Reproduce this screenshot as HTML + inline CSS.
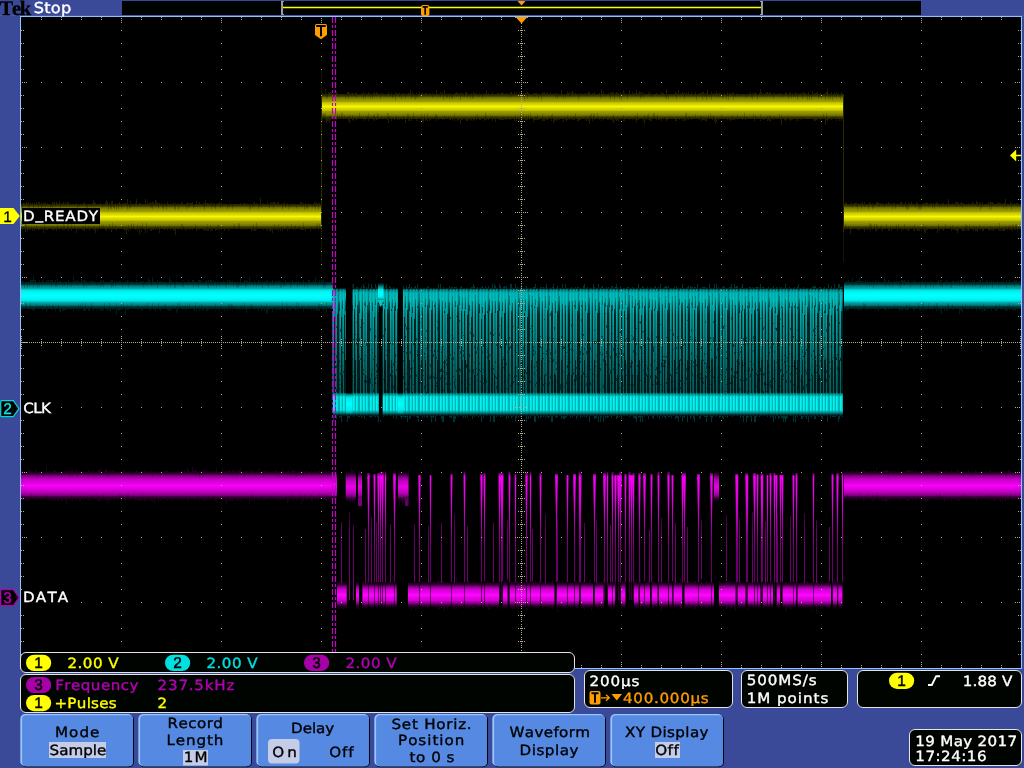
<!DOCTYPE html>
<html lang="en"><head><meta charset="utf-8"><title>Tek oscilloscope - Stop</title>
<style>html,body{margin:0;padding:0;background:#3b4a98;overflow:hidden}svg{display:block;font-family:'DejaVu Sans','Liberation Sans',sans-serif;font-kerning:none}text{white-space:pre;text-rendering:geometricPrecision}svg{will-change:transform}</style>
</head><body>
<svg width="1024" height="768" viewBox="0 0 1024 768">
<defs>
<linearGradient id="gy" x1="0" y1="0" x2="0" y2="1"><stop offset="0" stop-color="#202000"/><stop offset="0.09" stop-color="#3c3c00"/><stop offset="0.13" stop-color="#6c6c00"/><stop offset="0.22" stop-color="#8c8c00"/><stop offset="0.31" stop-color="#a0a000"/><stop offset="0.35" stop-color="#c8c800"/><stop offset="0.43" stop-color="#dcdc00"/><stop offset="0.47" stop-color="#ecec00"/><stop offset="0.5" stop-color="#f8f800"/><stop offset="0.53" stop-color="#ecec00"/><stop offset="0.57" stop-color="#dcdc00"/><stop offset="0.65" stop-color="#c8c800"/><stop offset="0.69" stop-color="#a0a000"/><stop offset="0.78" stop-color="#8c8c00"/><stop offset="0.87" stop-color="#6c6c00"/><stop offset="0.91" stop-color="#3c3c00"/><stop offset="1" stop-color="#202000"/></linearGradient>
<linearGradient id="gc" x1="0" y1="0" x2="0" y2="1"><stop offset="0" stop-color="#001c1c"/><stop offset="0.09" stop-color="#003838"/><stop offset="0.14" stop-color="#007c7c"/><stop offset="0.24" stop-color="#00a8a8"/><stop offset="0.29" stop-color="#00dcdc"/><stop offset="0.36" stop-color="#00f4f4"/><stop offset="0.5" stop-color="#00ffff"/><stop offset="0.64" stop-color="#00f4f4"/><stop offset="0.71" stop-color="#00dcdc"/><stop offset="0.76" stop-color="#00a8a8"/><stop offset="0.86" stop-color="#007c7c"/><stop offset="0.91" stop-color="#003838"/><stop offset="1" stop-color="#001c1c"/></linearGradient>
<linearGradient id="gcl" x1="0" y1="0" x2="0" y2="1"><stop offset="0" stop-color="#006060"/><stop offset="0.1" stop-color="#00c0c0"/><stop offset="0.2" stop-color="#00ecec"/><stop offset="0.5" stop-color="#00ffff"/><stop offset="0.8" stop-color="#00ecec"/><stop offset="0.9" stop-color="#00c0c0"/><stop offset="1" stop-color="#006060"/></linearGradient>
<linearGradient id="gmh" x1="0" y1="0" x2="0" y2="1"><stop offset="0" stop-color="#1c001c"/><stop offset="0.08" stop-color="#3c003c"/><stop offset="0.13" stop-color="#7c007c"/><stop offset="0.2" stop-color="#a000a0"/><stop offset="0.27" stop-color="#c400c4"/><stop offset="0.4" stop-color="#e000e0"/><stop offset="0.5" stop-color="#fa00fa"/><stop offset="0.6" stop-color="#e000e0"/><stop offset="0.73" stop-color="#c400c4"/><stop offset="0.8" stop-color="#a000a0"/><stop offset="0.87" stop-color="#7c007c"/><stop offset="0.92" stop-color="#3c003c"/><stop offset="1" stop-color="#1c001c"/></linearGradient>
<linearGradient id="gmh2" x1="0" y1="0" x2="0" y2="1"><stop offset="0" stop-color="#1c001c"/><stop offset="0.08" stop-color="#380038"/><stop offset="0.13" stop-color="#700070"/><stop offset="0.2" stop-color="#980098"/><stop offset="0.27" stop-color="#b800b8"/><stop offset="0.4" stop-color="#d400d4"/><stop offset="0.5" stop-color="#e800e8"/><stop offset="0.6" stop-color="#d400d4"/><stop offset="0.73" stop-color="#b800b8"/><stop offset="0.8" stop-color="#980098"/><stop offset="0.87" stop-color="#700070"/><stop offset="0.92" stop-color="#380038"/><stop offset="1" stop-color="#1c001c"/></linearGradient>
<linearGradient id="gml" x1="0" y1="0" x2="0" y2="1"><stop offset="0" stop-color="#1c001c"/><stop offset="0.08" stop-color="#3c003c"/><stop offset="0.13" stop-color="#780078"/><stop offset="0.2" stop-color="#a400a4"/><stop offset="0.27" stop-color="#d000d0"/><stop offset="0.4" stop-color="#ec00ec"/><stop offset="0.5" stop-color="#ff08ff"/><stop offset="0.6" stop-color="#ec00ec"/><stop offset="0.73" stop-color="#d000d0"/><stop offset="0.8" stop-color="#a400a4"/><stop offset="0.87" stop-color="#780078"/><stop offset="0.92" stop-color="#3c003c"/><stop offset="1" stop-color="#1c001c"/></linearGradient>
<linearGradient id="gb" gradientUnits="userSpaceOnUse" x1="0" y1="286" x2="0" y2="416"><stop offset="0.02" stop-color="#001c1c"/><stop offset="0.03" stop-color="#004848"/><stop offset="0.05" stop-color="#008888"/><stop offset="0.1" stop-color="#008080"/><stop offset="0.15" stop-color="#005050"/><stop offset="0.22" stop-color="#002424"/><stop offset="0.43" stop-color="#002020"/><stop offset="0.82" stop-color="#001a1a"/><stop offset="0.83" stop-color="#007878"/><stop offset="0.85" stop-color="#00b4b4"/><stop offset="0.96" stop-color="#00b4b4"/><stop offset="0.98" stop-color="#006868"/><stop offset="0.99" stop-color="#001c1c"/></linearGradient>
<linearGradient id="gs" gradientUnits="userSpaceOnUse" x1="0" y1="287" x2="0" y2="415"><stop offset="0.01" stop-color="#004444"/><stop offset="0.02" stop-color="#008c8c"/><stop offset="0.05" stop-color="#00bcbc"/><stop offset="0.1" stop-color="#00c0c0"/><stop offset="0.2" stop-color="#00aaaa"/><stop offset="0.3" stop-color="#009a9a"/><stop offset="0.43" stop-color="#008c8c"/><stop offset="0.65" stop-color="#006e6e"/><stop offset="0.82" stop-color="#005e5e"/><stop offset="0.84" stop-color="#00a0a0"/><stop offset="0.86" stop-color="#00f4f4"/><stop offset="0.96" stop-color="#00f4f4"/><stop offset="0.98" stop-color="#009090"/><stop offset="1" stop-color="#003030"/></linearGradient>
<linearGradient id="gm" gradientUnits="userSpaceOnUse" x1="0" y1="476" x2="0" y2="600"><stop offset="0" stop-color="#e000e0"/><stop offset="0.19" stop-color="#c400c4"/><stop offset="0.44" stop-color="#900090"/><stop offset="0.64" stop-color="#680068"/><stop offset="0.87" stop-color="#640064"/><stop offset="1" stop-color="#900090"/></linearGradient>
<linearGradient id="gm2" gradientUnits="userSpaceOnUse" x1="0" y1="473" x2="0" y2="535"><stop offset="0" stop-color="#f000f0" stop-opacity="0.4"/><stop offset="0.06" stop-color="#f400f4" stop-opacity="1"/><stop offset="0.39" stop-color="#e800e8" stop-opacity="0.9"/><stop offset="1" stop-color="#c000c0" stop-opacity="0"/></linearGradient>
<linearGradient id="gm3" gradientUnits="userSpaceOnUse" x1="0" y1="512" x2="0" y2="600"><stop offset="0" stop-color="#380038"/><stop offset="0.26" stop-color="#640064"/><stop offset="0.82" stop-color="#700070"/><stop offset="1" stop-color="#900090"/></linearGradient>
<clipPath id="cp"><rect x="21" y="17" width="1000" height="651"/></clipPath>
</defs>
<rect width="1024" height="768" fill="#3b4a98"/>
<rect x="122" y="1" width="799" height="14" fill="#000400"/>
<rect x="0" y="15" width="1024" height="1" fill="#4656a8"/>
<rect x="20" y="16" width="1002" height="653" fill="#8fc4ff"/>
<rect x="1022" y="16" width="2" height="653" fill="#3b4a98"/>
<rect x="21" y="17" width="1000" height="651" fill="#000"/>
<g clip-path="url(#cp)">
<path d="M21.5 204V229M22.5 203V230M23.5 203V229M24.5 203V229M25.5 204V232M26.5 202V230M27.5 203V231M28.5 202V229M29.5 204V230M30.5 203V230M31.5 204V229M32.5 203V231M34.5 203V231M36.5 202V230M38.5 202V230M39.5 202V230M41.5 202V230M43.5 203V233M44.5 203V229M45.5 202V230M46.5 204V230M47.5 203V230M50.5 204V229M52.5 202V230M53.5 203V230M54.5 202V230M56.5 202V231M57.5 203V229M58.5 204V229M59.5 201V230M60.5 203V229M62.5 203V230M63.5 202V230M64.5 204V230M65.5 202V229M67.5 202V229M68.5 202V231M69.5 204V229M71.5 204V231M76.5 203V233M78.5 204V230M82.5 204V230M83.5 203V230M84.5 202V231M89.5 204V231M92.5 203V229M93.5 200V230M94.5 202V230M95.5 203V233M97.5 204V231M99.5 204V229M100.5 203V229M105.5 202V230M106.5 200V231M107.5 202V229M109.5 203V230M111.5 201V232M112.5 201V230M115.5 203V230M116.5 204V230M118.5 203V229M119.5 202V229M120.5 204V229M122.5 203V230M124.5 203V231M125.5 203V230M126.5 203V234M127.5 199V230M128.5 204V231M130.5 201V230M135.5 203V230M136.5 199V229M137.5 204V231M139.5 203V234M140.5 203V229M141.5 204V232M144.5 204V230M145.5 199V233M146.5 204V229M147.5 202V231M149.5 203V229M150.5 202V231M151.5 203V231M152.5 202V230M153.5 202V230M154.5 204V229M155.5 200V230M156.5 201V229M157.5 203V230M158.5 203V229M159.5 203V233M161.5 203V229M164.5 203V230M167.5 202V230M170.5 203V230M173.5 202V231M174.5 204V230M175.5 203V235M177.5 204V229M178.5 203V230M180.5 204V229M181.5 202V230M182.5 203V230M185.5 204V231M186.5 203V230M187.5 202V229M188.5 203V230M189.5 203V229M190.5 203V230M191.5 203V229M192.5 202V230M194.5 204V229M196.5 201V231M197.5 204V230M199.5 202V230M203.5 203V230M204.5 203V231M205.5 200V230M206.5 203V230M207.5 203V231M208.5 203V231M210.5 203V231M211.5 203V230M212.5 203V231M214.5 203V229M215.5 204V231M216.5 203V230M217.5 204V230M218.5 203V230M219.5 202V230M220.5 203V229M221.5 203V230M224.5 204V231M228.5 204V231M229.5 203V229M234.5 204V229M240.5 203V229M241.5 204V230M243.5 203V229M244.5 203V230M246.5 203V230M249.5 204V229M251.5 204V231M252.5 204V230M253.5 203V230M254.5 202V231M255.5 204V231M256.5 203V230M260.5 198V229M261.5 204V229M263.5 203V230M266.5 204V230M267.5 202V231M268.5 204V229M269.5 204V231M270.5 202V231M271.5 203V230M272.5 203V233M273.5 202V229M274.5 202V230M275.5 203V230M277.5 202V230M278.5 202V231M280.5 204V231M282.5 203V231M284.5 202V230M287.5 203V231M288.5 204V229M289.5 204V230M293.5 204V230M295.5 204V230M300.5 202V230M301.5 202V230M302.5 204V230M303.5 203V230M305.5 203V231M308.5 203V229M310.5 204V231M314.5 202V230M315.5 203V229M316.5 202V229M318.5 203V230M319.5 203V229" stroke="#202000" stroke-width="1" fill="none"/>
<rect x="21" y="204" width="300" height="25" fill="url(#gy)"/>
<path d="M22.5 208.1V203.5M23.5 223.72V229.5M25.5 222.73V229.5M26.5 222.58V229.5M28.5 208.68V203.5M29.5 209.8V203.5M31.5 226.47V229.5M33.5 210.27V203.5M36.5 225.3V229.5M38.5 208.93V203.5M41.5 208.29V203.5M42.5 206.73V203.5M44.5 222.74V229.5M45.5 207.29V203.5M50.5 208.37V203.5M51.5 206.28V203.5M52.5 209.95V203.5M55.5 206.52V203.5M57.5 224.25V229.5M60.5 208.61V203.5M61.5 225.46V229.5M63.5 222.52V229.5M64.5 224.51V229.5M67.5 222.8V229.5M68.5 222.91V229.5M71.5 223.09V229.5M74.5 224.77V229.5M77.5 210.2V203.5M78.5 226.92V229.5M79.5 206.85V203.5M82.5 226.25V229.5M83.5 226.53V229.5M85.5 223.64V229.5M86.5 209.32V203.5M87.5 210.33V203.5M88.5 225.36V229.5M91.5 206.97V203.5M93.5 226.36V229.5M97.5 226.97V229.5M99.5 224.19V229.5M101.5 225.94V229.5M102.5 207.73V203.5M103.5 224.82V229.5M108.5 210.49V203.5M109.5 223.81V229.5M110.5 208.86V203.5M111.5 209.48V203.5M112.5 222.51V229.5M113.5 208.15V203.5M114.5 209.14V203.5M115.5 225.31V229.5M116.5 210.44V203.5M118.5 210.21V203.5M121.5 209.31V203.5M122.5 226.19V229.5M127.5 209.76V203.5M128.5 224.89V229.5M129.5 209.78V203.5M130.5 208.02V203.5M131.5 223.4V229.5M133.5 223.89V229.5M137.5 224.92V229.5M140.5 225.84V229.5M141.5 226.98V229.5M142.5 222.67V229.5M146.5 222.74V229.5M150.5 206.32V203.5M151.5 208.22V203.5M152.5 209.44V203.5M155.5 226.46V229.5M157.5 226.33V229.5M158.5 208.11V203.5M160.5 225.76V229.5M162.5 207.87V203.5M163.5 210.38V203.5M165.5 206.1V203.5M166.5 209.88V203.5M169.5 225.16V229.5M170.5 206.2V203.5M174.5 209.39V203.5M175.5 210.35V203.5M178.5 210.05V203.5M181.5 224.01V229.5M182.5 223.66V229.5M183.5 225.92V229.5M186.5 209.21V203.5M188.5 208.17V203.5M189.5 207.33V203.5M193.5 208.54V203.5M194.5 207.12V203.5M195.5 224.71V229.5M203.5 206.83V203.5M204.5 210.01V203.5M205.5 206.04V203.5M207.5 224.31V229.5M210.5 225.41V229.5M211.5 209.32V203.5M212.5 206.52V203.5M214.5 207.83V203.5M215.5 209.03V203.5M217.5 224.99V229.5M218.5 224.47V229.5M220.5 208.42V203.5M222.5 207.1V203.5M227.5 209.44V203.5M228.5 206.2V203.5M229.5 207.54V203.5M230.5 226.93V229.5M232.5 209.62V203.5M233.5 226.48V229.5M234.5 224.3V229.5M238.5 223.14V229.5M239.5 223.59V229.5M249.5 209.68V203.5M250.5 209.09V203.5M252.5 208.7V203.5M253.5 224.41V229.5M254.5 206.64V203.5M256.5 222.55V229.5M258.5 209.37V203.5M259.5 206.98V203.5M261.5 207.91V203.5M267.5 206.23V203.5M269.5 208.19V203.5M273.5 208.78V203.5M274.5 224.38V229.5M278.5 223.87V229.5M281.5 226.11V229.5M282.5 209.76V203.5M285.5 207.97V203.5M287.5 225.5V229.5M288.5 209.18V203.5M290.5 206.97V203.5M291.5 224.19V229.5M294.5 226.12V229.5M295.5 225.44V229.5M296.5 208.57V203.5M298.5 226.68V229.5M299.5 226.23V229.5M301.5 206.76V203.5M303.5 222.82V229.5M304.5 210.04V203.5M306.5 208.47V203.5M307.5 208.69V203.5M311.5 226.56V229.5M312.5 207.38V203.5M314.5 206.53V203.5M315.5 209.45V203.5M316.5 225.01V229.5M317.5 223.15V229.5M318.5 209.76V203.5M319.5 223.94V229.5" stroke="#000" stroke-opacity=".2" stroke-width="1" fill="none"/>
<path d="M322.5 93V121M325.5 89V120M326.5 93V123M327.5 94V121M328.5 92V121M329.5 93V123M330.5 92V120M331.5 93V119M333.5 93V119M336.5 92V120M337.5 93V119M347.5 92V119M348.5 92V121M349.5 92V123M351.5 93V119M352.5 93V120M353.5 93V121M355.5 93V119M356.5 92V120M357.5 94V119M359.5 94V119M361.5 94V119M362.5 93V119M363.5 92V121M365.5 93V120M368.5 92V121M370.5 93V119M373.5 93V120M374.5 92V121M376.5 92V120M377.5 93V120M380.5 93V119M382.5 93V119M387.5 94V120M388.5 92V123M391.5 93V121M394.5 94V120M395.5 92V119M396.5 93V119M397.5 94V120M398.5 93V119M399.5 93V120M400.5 94V119M402.5 93V120M404.5 93V119M405.5 94V123M406.5 94V119M408.5 93V121M409.5 93V121M410.5 90V119M411.5 94V121M412.5 92V119M416.5 93V121M418.5 94V119M419.5 92V119M421.5 93V121M422.5 93V121M423.5 94V123M425.5 93V121M426.5 93V120M427.5 94V121M428.5 94V119M429.5 93V121M430.5 94V120M432.5 93V119M434.5 94V119M435.5 94V119M436.5 90V121M438.5 94V120M440.5 92V119M442.5 92V120M443.5 94V119M444.5 90V120M446.5 93V119M449.5 93V120M450.5 94V120M452.5 94V120M454.5 94V121M455.5 93V119M456.5 92V119M457.5 93V121M458.5 93V120M460.5 93V124M461.5 93V120M462.5 93V120M465.5 92V120M466.5 92V121M467.5 93V121M468.5 94V120M470.5 94V121M471.5 93V120M473.5 92V121M474.5 93V120M475.5 94V119M476.5 93V120M479.5 93V120M480.5 94V120M484.5 93V121M485.5 94V120M486.5 90V120M487.5 94V119M488.5 93V120M492.5 92V121M495.5 94V122M497.5 93V119M498.5 93V119M499.5 94V120M500.5 93V120M501.5 93V120M502.5 92V120M503.5 93V120M504.5 94V119M505.5 93V120M507.5 93V120M508.5 94V119M510.5 92V120M511.5 92V119M514.5 92V121M516.5 92V121M519.5 92V121M521.5 92V119M523.5 93V120M525.5 93V120M526.5 93V120M527.5 92V120M528.5 93V119M529.5 94V120M533.5 93V122M534.5 93V120M535.5 93V120M536.5 93V120M537.5 94V120M538.5 93V120M539.5 94V120M542.5 92V121M543.5 93V121M544.5 92V121M546.5 93V120M547.5 93V120M550.5 92V119M551.5 94V121M553.5 94V123M554.5 93V121M555.5 94V120M556.5 93V121M557.5 93V120M559.5 94V120M561.5 90V119M563.5 94V122M565.5 94V120M566.5 94V121M567.5 92V120M568.5 93V119M569.5 92V120M571.5 92V119M572.5 91V120M573.5 93V120M574.5 94V120M575.5 93V119M576.5 94V119M577.5 94V121M578.5 93V121M579.5 94V120M580.5 93V120M585.5 93V120M586.5 93V121M588.5 92V121M589.5 92V124M590.5 94V119M592.5 93V121M593.5 94V119M594.5 92V120M599.5 93V120M601.5 89V121M603.5 92V120M607.5 94V120M608.5 93V120M610.5 92V120M611.5 93V120M612.5 92V121M613.5 92V123M615.5 93V120M616.5 92V121M617.5 93V120M618.5 93V121M620.5 92V120M623.5 90V121M624.5 93V121M625.5 94V119M626.5 94V119M629.5 90V120M632.5 92V120M634.5 93V119M635.5 93V120M636.5 90V122M637.5 94V120M638.5 93V120M639.5 91V119M640.5 92V119M642.5 92V119M643.5 93V121M644.5 94V124M646.5 94V120M648.5 92V120M649.5 94V120M650.5 93V121M651.5 94V121M656.5 93V120M658.5 94V120M659.5 94V120M661.5 92V121M662.5 93V119M663.5 93V119M666.5 89V121M667.5 94V120M675.5 92V121M676.5 93V121M678.5 90V119M679.5 94V120M680.5 93V119M681.5 94V119M682.5 92V121M683.5 93V119M684.5 93V121M685.5 94V121M686.5 92V120M688.5 92V120M689.5 94V119M691.5 92V120M692.5 94V119M693.5 94V119M695.5 92V119M699.5 93V120M700.5 93V119M701.5 93V121M702.5 92V120M703.5 92V120M704.5 94V120M705.5 93V121M706.5 93V121M707.5 90V119M708.5 94V119M711.5 92V119M712.5 94V120M713.5 93V119M714.5 94V121M715.5 93V124M716.5 91V122M718.5 93V120M719.5 93V119M720.5 93V119M724.5 93V119M727.5 92V120M729.5 93V120M730.5 93V121M731.5 94V120M732.5 92V120M733.5 93V120M734.5 93V120M736.5 94V119M737.5 93V120M742.5 94V120M745.5 94V120M747.5 93V119M748.5 94V119M750.5 92V119M752.5 93V119M754.5 93V121M755.5 92V119M759.5 93V119M760.5 89V121M761.5 92V119M763.5 93V120M765.5 93V119M766.5 92V119M767.5 92V121M768.5 93V120M769.5 93V121M770.5 92V121M773.5 93V120M774.5 93V119M778.5 93V119M780.5 93V120M781.5 94V125M784.5 94V120M785.5 92V121M786.5 93V120M789.5 93V120M790.5 92V121M791.5 94V120M792.5 93V120M793.5 94V119M795.5 92V119M796.5 93V121M798.5 93V121M800.5 93V120M802.5 93V119M803.5 92V119M804.5 93V119M805.5 93V119M806.5 94V119M808.5 92V119M811.5 94V119M812.5 91V119M813.5 94V120M814.5 93V121M815.5 93V121M816.5 93V120M817.5 92V120M820.5 93V120M825.5 93V125M826.5 92V120M827.5 89V121M828.5 93V120M831.5 92V120M834.5 92V119M836.5 92V121M837.5 93V119M839.5 94V121M841.5 92V121" stroke="#202000" stroke-width="1" fill="none"/>
<rect x="321" y="94" width="523" height="25" fill="url(#gy)"/>
<path d="M322.5 114.13V119.5M323.5 113.19V119.5M324.5 114.14V119.5M325.5 112.9V119.5M326.5 98.49V93.5M327.5 98.35V93.5M329.5 115.56V119.5M330.5 115.47V119.5M333.5 98V93.5M335.5 113.3V119.5M337.5 113.69V119.5M338.5 97.64V93.5M339.5 114.4V119.5M341.5 112.7V119.5M342.5 112.69V119.5M344.5 115.23V119.5M345.5 98.77V93.5M347.5 116.87V119.5M348.5 99.59V93.5M349.5 114.5V119.5M351.5 96.44V93.5M352.5 115.04V119.5M354.5 96.02V93.5M356.5 98.29V93.5M359.5 112.68V119.5M363.5 99.51V93.5M365.5 98.26V93.5M367.5 115.56V119.5M368.5 112.75V119.5M370.5 98.67V93.5M372.5 99V93.5M373.5 114.92V119.5M374.5 114.23V119.5M377.5 112.73V119.5M378.5 114.21V119.5M380.5 99.59V93.5M381.5 115.44V119.5M384.5 116.69V119.5M385.5 96.36V93.5M387.5 112.8V119.5M388.5 113.49V119.5M389.5 115.7V119.5M390.5 97.22V93.5M392.5 98.55V93.5M393.5 96.62V93.5M395.5 100.44V93.5M396.5 115.53V119.5M399.5 97V93.5M401.5 99.59V93.5M403.5 115.46V119.5M405.5 98.59V93.5M407.5 113.22V119.5M408.5 113.55V119.5M411.5 99.34V93.5M412.5 96.9V93.5M413.5 112.65V119.5M414.5 99.19V93.5M415.5 99.83V93.5M416.5 97.44V93.5M417.5 98.92V93.5M421.5 114.07V119.5M424.5 113.76V119.5M427.5 113.13V119.5M432.5 97.89V93.5M434.5 116.75V119.5M435.5 114V119.5M436.5 113.98V119.5M437.5 116.04V119.5M440.5 97.14V93.5M443.5 100.35V93.5M444.5 115.63V119.5M446.5 98.81V93.5M447.5 97.52V93.5M448.5 116.29V119.5M449.5 99.32V93.5M451.5 98.27V93.5M452.5 99.39V93.5M454.5 113.39V119.5M460.5 100.07V93.5M462.5 96.94V93.5M464.5 97.12V93.5M467.5 97.69V93.5M468.5 96.49V93.5M470.5 99.4V93.5M472.5 98.98V93.5M473.5 97.72V93.5M475.5 116.15V119.5M477.5 113.93V119.5M479.5 96.95V93.5M482.5 98.95V93.5M483.5 116.66V119.5M485.5 112.51V119.5M486.5 114.86V119.5M490.5 115.31V119.5M492.5 115.73V119.5M495.5 115.97V119.5M496.5 116.23V119.5M502.5 116.21V119.5M507.5 116.02V119.5M510.5 97.86V93.5M515.5 115.49V119.5M520.5 112.89V119.5M523.5 113.87V119.5M524.5 100.43V93.5M526.5 114.35V119.5M527.5 98.99V93.5M528.5 114.27V119.5M530.5 112.9V119.5M531.5 116.5V119.5M534.5 97.43V93.5M535.5 116.53V119.5M536.5 116.81V119.5M537.5 114.08V119.5M538.5 99.07V93.5M541.5 100.46V93.5M542.5 113.61V119.5M549.5 115.89V119.5M551.5 115.31V119.5M552.5 113.83V119.5M555.5 98.15V93.5M557.5 98.86V93.5M558.5 96.74V93.5M560.5 97.12V93.5M563.5 99.04V93.5M564.5 116.71V119.5M565.5 97.86V93.5M567.5 115.15V119.5M569.5 97.02V93.5M570.5 96.1V93.5M573.5 116.83V119.5M575.5 113.23V119.5M578.5 99.87V93.5M579.5 97.18V93.5M585.5 115.62V119.5M586.5 96.25V93.5M589.5 115.57V119.5M590.5 114.23V119.5M591.5 113.42V119.5M593.5 113.22V119.5M594.5 113.76V119.5M597.5 112.84V119.5M598.5 116.63V119.5M600.5 98.48V93.5M601.5 116.22V119.5M602.5 116.73V119.5M606.5 115.21V119.5M610.5 99.71V93.5M612.5 116.73V119.5M613.5 114.75V119.5M614.5 99.66V93.5M619.5 98.98V93.5M621.5 100.49V93.5M623.5 115.08V119.5M627.5 99.5V93.5M635.5 115.67V119.5M637.5 112.8V119.5M640.5 98.88V93.5M641.5 97.35V93.5M642.5 96.21V93.5M643.5 97.67V93.5M644.5 114.77V119.5M647.5 114.92V119.5M648.5 113.51V119.5M651.5 98V93.5M652.5 96.12V93.5M653.5 113.28V119.5M654.5 112.78V119.5M657.5 114.8V119.5M658.5 96.6V93.5M661.5 96.06V93.5M664.5 116.86V119.5M665.5 97.73V93.5M666.5 99.23V93.5M667.5 96.46V93.5M668.5 99.61V93.5M670.5 115.9V119.5M676.5 99.57V93.5M684.5 98.9V93.5M685.5 113.29V119.5M686.5 112.63V119.5M688.5 116.36V119.5M690.5 116.96V119.5M692.5 96.8V93.5M695.5 114.25V119.5M696.5 100.4V93.5M700.5 115.8V119.5M701.5 116.53V119.5M702.5 100.44V93.5M705.5 96.84V93.5M706.5 100.31V93.5M708.5 115.02V119.5M709.5 97.62V93.5M710.5 113.42V119.5M711.5 100.03V93.5M713.5 115.07V119.5M718.5 97.57V93.5M720.5 96.54V93.5M721.5 114.74V119.5M722.5 99.43V93.5M723.5 97.95V93.5M726.5 100.08V93.5M728.5 100.28V93.5M732.5 115V119.5M733.5 99.81V93.5M734.5 96.2V93.5M735.5 96.87V93.5M737.5 114.79V119.5M739.5 96.67V93.5M744.5 112.74V119.5M745.5 97.48V93.5M746.5 116.23V119.5M747.5 97.31V93.5M751.5 98.16V93.5M752.5 99.42V93.5M753.5 113.73V119.5M755.5 115.23V119.5M757.5 100.16V93.5M760.5 114.23V119.5M763.5 97.09V93.5M767.5 115.56V119.5M769.5 115.28V119.5M770.5 115.68V119.5M773.5 98.78V93.5M774.5 116.91V119.5M779.5 113.62V119.5M781.5 114.95V119.5M783.5 97.03V93.5M787.5 116.21V119.5M788.5 98.98V93.5M791.5 98.11V93.5M793.5 96.39V93.5M795.5 97.1V93.5M797.5 99.97V93.5M800.5 116.77V119.5M802.5 99.34V93.5M803.5 116.4V119.5M807.5 100.19V93.5M809.5 100.21V93.5M811.5 100.16V93.5M817.5 116.55V119.5M818.5 98.66V93.5M819.5 97.22V93.5M821.5 99.05V93.5M822.5 96.77V93.5M823.5 113.44V119.5M825.5 100.46V93.5M826.5 112.9V119.5M828.5 99.85V93.5M830.5 99.36V93.5M832.5 100.21V93.5M833.5 116.69V119.5M834.5 97.25V93.5M835.5 115.82V119.5M836.5 98.15V93.5M839.5 97.08V93.5M840.5 99.63V93.5M843.5 116.52V119.5" stroke="#000" stroke-opacity=".2" stroke-width="1" fill="none"/>
<path d="M845.5 202V230M846.5 203V229M848.5 204V229M849.5 204V229M850.5 204V234M851.5 202V230M854.5 203V229M855.5 203V229M856.5 203V229M857.5 203V230M858.5 204V230M859.5 204V231M860.5 203V229M861.5 203V229M862.5 202V230M864.5 202V232M866.5 204V230M867.5 204V230M869.5 202V230M870.5 203V231M871.5 204V229M872.5 203V230M875.5 204V231M876.5 202V231M877.5 202V230M878.5 203V229M879.5 203V229M880.5 203V229M881.5 204V230M882.5 203V231M886.5 203V229M888.5 202V231M889.5 203V231M891.5 203V231M893.5 203V229M894.5 203V229M897.5 203V231M900.5 202V229M901.5 202V231M902.5 203V229M903.5 204V230M905.5 202V230M907.5 204V230M908.5 203V231M909.5 203V230M911.5 202V229M913.5 204V231M914.5 204V231M916.5 202V230M917.5 203V231M918.5 204V230M919.5 204V231M921.5 204V231M922.5 204V229M923.5 203V230M924.5 203V232M925.5 203V233M926.5 202V230M927.5 203V230M930.5 203V229M931.5 203V230M933.5 203V229M935.5 203V229M936.5 202V229M937.5 203V233M939.5 203V231M942.5 203V230M943.5 203V231M947.5 203V229M948.5 199V229M951.5 204V231M952.5 203V230M954.5 204V230M955.5 202V230M956.5 202V231M957.5 202V233M958.5 203V231M960.5 203V229M961.5 202V230M962.5 203V231M963.5 203V231M964.5 204V231M966.5 204V231M967.5 204V230M968.5 203V231M969.5 204V230M970.5 204V229M972.5 202V230M973.5 203V231M975.5 204V231M976.5 201V231M977.5 202V232M979.5 202V230M980.5 203V230M982.5 202V231M983.5 204V231M988.5 202V230M989.5 203V231M990.5 202V230M991.5 202V230M992.5 202V230M993.5 203V231M995.5 204V230M997.5 203V229M998.5 202V230M999.5 203V231M1000.5 203V231M1002.5 204V231M1003.5 203V231M1004.5 203V231M1005.5 199V230M1007.5 204V230M1009.5 204V230M1010.5 202V230M1011.5 203V230M1012.5 204V231M1014.5 203V230M1015.5 204V230M1016.5 203V229M1017.5 203V231M1019.5 204V229M1020.5 204V230" stroke="#202000" stroke-width="1" fill="none"/>
<rect x="844" y="204" width="177" height="25" fill="url(#gy)"/>
<path d="M845.5 223.47V229.5M846.5 225.98V229.5M848.5 226.02V229.5M849.5 206.8V203.5M852.5 207.87V203.5M856.5 206.73V203.5M857.5 210.49V203.5M861.5 209.06V203.5M864.5 207.05V203.5M866.5 226.41V229.5M868.5 209.77V203.5M869.5 223.14V229.5M870.5 223.83V229.5M871.5 224.48V229.5M872.5 209.25V203.5M873.5 208.21V203.5M874.5 224.08V229.5M876.5 224.09V229.5M877.5 225.67V229.5M879.5 206.74V203.5M880.5 226.03V229.5M881.5 225.33V229.5M884.5 207.56V203.5M886.5 224.15V229.5M890.5 226.75V229.5M892.5 209.89V203.5M895.5 209.26V203.5M896.5 224.89V229.5M898.5 224V229.5M902.5 206.9V203.5M903.5 206.39V203.5M904.5 224V229.5M905.5 207.4V203.5M906.5 209.56V203.5M907.5 209.47V203.5M908.5 209.95V203.5M912.5 226.66V229.5M914.5 224.74V229.5M915.5 207.67V203.5M918.5 210.25V203.5M919.5 209.02V203.5M920.5 209.77V203.5M921.5 208.89V203.5M922.5 226.91V229.5M923.5 224.34V229.5M924.5 206.11V203.5M925.5 226.52V229.5M928.5 207.7V203.5M932.5 208.52V203.5M934.5 208.72V203.5M938.5 223.29V229.5M939.5 207.59V203.5M941.5 207.32V203.5M944.5 206.18V203.5M945.5 224.19V229.5M947.5 207.51V203.5M950.5 225.91V229.5M952.5 225.08V229.5M956.5 206.77V203.5M957.5 225.92V229.5M960.5 206.3V203.5M962.5 208.81V203.5M964.5 226.47V229.5M965.5 224.52V229.5M966.5 224.72V229.5M967.5 225.44V229.5M969.5 224.79V229.5M973.5 225.39V229.5M974.5 226.78V229.5M976.5 226.26V229.5M977.5 206.05V203.5M978.5 206.67V203.5M979.5 224.78V229.5M980.5 210.11V203.5M981.5 207.8V203.5M983.5 206.3V203.5M989.5 209.76V203.5M990.5 226.04V229.5M991.5 210.23V203.5M999.5 222.94V229.5M1003.5 208.42V203.5M1005.5 225.58V229.5M1006.5 209.75V203.5M1008.5 226.7V229.5M1009.5 224.74V229.5M1010.5 226.49V229.5M1011.5 209.99V203.5M1012.5 223.77V229.5M1013.5 224.96V229.5M1015.5 224.56V229.5M1016.5 224.16V229.5M1017.5 206.32V203.5" stroke="#000" stroke-opacity=".2" stroke-width="1" fill="none"/>
<path d="M321.5 96V232M843.5 96V232" stroke="#2a2a00" stroke-width="1" fill="none"/>
<path d="M321.5 70V96M321.5 232V262M843.5 232V262" stroke="#141400" stroke-width="1" fill="none"/>
<path d="M21.5 281V310M22.5 281V309M23.5 281V309M24.5 282V309M27.5 282V309M28.5 281V310M30.5 280V310M31.5 280V309M32.5 280V310M33.5 276V311M34.5 280V310M35.5 280V309M39.5 280V309M41.5 282V309M42.5 280V310M43.5 281V310M44.5 282V309M46.5 280V311M47.5 281V310M48.5 280V309M49.5 282V309M50.5 280V309M51.5 280V310M52.5 280V310M54.5 281V309M55.5 280V311M57.5 279V309M59.5 281V311M60.5 281V312M62.5 281V311M63.5 282V311M64.5 281V310M65.5 282V310M66.5 281V310M68.5 280V309M70.5 282V310M73.5 276V311M74.5 281V309M76.5 280V310M77.5 281V309M78.5 281V311M80.5 282V310M81.5 279V309M83.5 280V311M84.5 280V311M85.5 281V311M86.5 281V309M88.5 282V311M89.5 281V311M90.5 281V309M92.5 281V310M93.5 281V311M97.5 282V311M100.5 280V311M101.5 281V310M102.5 281V311M103.5 280V310M106.5 282V310M107.5 282V311M109.5 282V311M110.5 281V311M111.5 280V309M112.5 280V310M114.5 281V310M115.5 282V309M116.5 281V315M117.5 282V310M118.5 282V311M119.5 281V310M120.5 281V310M121.5 282V310M123.5 282V310M125.5 281V315M127.5 280V310M128.5 281V310M131.5 281V309M136.5 280V309M138.5 282V310M140.5 281V309M141.5 282V311M142.5 281V310M143.5 281V309M146.5 281V309M148.5 278V309M149.5 280V310M150.5 282V311M152.5 277V309M153.5 281V310M155.5 282V311M157.5 280V309M159.5 281V310M160.5 281V311M167.5 282V310M168.5 282V311M169.5 277V310M170.5 280V311M171.5 281V310M173.5 282V309M176.5 281V313M177.5 282V311M182.5 280V310M185.5 282V311M188.5 280V310M189.5 282V309M192.5 280V309M193.5 280V310M194.5 281V311M196.5 282V311M198.5 280V309M199.5 280V311M200.5 280V310M202.5 281V311M203.5 282V310M205.5 281V309M206.5 280V311M207.5 281V311M208.5 280V310M210.5 280V310M211.5 280V309M212.5 282V310M213.5 280V309M215.5 281V311M217.5 281V310M218.5 282V309M219.5 281V311M222.5 282V310M223.5 281V309M224.5 281V311M227.5 280V311M228.5 282V309M229.5 280V310M230.5 281V310M232.5 281V310M236.5 282V310M239.5 282V310M240.5 278V310M242.5 282V310M244.5 280V309M245.5 281V310M246.5 280V313M247.5 281V309M249.5 277V310M254.5 281V310M255.5 282V309M258.5 280V311M259.5 281V309M260.5 281V309M261.5 282V311M262.5 281V310M264.5 281V311M266.5 281V314M267.5 280V313M268.5 282V310M269.5 282V310M270.5 281V309M272.5 280V312M273.5 282V309M275.5 281V310M276.5 281V310M278.5 280V310M279.5 281V310M280.5 281V310M285.5 280V311M289.5 282V311M290.5 281V310M292.5 280V309M295.5 282V310M296.5 281V310M298.5 281V310M303.5 280V311M308.5 280V310M309.5 280V309M311.5 282V310M312.5 282V309M313.5 280V311M314.5 282V309M315.5 277V310M316.5 282V311M317.5 281V310M318.5 282V310M319.5 280V311M321.5 280V309M322.5 281V310M323.5 280V311M325.5 282V310M326.5 281V312" stroke="#001e1e" stroke-width="1" fill="none"/>
<rect x="21" y="282" width="312" height="27" fill="url(#gc)"/>
<path d="M21.5 304.35V309.5M24.5 288.05V281.5M25.5 303.34V309.5M26.5 303.83V309.5M27.5 288.31V281.5M29.5 286.72V281.5M30.5 302.57V309.5M33.5 287.57V281.5M36.5 303.72V309.5M37.5 288.27V281.5M38.5 304.93V309.5M39.5 287.16V281.5M40.5 305.87V309.5M42.5 304.47V309.5M46.5 304.03V309.5M47.5 306.33V309.5M49.5 304.47V309.5M51.5 286.77V281.5M52.5 304.9V309.5M53.5 306.01V309.5M55.5 286.6V281.5M56.5 286.63V281.5M57.5 285.46V281.5M58.5 304.67V309.5M62.5 286.66V281.5M64.5 285.96V281.5M67.5 287.22V281.5M69.5 284.86V281.5M71.5 286.98V281.5M77.5 285.28V281.5M78.5 304.56V309.5M80.5 304.29V309.5M82.5 303.58V309.5M83.5 288.01V281.5M84.5 286.31V281.5M85.5 302.78V309.5M86.5 287.29V281.5M88.5 285.29V281.5M89.5 285.15V281.5M90.5 306.26V309.5M91.5 302.5V309.5M92.5 305.57V309.5M96.5 285.16V281.5M97.5 285.77V281.5M100.5 287.49V281.5M101.5 285.06V281.5M102.5 285.71V281.5M103.5 287.27V281.5M104.5 302.89V309.5M109.5 302.87V309.5M111.5 288.21V281.5M112.5 285.83V281.5M113.5 286.69V281.5M115.5 286.7V281.5M116.5 303.3V309.5M121.5 304.04V309.5M122.5 287.33V281.5M123.5 303.8V309.5M124.5 306V309.5M125.5 286.01V281.5M127.5 304.77V309.5M128.5 287.47V281.5M129.5 285.7V281.5M131.5 302.52V309.5M134.5 285.93V281.5M137.5 304.56V309.5M138.5 305.82V309.5M142.5 284.64V281.5M143.5 287.48V281.5M144.5 284.54V281.5M145.5 304.64V309.5M146.5 285.19V281.5M147.5 302.58V309.5M151.5 285.95V281.5M152.5 303.31V309.5M157.5 288.07V281.5M158.5 302.96V309.5M164.5 305.01V309.5M165.5 304.04V309.5M167.5 286.5V281.5M170.5 287.31V281.5M172.5 305.62V309.5M174.5 288.19V281.5M175.5 287.67V281.5M176.5 306.18V309.5M177.5 303.07V309.5M179.5 302.68V309.5M180.5 305.94V309.5M182.5 286.72V281.5M183.5 286.63V281.5M185.5 305.36V309.5M187.5 305.36V309.5M189.5 303.71V309.5M193.5 287.16V281.5M195.5 302.54V309.5M198.5 287.57V281.5M199.5 305.39V309.5M201.5 303.92V309.5M202.5 285.04V281.5M207.5 286.76V281.5M208.5 288.35V281.5M209.5 305.61V309.5M210.5 285.75V281.5M212.5 285.57V281.5M213.5 286.53V281.5M215.5 303.74V309.5M216.5 287.31V281.5M218.5 285.57V281.5M219.5 286.14V281.5M220.5 305.54V309.5M221.5 306.04V309.5M225.5 285.87V281.5M226.5 287.58V281.5M228.5 303.87V309.5M229.5 304.55V309.5M230.5 303.96V309.5M231.5 304.53V309.5M232.5 304.81V309.5M233.5 287.04V281.5M234.5 306.17V309.5M236.5 287.18V281.5M237.5 287.47V281.5M238.5 287.51V281.5M239.5 285.7V281.5M240.5 305.22V309.5M241.5 286.51V281.5M242.5 305.01V309.5M244.5 302.68V309.5M245.5 287.4V281.5M246.5 286.45V281.5M250.5 304V309.5M251.5 305.56V309.5M252.5 304.41V309.5M253.5 285.41V281.5M256.5 286.32V281.5M258.5 284.64V281.5M260.5 284.67V281.5M261.5 304.73V309.5M262.5 288.19V281.5M264.5 306.23V309.5M266.5 303.58V309.5M267.5 286.32V281.5M268.5 287.79V281.5M271.5 284.6V281.5M273.5 285.68V281.5M275.5 306.2V309.5M278.5 306.16V309.5M280.5 288.34V281.5M281.5 287.67V281.5M282.5 302.61V309.5M283.5 286.85V281.5M284.5 285.71V281.5M285.5 286.16V281.5M286.5 303.04V309.5M287.5 305.61V309.5M289.5 306V309.5M290.5 288.16V281.5M291.5 285.91V281.5M296.5 302.57V309.5M297.5 287.59V281.5M298.5 302.64V309.5M299.5 284.98V281.5M301.5 285.58V281.5M302.5 305.23V309.5M304.5 287.12V281.5M307.5 287.66V281.5M308.5 305.49V309.5M317.5 285.47V281.5M318.5 304.2V309.5M319.5 303.46V309.5M321.5 303.54V309.5M323.5 288.43V281.5M324.5 286.7V281.5M325.5 287.54V281.5M326.5 302.71V309.5M331.5 305.18V309.5M332.5 305.29V309.5" stroke="#000" stroke-opacity=".2" stroke-width="1" fill="none"/>
<path d="M844.5 282V311M846.5 281V311M847.5 282V310M848.5 280V310M852.5 278V309M855.5 281V310M856.5 281V309M857.5 280V310M858.5 281V310M859.5 278V310M860.5 281V309M861.5 281V311M863.5 281V309M864.5 282V309M865.5 280V310M867.5 281V310M869.5 281V309M870.5 282V310M872.5 281V309M875.5 280V310M877.5 282V310M878.5 281V311M884.5 278V310M885.5 280V310M886.5 281V310M888.5 280V310M889.5 281V309M894.5 281V309M896.5 281V309M897.5 281V309M899.5 281V311M900.5 282V310M901.5 280V310M902.5 280V311M903.5 281V309M904.5 280V309M905.5 281V310M906.5 282V310M907.5 281V310M908.5 280V310M913.5 280V311M914.5 282V310M915.5 281V309M919.5 282V310M920.5 281V311M922.5 281V310M923.5 282V311M925.5 281V310M926.5 282V310M929.5 282V310M931.5 281V309M932.5 282V310M936.5 282V311M937.5 281V309M938.5 280V310M940.5 280V311M941.5 280V314M944.5 281V311M946.5 280V310M947.5 281V311M948.5 282V309M949.5 282V310M952.5 281V310M953.5 281V310M956.5 281V309M958.5 280V309M959.5 282V314M960.5 280V310M961.5 280V311M962.5 281V313M964.5 280V309M966.5 282V310M968.5 282V310M972.5 280V310M974.5 280V309M976.5 282V311M978.5 281V309M979.5 280V310M980.5 280V310M982.5 278V312M983.5 282V310M984.5 281V311M985.5 282V311M986.5 280V309M987.5 281V310M991.5 281V311M993.5 281V309M995.5 282V311M996.5 282V311M997.5 281V310M999.5 282V309M1000.5 282V310M1001.5 281V309M1002.5 282V310M1003.5 281V310M1005.5 282V311M1006.5 280V310M1007.5 282V311M1009.5 280V310M1010.5 282V310M1012.5 282V310M1013.5 281V311M1014.5 280V310M1015.5 281V311M1016.5 280V309M1017.5 282V311M1019.5 281V309M1020.5 281V309" stroke="#001e1e" stroke-width="1" fill="none"/>
<rect x="844" y="282" width="177" height="27" fill="url(#gc)"/>
<path d="M845.5 306.34V309.5M847.5 284.77V281.5M849.5 303.5V309.5M852.5 285.84V281.5M855.5 305.62V309.5M859.5 285.15V281.5M863.5 302.64V309.5M864.5 303.57V309.5M865.5 303.86V309.5M866.5 285.42V281.5M869.5 286.83V281.5M871.5 285.15V281.5M873.5 288.45V281.5M878.5 303.39V309.5M885.5 286.38V281.5M886.5 285.5V281.5M887.5 306.49V309.5M889.5 286.76V281.5M892.5 287.28V281.5M894.5 304.15V309.5M897.5 305.89V309.5M899.5 286.23V281.5M900.5 288.08V281.5M901.5 285.04V281.5M904.5 285.61V281.5M906.5 303.46V309.5M907.5 305.96V309.5M909.5 303.56V309.5M910.5 287.29V281.5M911.5 306.14V309.5M916.5 284.53V281.5M918.5 303.14V309.5M919.5 305.78V309.5M920.5 287.46V281.5M922.5 303.55V309.5M923.5 302.58V309.5M925.5 288.49V281.5M926.5 286.61V281.5M928.5 303.04V309.5M930.5 287.22V281.5M933.5 288.22V281.5M934.5 304.8V309.5M935.5 285.42V281.5M936.5 302.96V309.5M937.5 303.29V309.5M940.5 286.97V281.5M941.5 286.38V281.5M942.5 287.39V281.5M946.5 286.36V281.5M947.5 303.24V309.5M948.5 303.9V309.5M950.5 287.62V281.5M951.5 288.12V281.5M952.5 303.98V309.5M954.5 306.29V309.5M959.5 285.77V281.5M962.5 304.77V309.5M964.5 286.62V281.5M965.5 304.21V309.5M970.5 305.18V309.5M972.5 286.51V281.5M974.5 305.84V309.5M975.5 286.56V281.5M977.5 306.38V309.5M980.5 287.97V281.5M982.5 287.03V281.5M983.5 303.78V309.5M984.5 285.32V281.5M985.5 306.36V309.5M986.5 287.18V281.5M988.5 286.2V281.5M992.5 288.36V281.5M995.5 305.48V309.5M996.5 304.46V309.5M998.5 287.4V281.5M999.5 303.58V309.5M1003.5 305.96V309.5M1006.5 288.22V281.5M1007.5 305.76V309.5M1008.5 306.01V309.5M1009.5 303.1V309.5M1010.5 285.18V281.5M1013.5 304.42V309.5M1014.5 286.91V281.5M1020.5 285.01V281.5" stroke="#000" stroke-opacity=".2" stroke-width="1" fill="none"/>
<path d="M333.5 413V422M334.5 289V290M334.5 413V418M335.5 289V290M336.5 413V419M337.5 288V290M337.5 413V416M338.5 288V290M339.5 289V290M339.5 413V418M340.5 288V290M340.5 413V417M341.5 413V422M342.5 289V290M342.5 413V416M343.5 289V290M343.5 413V415M344.5 289V290M345.5 413V416M346.5 289V290M347.5 289V290M347.5 413V422M348.5 413V418M349.5 289V290M349.5 413V418M350.5 287V290M350.5 413V415M352.5 284V290M353.5 284V290M353.5 413V417M354.5 289V290M354.5 413V415M355.5 413V416M356.5 287V290M356.5 413V416M357.5 287V290M358.5 289V290M358.5 413V417M359.5 289V290M359.5 413V417M360.5 289V290M360.5 413V416M361.5 286V290M361.5 413V418M362.5 289V290M362.5 413V417M363.5 284V290M364.5 286V290M364.5 413V419M365.5 413V416M366.5 287V290M366.5 413V415M367.5 289V290M368.5 284V290M369.5 289V290M369.5 413V417M370.5 289V290M370.5 413V417M371.5 284V290M371.5 413V418M372.5 287V290M373.5 413V416M374.5 289V290M374.5 413V417M375.5 284V290M375.5 413V417M376.5 287V290M376.5 413V416M377.5 289V290M377.5 413V417M378.5 413V422M379.5 413V419M380.5 287V290M380.5 413V422M381.5 284V290M381.5 413V418M382.5 288V290M382.5 413V415M383.5 284V290M383.5 413V417M384.5 413V415M385.5 286V290M385.5 413V415M386.5 284V290M386.5 413V415M387.5 289V290M387.5 413V416M388.5 288V290M388.5 413V416M389.5 286V290M389.5 413V416M390.5 287V290M390.5 413V416M392.5 413V416M393.5 287V290M393.5 413V418M395.5 288V290M396.5 413V419M397.5 413V416M398.5 288V290M399.5 413V416M400.5 287V290M400.5 413V417M401.5 284V290M401.5 413V419M402.5 288V290M402.5 413V417M403.5 286V290M403.5 413V417M404.5 289V290M404.5 413V417M405.5 289V290M405.5 413V418M406.5 286V290M406.5 413V417M407.5 288V290M407.5 413V422M408.5 287V290M408.5 413V416M409.5 284V290M409.5 413V419M410.5 413V418M411.5 287V290M412.5 413V416M413.5 288V290M413.5 413V416M414.5 287V290M414.5 413V417M415.5 286V290M415.5 413V416M416.5 413V417M417.5 284V290M417.5 413V418M418.5 288V290M418.5 413V422M419.5 288V290M420.5 289V290M422.5 288V290M422.5 413V418M423.5 289V290M424.5 413V417M426.5 288V290M426.5 413V417M427.5 286V290M427.5 413V418M428.5 287V290M429.5 289V290M430.5 289V290M430.5 413V417M431.5 413V422M432.5 413V417M433.5 288V290M433.5 413V418M435.5 413V422M437.5 288V290M438.5 284V290M439.5 413V415M440.5 284V290M440.5 413V416M441.5 288V290M441.5 413V419M442.5 289V290M442.5 413V422M443.5 287V290M443.5 413V422M444.5 413V416M445.5 413V415M446.5 288V290M447.5 288V290M448.5 289V290M449.5 286V290M449.5 413V417M450.5 288V290M450.5 413V418M451.5 287V290M451.5 413V418M452.5 287V290M453.5 289V290M453.5 413V422M454.5 287V290M454.5 413V422M455.5 287V290M455.5 413V419M456.5 287V290M456.5 413V416M457.5 288V290M458.5 413V417M460.5 287V290M460.5 413V416M461.5 286V290M462.5 413V416M463.5 413V418M464.5 289V290M464.5 413V416M465.5 413V418M467.5 288V290M467.5 413V417M470.5 413V416M471.5 287V290M472.5 287V290M472.5 413V419M473.5 284V290M473.5 413V416M474.5 286V290M474.5 413V417M475.5 413V415M476.5 413V416M477.5 287V290M477.5 413V416M478.5 288V290M478.5 413V417M479.5 289V290M479.5 413V416M480.5 289V290M481.5 287V290M481.5 413V422M482.5 286V290M482.5 413V415M483.5 289V290M483.5 413V418M484.5 288V290M485.5 286V290M486.5 288V290M486.5 413V416M487.5 288V290M488.5 286V290M488.5 413V416M489.5 289V290M490.5 288V290M490.5 413V422M492.5 284V290M492.5 413V416M493.5 289V290M493.5 413V422M494.5 284V290M494.5 413V422M495.5 286V290M496.5 289V290M496.5 413V417M497.5 289V290M498.5 413V415M499.5 284V290M500.5 286V290M500.5 413V417M501.5 289V290M501.5 413V416M502.5 288V290M502.5 413V417M503.5 287V290M504.5 286V290M505.5 287V290M506.5 286V290M506.5 413V419M507.5 289V290M508.5 289V290M508.5 413V418M509.5 289V290M509.5 413V416M510.5 284V290M511.5 284V290M511.5 413V418M512.5 288V290M512.5 413V417M513.5 413V415M514.5 288V290M515.5 284V290M515.5 413V422M516.5 413V418M517.5 287V290M518.5 289V290M518.5 413V418M519.5 289V290M519.5 413V415M520.5 287V290M520.5 413V417M521.5 284V290M521.5 413V416M522.5 289V290M522.5 413V416M523.5 413V416M524.5 413V416M525.5 289V290M525.5 413V416M526.5 286V290M526.5 413V422M527.5 413V415M528.5 413V419M529.5 289V290M529.5 413V416M530.5 288V290M530.5 413V418M531.5 413V416M532.5 289V290M532.5 413V415M533.5 287V290M533.5 413V416M534.5 287V290M534.5 413V422M535.5 284V290M535.5 413V422M536.5 413V416M537.5 289V290M538.5 288V290M538.5 413V418M539.5 288V290M539.5 413V415M540.5 287V290M540.5 413V418M541.5 287V290M541.5 413V417M543.5 287V290M543.5 413V417M545.5 287V290M545.5 413V418M546.5 284V290M546.5 413V416M547.5 413V417M548.5 288V290M548.5 413V418M549.5 289V290M549.5 413V417M550.5 289V290M551.5 289V290M551.5 413V422M552.5 287V290M552.5 413V422M553.5 284V290M554.5 289V290M555.5 413V417M556.5 288V290M556.5 413V418M557.5 286V290M557.5 413V417M558.5 413V416M559.5 413V416M560.5 288V290M560.5 413V415M561.5 413V419M562.5 284V290M562.5 413V417M563.5 288V290M563.5 413V419M564.5 413V419M565.5 284V290M565.5 413V418M566.5 289V290M566.5 413V417M567.5 289V290M568.5 288V290M569.5 289V290M569.5 413V415M570.5 413V418M571.5 287V290M572.5 288V290M572.5 413V417M573.5 413V415M574.5 288V290M574.5 413V416M575.5 287V290M576.5 289V290M576.5 413V419M577.5 287V290M577.5 413V417M578.5 287V290M580.5 289V290M580.5 413V418M582.5 289V290M582.5 413V417M583.5 286V290M583.5 413V416M584.5 284V290M584.5 413V417M585.5 413V415M586.5 413V418M587.5 287V290M588.5 289V290M589.5 289V290M589.5 413V422M590.5 288V290M591.5 289V290M591.5 413V416M593.5 284V290M594.5 287V290M594.5 413V419M595.5 289V290M595.5 413V418M596.5 289V290M596.5 413V419M597.5 288V290M598.5 284V290M598.5 413V422M599.5 413V416M600.5 288V290M600.5 413V422M601.5 287V290M601.5 413V417M602.5 286V290M602.5 413V416M603.5 289V290M603.5 413V422M604.5 413V415M605.5 289V290M605.5 413V419M606.5 287V290M606.5 413V417M607.5 288V290M607.5 413V418M608.5 287V290M608.5 413V417M609.5 413V416M610.5 413V416M611.5 286V290M611.5 413V418M612.5 286V290M614.5 287V290M614.5 413V415M615.5 287V290M616.5 284V290M616.5 413V419M617.5 287V290M617.5 413V418M618.5 288V290M619.5 413V417M620.5 286V290M620.5 413V415M621.5 289V290M621.5 413V419M622.5 288V290M622.5 413V416M623.5 413V416M624.5 288V290M624.5 413V416M625.5 288V290M625.5 413V416M626.5 289V290M626.5 413V416M627.5 287V290M627.5 413V415M628.5 287V290M628.5 413V415M629.5 288V290M629.5 413V417M630.5 288V290M631.5 289V290M631.5 413V415M632.5 287V290M632.5 413V415M633.5 289V290M633.5 413V418M634.5 289V290M634.5 413V418M635.5 413V419M636.5 413V422M637.5 413V415M638.5 284V290M638.5 413V418M639.5 413V417M640.5 413V422M641.5 288V290M641.5 413V417M642.5 286V290M642.5 413V422M643.5 287V290M644.5 288V290M644.5 413V417M645.5 288V290M646.5 288V290M646.5 413V416M647.5 287V290M648.5 413V419M649.5 413V415M650.5 287V290M650.5 413V416M651.5 289V290M652.5 289V290M652.5 413V418M653.5 288V290M653.5 413V419M654.5 287V290M655.5 286V290M655.5 413V415M656.5 289V290M656.5 413V416M657.5 413V417M658.5 287V290M658.5 413V415M659.5 288V290M659.5 413V419M660.5 284V290M660.5 413V415M661.5 289V290M661.5 413V415M662.5 413V418M663.5 413V415M664.5 287V290M664.5 413V417M665.5 286V290M665.5 413V419M666.5 286V290M666.5 413V416M667.5 287V290M668.5 286V290M668.5 413V417M669.5 288V290M669.5 413V417M670.5 413V416M671.5 289V290M671.5 413V418M672.5 413V416M673.5 413V415M674.5 287V290M675.5 289V290M675.5 413V419M676.5 286V290M676.5 413V418M677.5 413V418M678.5 413V422M680.5 288V290M680.5 413V417M682.5 284V290M682.5 413V422M683.5 289V290M683.5 413V417M684.5 289V290M684.5 413V418M685.5 288V290M686.5 413V416M687.5 287V290M687.5 413V422M688.5 286V290M688.5 413V415M689.5 288V290M689.5 413V415M690.5 286V290M690.5 413V419M691.5 287V290M691.5 413V417M692.5 287V290M693.5 289V290M693.5 413V419M694.5 287V290M694.5 413V422M695.5 287V290M695.5 413V416M697.5 284V290M698.5 413V415M699.5 289V290M699.5 413V419M700.5 289V290M700.5 413V418M701.5 288V290M701.5 413V415M702.5 287V290M702.5 413V416M703.5 287V290M704.5 287V290M704.5 413V417M705.5 287V290M705.5 413V417M706.5 413V422M707.5 288V290M707.5 413V417M708.5 288V290M708.5 413V416M709.5 284V290M709.5 413V416M710.5 413V417M711.5 413V422M712.5 288V290M712.5 413V418M714.5 284V290M714.5 413V416M715.5 289V290M715.5 413V417M716.5 284V290M717.5 413V416M718.5 287V290M718.5 413V415M719.5 288V290M719.5 413V418M720.5 289V290M720.5 413V417M721.5 289V290M721.5 413V416M722.5 287V290M722.5 413V418M723.5 286V290M723.5 413V419M724.5 287V290M725.5 413V417M726.5 288V290M726.5 413V416M727.5 289V290M727.5 413V418M728.5 288V290M728.5 413V416M729.5 287V290M729.5 413V416M730.5 287V290M730.5 413V416M731.5 284V290M731.5 413V416M732.5 413V417M733.5 288V290M734.5 284V290M734.5 413V416M735.5 287V290M735.5 413V416M736.5 286V290M736.5 413V416M737.5 286V290M739.5 288V290M740.5 289V290M740.5 413V418M741.5 287V290M741.5 413V415M742.5 284V290M742.5 413V417M743.5 413V422M744.5 288V290M744.5 413V416M745.5 289V290M745.5 413V416M746.5 288V290M746.5 413V422M747.5 289V290M747.5 413V418M748.5 413V417M749.5 287V290M750.5 287V290M750.5 413V417M751.5 289V290M751.5 413V422M752.5 287V290M753.5 289V290M753.5 413V415M754.5 288V290M754.5 413V422M755.5 287V290M755.5 413V422M756.5 287V290M756.5 413V417M757.5 287V290M757.5 413V416M758.5 287V290M758.5 413V416M759.5 413V417M760.5 284V290M761.5 289V290M761.5 413V415M762.5 287V290M762.5 413V416M763.5 287V290M763.5 413V416M764.5 288V290M764.5 413V416M766.5 288V290M766.5 413V415M767.5 413V417M768.5 287V290M769.5 289V290M769.5 413V416M770.5 413V418M771.5 288V290M772.5 413V417M773.5 286V290M773.5 413V422M774.5 288V290M775.5 289V290M775.5 413V419M776.5 287V290M777.5 288V290M778.5 413V419M779.5 287V290M779.5 413V418M780.5 413V415M781.5 287V290M781.5 413V418M782.5 413V418M783.5 289V290M783.5 413V422M784.5 413V419M785.5 284V290M785.5 413V422M786.5 288V290M786.5 413V419M787.5 289V290M787.5 413V418M789.5 287V290M790.5 288V290M791.5 289V290M792.5 289V290M792.5 413V416M793.5 288V290M793.5 413V422M794.5 287V290M795.5 413V422M796.5 288V290M796.5 413V415M797.5 287V290M797.5 413V417M798.5 284V290M798.5 413V416M799.5 289V290M799.5 413V415M800.5 288V290M801.5 413V419M802.5 288V290M802.5 413V419M803.5 287V290M803.5 413V417M804.5 413V416M805.5 413V417M806.5 413V419M808.5 413V422M809.5 288V290M810.5 413V417M811.5 289V290M811.5 413V417M812.5 287V290M813.5 286V290M813.5 413V416M814.5 286V290M814.5 413V419M815.5 286V290M815.5 413V419M816.5 288V290M817.5 289V290M818.5 288V290M818.5 413V417M819.5 287V290M819.5 413V416M820.5 287V290M820.5 413V416M821.5 289V290M821.5 413V418M822.5 288V290M822.5 413V419M823.5 289V290M823.5 413V415M824.5 287V290M824.5 413V416M825.5 288V290M825.5 413V415M827.5 413V422M828.5 284V290M830.5 413V418M831.5 286V290M832.5 413V417M833.5 288V290M833.5 413V417M834.5 284V290M834.5 413V417M835.5 288V290M835.5 413V417M838.5 284V290M838.5 413V422M839.5 284V290M839.5 413V419M840.5 287V290M840.5 413V415M841.5 286V290M842.5 287V290M842.5 413V417" stroke="#003434" stroke-width="1" fill="none"/>
<rect x="333" y="288" width="510" height="128" fill="url(#gb)"/>
<path d="M333 288.5h1V415h-1ZM336 288.5h1V415h-1ZM340 288.5h1V415h-1ZM343 288.5h1V415h-1ZM346 288.5h1V415h-1ZM350 288.5h1V415h-1ZM353 288.5h1V415h-1ZM356 288.5h1V415h-1ZM360 288.5h1V415h-1ZM363 288.5h1V415h-1ZM366 288.5h1V415h-1ZM370 288.5h1V415h-1ZM373 288.5h1V415h-1ZM376 288.5h1V415h-1ZM380 288.5h1V415h-1ZM383 288.5h1V415h-1ZM386 288.5h1V415h-1ZM390 288.5h1V415h-1ZM393 288.5h1V415h-1ZM396 288.5h1V415h-1ZM400 288.5h1V415h-1ZM403 288.5h1V415h-1ZM406 288.5h1V415h-1ZM410 288.5h1V415h-1ZM413 288.5h1V415h-1ZM416 288.5h1V415h-1ZM420 288.5h1V415h-1ZM423 288.5h1V415h-1ZM426 288.5h1V415h-1ZM430 288.5h1V415h-1ZM433 288.5h1V415h-1ZM436 288.5h1V415h-1ZM440 288.5h1V415h-1ZM443 288.5h1V415h-1ZM446 288.5h1V415h-1ZM450 288.5h1V415h-1ZM453 288.5h1V415h-1ZM456 288.5h1V415h-1ZM460 288.5h1V415h-1ZM463 288.5h1V415h-1ZM466 288.5h1V415h-1ZM470 288.5h1V415h-1ZM473 288.5h1V415h-1ZM476 288.5h1V415h-1ZM480 288.5h1V415h-1ZM483 288.5h1V415h-1ZM486 288.5h1V415h-1ZM490 288.5h1V415h-1ZM493 288.5h1V415h-1ZM496 288.5h1V415h-1ZM500 288.5h1V415h-1ZM503 288.5h1V415h-1ZM506 288.5h1V415h-1ZM510 288.5h1V415h-1ZM513 288.5h1V415h-1ZM516 288.5h1V415h-1ZM520 288.5h1V415h-1ZM523 288.5h1V415h-1ZM526 288.5h1V415h-1ZM530 288.5h1V415h-1ZM533 288.5h1V415h-1ZM536 288.5h1V415h-1ZM540 288.5h1V415h-1ZM543 288.5h1V415h-1ZM546 288.5h1V415h-1ZM550 288.5h1V415h-1ZM553 288.5h1V415h-1ZM556 288.5h1V415h-1ZM560 288.5h1V415h-1ZM563 288.5h1V415h-1ZM566 288.5h1V415h-1ZM570 288.5h1V415h-1ZM573 288.5h1V415h-1ZM576 288.5h1V415h-1ZM580 288.5h1V415h-1ZM583 288.5h1V415h-1ZM586 288.5h1V415h-1ZM590 288.5h1V415h-1ZM593 288.5h1V415h-1ZM596 288.5h1V415h-1ZM600 288.5h1V415h-1ZM603 288.5h1V415h-1ZM606 288.5h1V415h-1ZM610 288.5h1V415h-1ZM613 288.5h1V415h-1ZM616 288.5h1V415h-1ZM620 288.5h1V415h-1ZM623 288.5h1V415h-1ZM626 288.5h1V415h-1ZM630 288.5h1V415h-1ZM633 288.5h1V415h-1ZM636 288.5h1V415h-1ZM640 288.5h1V415h-1ZM643 288.5h1V415h-1ZM646 288.5h1V415h-1ZM650 288.5h1V415h-1ZM653 288.5h1V415h-1ZM656 288.5h1V415h-1ZM660 288.5h1V415h-1ZM663 288.5h1V415h-1ZM666 288.5h1V415h-1ZM670 288.5h1V415h-1ZM673 288.5h1V415h-1ZM676 288.5h1V415h-1ZM680 288.5h1V415h-1ZM683 288.5h1V415h-1ZM686 288.5h1V415h-1ZM690 288.5h1V415h-1ZM693 288.5h1V415h-1ZM696 288.5h1V415h-1ZM700 288.5h1V415h-1ZM703 288.5h1V415h-1ZM706 288.5h1V415h-1ZM710 288.5h1V415h-1ZM713 288.5h1V415h-1ZM716 288.5h1V415h-1ZM720 288.5h1V415h-1ZM723 288.5h1V415h-1ZM726 288.5h1V415h-1ZM730 288.5h1V415h-1ZM733 288.5h1V415h-1ZM736 288.5h1V415h-1ZM740 288.5h1V415h-1ZM743 288.5h1V415h-1ZM746 288.5h1V415h-1ZM750 288.5h1V415h-1ZM753 288.5h1V415h-1ZM756 288.5h1V415h-1ZM760 288.5h1V415h-1ZM763 288.5h1V415h-1ZM766 288.5h1V415h-1ZM770 288.5h1V415h-1ZM773 288.5h1V415h-1ZM776 288.5h1V415h-1ZM780 288.5h1V415h-1ZM783 288.5h1V415h-1ZM786 288.5h1V415h-1ZM790 288.5h1V415h-1ZM793 288.5h1V415h-1ZM796 288.5h1V415h-1ZM800 288.5h1V415h-1ZM803 288.5h1V415h-1ZM806 288.5h1V415h-1ZM810 288.5h1V415h-1ZM813 288.5h1V415h-1ZM816 288.5h1V415h-1ZM820 288.5h1V415h-1ZM823 288.5h1V415h-1ZM826 288.5h1V415h-1ZM830 288.5h1V415h-1ZM833 288.5h1V415h-1ZM836 288.5h1V415h-1ZM840 288.5h1V415h-1Z" fill="url(#gs)" shape-rendering="crispEdges"/>
<path d="M334 288.5h1V317h-1ZM332 289.5h1V305h-1ZM332 311h1V393h-1ZM334 393h1V415h-1ZM337 288.5h1V314h-1ZM335 289.5h1V302h-1ZM335 308h1V360h-1ZM337 393h1V415h-1ZM341 288.5h1V317h-1ZM339 289.5h1V302h-1ZM339 311h1V393h-1ZM341 393h1V415h-1ZM344 288.5h1V315h-1ZM342 289.5h1V300h-1ZM342 309h1V375h-1ZM344 393h1V415h-1ZM347 288.5h1V313h-1ZM345 289.5h1V299h-1ZM345 311h1V360h-1ZM347 393h1V415h-1ZM351 288.5h1V315h-1ZM349 289.5h1V301h-1ZM351 313h1V360h-1ZM351 393h1V415h-1ZM354 288.5h1V309h-1ZM352 289.5h1V305h-1ZM352 311h1V393h-1ZM354 393h1V415h-1ZM357 288.5h1V305h-1ZM355 289.5h1V295h-1ZM355 307h1V360h-1ZM357 393h1V415h-1ZM361 288.5h1V319h-1ZM359 289.5h1V301h-1ZM359 313h1V360h-1ZM361 393h1V415h-1ZM364 288.5h1V303h-1ZM362 289.5h1V293h-1ZM364 305h1V393h-1ZM364 393h1V415h-1ZM367 288.5h1V305h-1ZM365 289.5h1V301h-1ZM365 307h1V375h-1ZM367 393h1V415h-1ZM371 288.5h1V313h-1ZM369 289.5h1V302h-1ZM371 311h1V393h-1ZM371 393h1V415h-1ZM374 288.5h1V317h-1ZM372 289.5h1V302h-1ZM372 311h1V393h-1ZM374 393h1V415h-1ZM377 288.5h1V303h-1ZM375 289.5h1V299h-1ZM375 305h1V393h-1ZM377 393h1V415h-1ZM381 288.5h1V305h-1ZM379 289.5h1V301h-1ZM381 307h1V393h-1ZM381 393h1V415h-1ZM384 288.5h1V309h-1ZM382 289.5h1V305h-1ZM382 311h1V393h-1ZM384 393h1V415h-1ZM387 288.5h1V309h-1ZM385 289.5h1V298h-1ZM385 307h1V360h-1ZM387 393h1V415h-1ZM391 288.5h1V309h-1ZM389 289.5h1V302h-1ZM391 311h1V360h-1ZM391 393h1V415h-1ZM394 288.5h1V306h-1ZM392 289.5h1V299h-1ZM392 308h1V375h-1ZM394 393h1V415h-1ZM397 288.5h1V309h-1ZM395 289.5h1V302h-1ZM395 311h1V375h-1ZM397 393h1V415h-1ZM401 288.5h1V314h-1ZM399 289.5h1V302h-1ZM399 308h1V393h-1ZM401 393h1V415h-1ZM404 288.5h1V317h-1ZM402 289.5h1V302h-1ZM402 311h1V393h-1ZM404 393h1V415h-1ZM407 288.5h1V310h-1ZM405 289.5h1V296h-1ZM405 308h1V393h-1ZM407 393h1V415h-1ZM411 288.5h1V317h-1ZM409 289.5h1V302h-1ZM409 311h1V360h-1ZM411 393h1V415h-1ZM414 288.5h1V319h-1ZM412 289.5h1V307h-1ZM412 313h1V393h-1ZM414 393h1V415h-1ZM417 288.5h1V306h-1ZM415 289.5h1V299h-1ZM417 308h1V393h-1ZM417 393h1V415h-1ZM421 288.5h1V311h-1ZM419 289.5h1V293h-1ZM421 305h1V360h-1ZM421 393h1V415h-1ZM424 288.5h1V319h-1ZM422 289.5h1V307h-1ZM424 313h1V393h-1ZM424 393h1V415h-1ZM427 288.5h1V305h-1ZM425 289.5h1V298h-1ZM425 307h1V360h-1ZM427 393h1V415h-1ZM431 288.5h1V310h-1ZM429 289.5h1V299h-1ZM429 308h1V393h-1ZM431 393h1V415h-1ZM434 288.5h1V305h-1ZM432 289.5h1V301h-1ZM434 307h1V393h-1ZM434 393h1V415h-1ZM437 288.5h1V317h-1ZM435 289.5h1V302h-1ZM437 311h1V360h-1ZM437 393h1V415h-1ZM441 288.5h1V311h-1ZM439 289.5h1V299h-1ZM441 305h1V375h-1ZM441 393h1V415h-1ZM444 288.5h1V311h-1ZM442 289.5h1V301h-1ZM444 313h1V360h-1ZM444 393h1V415h-1ZM447 288.5h1V314h-1ZM445 289.5h1V302h-1ZM445 308h1V393h-1ZM447 393h1V415h-1ZM451 288.5h1V313h-1ZM449 289.5h1V302h-1ZM451 311h1V393h-1ZM451 393h1V415h-1ZM454 288.5h1V311h-1ZM452 289.5h1V296h-1ZM454 305h1V393h-1ZM454 393h1V415h-1ZM457 288.5h1V305h-1ZM455 289.5h1V301h-1ZM455 307h1V393h-1ZM457 393h1V415h-1ZM461 288.5h1V311h-1ZM459 289.5h1V296h-1ZM459 305h1V375h-1ZM461 393h1V415h-1ZM464 288.5h1V311h-1ZM462 289.5h1V297h-1ZM462 309h1V360h-1ZM464 393h1V415h-1ZM467 288.5h1V315h-1ZM465 289.5h1V297h-1ZM465 309h1V360h-1ZM467 393h1V415h-1ZM471 288.5h1V317h-1ZM469 289.5h1V305h-1ZM469 311h1V393h-1ZM471 393h1V415h-1ZM474 288.5h1V313h-1ZM472 289.5h1V301h-1ZM474 307h1V375h-1ZM474 393h1V415h-1ZM477 288.5h1V309h-1ZM475 289.5h1V295h-1ZM477 307h1V393h-1ZM477 393h1V415h-1ZM481 288.5h1V319h-1ZM479 289.5h1V304h-1ZM479 313h1V393h-1ZM481 393h1V415h-1ZM484 288.5h1V315h-1ZM482 289.5h1V307h-1ZM482 313h1V375h-1ZM484 393h1V415h-1ZM487 288.5h1V311h-1ZM485 289.5h1V301h-1ZM487 313h1V393h-1ZM487 393h1V415h-1ZM491 288.5h1V313h-1ZM489 289.5h1V299h-1ZM489 311h1V360h-1ZM491 393h1V415h-1ZM494 288.5h1V313h-1ZM492 289.5h1V301h-1ZM494 307h1V375h-1ZM494 393h1V415h-1ZM497 288.5h1V311h-1ZM495 289.5h1V301h-1ZM495 313h1V393h-1ZM497 393h1V415h-1ZM501 288.5h1V317h-1ZM499 289.5h1V302h-1ZM499 311h1V393h-1ZM501 393h1V415h-1ZM504 288.5h1V313h-1ZM502 289.5h1V302h-1ZM502 311h1V360h-1ZM504 393h1V415h-1ZM507 288.5h1V317h-1ZM505 289.5h1V299h-1ZM507 311h1V393h-1ZM507 393h1V415h-1ZM511 288.5h1V311h-1ZM509 289.5h1V296h-1ZM509 305h1V393h-1ZM511 393h1V415h-1ZM514 288.5h1V311h-1ZM512 289.5h1V303h-1ZM514 309h1V393h-1ZM514 393h1V415h-1ZM517 288.5h1V307h-1ZM515 289.5h1V299h-1ZM517 305h1V393h-1ZM517 393h1V415h-1ZM521 288.5h1V309h-1ZM519 289.5h1V298h-1ZM519 307h1V393h-1ZM521 393h1V415h-1ZM524 288.5h1V313h-1ZM522 289.5h1V299h-1ZM522 311h1V360h-1ZM524 393h1V415h-1ZM527 288.5h1V317h-1ZM525 289.5h1V299h-1ZM525 311h1V393h-1ZM527 393h1V415h-1ZM531 288.5h1V305h-1ZM529 289.5h1V295h-1ZM531 307h1V360h-1ZM531 393h1V415h-1ZM534 288.5h1V306h-1ZM532 289.5h1V296h-1ZM534 308h1V393h-1ZM534 393h1V415h-1ZM537 288.5h1V307h-1ZM535 289.5h1V299h-1ZM535 305h1V393h-1ZM537 393h1V415h-1ZM541 288.5h1V311h-1ZM539 289.5h1V297h-1ZM541 309h1V360h-1ZM541 393h1V415h-1ZM544 288.5h1V309h-1ZM542 289.5h1V301h-1ZM544 307h1V375h-1ZM544 393h1V415h-1ZM547 288.5h1V310h-1ZM545 289.5h1V296h-1ZM545 308h1V393h-1ZM547 393h1V415h-1ZM551 288.5h1V311h-1ZM549 289.5h1V296h-1ZM549 305h1V393h-1ZM551 393h1V415h-1ZM554 288.5h1V311h-1ZM552 289.5h1V303h-1ZM554 309h1V375h-1ZM554 393h1V415h-1ZM557 288.5h1V311h-1ZM555 289.5h1V301h-1ZM555 313h1V375h-1ZM557 393h1V415h-1ZM561 288.5h1V314h-1ZM559 289.5h1V296h-1ZM561 308h1V360h-1ZM561 393h1V415h-1ZM564 288.5h1V315h-1ZM562 289.5h1V304h-1ZM564 313h1V393h-1ZM564 393h1V415h-1ZM567 288.5h1V313h-1ZM565 289.5h1V305h-1ZM567 311h1V375h-1ZM567 393h1V415h-1ZM571 288.5h1V313h-1ZM569 289.5h1V301h-1ZM571 307h1V375h-1ZM571 393h1V415h-1ZM574 288.5h1V305h-1ZM572 289.5h1V301h-1ZM574 307h1V393h-1ZM574 393h1V415h-1ZM577 288.5h1V311h-1ZM575 289.5h1V300h-1ZM575 309h1V360h-1ZM577 393h1V415h-1ZM581 288.5h1V305h-1ZM579 289.5h1V301h-1ZM581 307h1V375h-1ZM581 393h1V415h-1ZM584 288.5h1V315h-1ZM582 289.5h1V300h-1ZM584 309h1V360h-1ZM584 393h1V415h-1ZM587 288.5h1V313h-1ZM585 289.5h1V302h-1ZM585 311h1V393h-1ZM587 393h1V415h-1ZM591 288.5h1V311h-1ZM589 289.5h1V297h-1ZM591 309h1V393h-1ZM591 393h1V415h-1ZM594 288.5h1V311h-1ZM592 289.5h1V293h-1ZM594 305h1V360h-1ZM594 393h1V415h-1ZM597 288.5h1V313h-1ZM595 289.5h1V299h-1ZM595 311h1V393h-1ZM597 393h1V415h-1ZM601 288.5h1V317h-1ZM599 289.5h1V302h-1ZM601 311h1V393h-1ZM601 393h1V415h-1ZM604 288.5h1V303h-1ZM602 289.5h1V296h-1ZM602 305h1V393h-1ZM604 393h1V415h-1ZM607 288.5h1V305h-1ZM605 289.5h1V298h-1ZM605 307h1V360h-1ZM607 393h1V415h-1ZM611 288.5h1V305h-1ZM609 289.5h1V298h-1ZM609 307h1V375h-1ZM611 393h1V415h-1ZM614 288.5h1V309h-1ZM612 289.5h1V305h-1ZM612 311h1V393h-1ZM614 393h1V415h-1ZM617 288.5h1V309h-1ZM615 289.5h1V298h-1ZM617 307h1V375h-1ZM617 393h1V415h-1ZM621 288.5h1V311h-1ZM619 289.5h1V297h-1ZM619 309h1V393h-1ZM621 393h1V415h-1ZM624 288.5h1V311h-1ZM622 289.5h1V300h-1ZM622 309h1V375h-1ZM624 393h1V415h-1ZM627 288.5h1V307h-1ZM625 289.5h1V293h-1ZM625 305h1V360h-1ZM627 393h1V415h-1ZM631 288.5h1V309h-1ZM629 289.5h1V295h-1ZM631 307h1V360h-1ZM631 393h1V415h-1ZM634 288.5h1V306h-1ZM632 289.5h1V296h-1ZM632 308h1V375h-1ZM634 393h1V415h-1ZM637 288.5h1V303h-1ZM635 289.5h1V299h-1ZM637 305h1V375h-1ZM637 393h1V415h-1ZM641 288.5h1V315h-1ZM639 289.5h1V300h-1ZM639 309h1V360h-1ZM641 393h1V415h-1ZM644 288.5h1V306h-1ZM642 289.5h1V296h-1ZM642 308h1V393h-1ZM644 393h1V415h-1ZM647 288.5h1V311h-1ZM645 289.5h1V297h-1ZM647 309h1V375h-1ZM647 393h1V415h-1ZM651 288.5h1V310h-1ZM649 289.5h1V299h-1ZM649 308h1V393h-1ZM651 393h1V415h-1ZM654 288.5h1V309h-1ZM652 289.5h1V299h-1ZM654 311h1V393h-1ZM654 393h1V415h-1ZM657 288.5h1V311h-1ZM655 289.5h1V300h-1ZM655 309h1V375h-1ZM657 393h1V415h-1ZM661 288.5h1V315h-1ZM659 289.5h1V297h-1ZM661 309h1V393h-1ZM661 393h1V415h-1ZM664 288.5h1V315h-1ZM662 289.5h1V304h-1ZM664 313h1V360h-1ZM664 393h1V415h-1ZM667 288.5h1V310h-1ZM665 289.5h1V296h-1ZM665 308h1V393h-1ZM667 393h1V415h-1ZM671 288.5h1V311h-1ZM669 289.5h1V303h-1ZM671 309h1V375h-1ZM671 393h1V415h-1ZM674 288.5h1V307h-1ZM672 289.5h1V296h-1ZM674 305h1V360h-1ZM674 393h1V415h-1ZM677 288.5h1V314h-1ZM675 289.5h1V296h-1ZM677 308h1V393h-1ZM677 393h1V415h-1ZM681 288.5h1V303h-1ZM679 289.5h1V299h-1ZM679 305h1V360h-1ZM681 393h1V415h-1ZM684 288.5h1V317h-1ZM682 289.5h1V302h-1ZM684 311h1V393h-1ZM684 393h1V415h-1ZM687 288.5h1V306h-1ZM685 289.5h1V299h-1ZM687 308h1V360h-1ZM687 393h1V415h-1ZM691 288.5h1V303h-1ZM689 289.5h1V299h-1ZM691 305h1V360h-1ZM691 393h1V415h-1ZM694 288.5h1V310h-1ZM692 289.5h1V296h-1ZM692 308h1V393h-1ZM694 393h1V415h-1ZM697 288.5h1V306h-1ZM695 289.5h1V296h-1ZM695 308h1V360h-1ZM697 393h1V415h-1ZM701 288.5h1V317h-1ZM699 289.5h1V302h-1ZM701 311h1V360h-1ZM701 393h1V415h-1ZM704 288.5h1V315h-1ZM702 289.5h1V303h-1ZM704 309h1V393h-1ZM704 393h1V415h-1ZM707 288.5h1V306h-1ZM705 289.5h1V299h-1ZM705 308h1V375h-1ZM707 393h1V415h-1ZM711 288.5h1V310h-1ZM709 289.5h1V296h-1ZM711 308h1V360h-1ZM711 393h1V415h-1ZM714 288.5h1V311h-1ZM712 289.5h1V293h-1ZM712 305h1V360h-1ZM714 393h1V415h-1ZM717 288.5h1V313h-1ZM715 289.5h1V298h-1ZM717 307h1V393h-1ZM717 393h1V415h-1ZM721 288.5h1V307h-1ZM719 289.5h1V293h-1ZM721 305h1V393h-1ZM721 393h1V415h-1ZM724 288.5h1V311h-1ZM722 289.5h1V303h-1ZM724 309h1V393h-1ZM724 393h1V415h-1ZM727 288.5h1V310h-1ZM725 289.5h1V296h-1ZM725 308h1V393h-1ZM727 393h1V415h-1ZM731 288.5h1V317h-1ZM729 289.5h1V299h-1ZM731 311h1V375h-1ZM731 393h1V415h-1ZM734 288.5h1V311h-1ZM732 289.5h1V300h-1ZM734 309h1V375h-1ZM734 393h1V415h-1ZM737 288.5h1V313h-1ZM735 289.5h1V305h-1ZM737 311h1V360h-1ZM737 393h1V415h-1ZM741 288.5h1V311h-1ZM739 289.5h1V301h-1ZM739 313h1V393h-1ZM741 393h1V415h-1ZM744 288.5h1V309h-1ZM742 289.5h1V305h-1ZM742 311h1V360h-1ZM744 393h1V415h-1ZM747 288.5h1V306h-1ZM745 289.5h1V296h-1ZM747 308h1V393h-1ZM747 393h1V415h-1ZM751 288.5h1V314h-1ZM749 289.5h1V302h-1ZM749 308h1V393h-1ZM751 393h1V415h-1ZM754 288.5h1V310h-1ZM752 289.5h1V296h-1ZM752 308h1V393h-1ZM754 393h1V415h-1ZM757 288.5h1V309h-1ZM755 289.5h1V302h-1ZM757 311h1V375h-1ZM757 393h1V415h-1ZM761 288.5h1V310h-1ZM759 289.5h1V302h-1ZM761 308h1V360h-1ZM761 393h1V415h-1ZM764 288.5h1V311h-1ZM762 289.5h1V300h-1ZM764 309h1V393h-1ZM764 393h1V415h-1ZM767 288.5h1V310h-1ZM765 289.5h1V302h-1ZM767 308h1V360h-1ZM767 393h1V415h-1ZM771 288.5h1V309h-1ZM769 289.5h1V298h-1ZM769 307h1V393h-1ZM771 393h1V415h-1ZM774 288.5h1V315h-1ZM772 289.5h1V307h-1ZM774 313h1V360h-1ZM774 393h1V415h-1ZM777 288.5h1V315h-1ZM775 289.5h1V307h-1ZM775 313h1V393h-1ZM777 393h1V415h-1ZM781 288.5h1V306h-1ZM779 289.5h1V296h-1ZM781 308h1V375h-1ZM781 393h1V415h-1ZM784 288.5h1V319h-1ZM782 289.5h1V307h-1ZM784 313h1V393h-1ZM784 393h1V415h-1ZM787 288.5h1V311h-1ZM785 289.5h1V299h-1ZM787 305h1V393h-1ZM787 393h1V415h-1ZM791 288.5h1V306h-1ZM789 289.5h1V302h-1ZM789 308h1V393h-1ZM791 393h1V415h-1ZM794 288.5h1V306h-1ZM792 289.5h1V302h-1ZM794 308h1V360h-1ZM794 393h1V415h-1ZM797 288.5h1V307h-1ZM795 289.5h1V303h-1ZM797 309h1V360h-1ZM797 393h1V415h-1ZM801 288.5h1V310h-1ZM799 289.5h1V299h-1ZM801 308h1V375h-1ZM801 393h1V415h-1ZM804 288.5h1V315h-1ZM802 289.5h1V301h-1ZM802 313h1V360h-1ZM804 393h1V415h-1ZM807 288.5h1V307h-1ZM805 289.5h1V296h-1ZM805 305h1V393h-1ZM807 393h1V415h-1ZM811 288.5h1V313h-1ZM809 289.5h1V295h-1ZM811 307h1V393h-1ZM811 393h1V415h-1ZM814 288.5h1V306h-1ZM812 289.5h1V296h-1ZM812 308h1V375h-1ZM814 393h1V415h-1ZM817 288.5h1V313h-1ZM815 289.5h1V298h-1ZM815 307h1V360h-1ZM817 393h1V415h-1ZM821 288.5h1V317h-1ZM819 289.5h1V302h-1ZM819 311h1V375h-1ZM821 393h1V415h-1ZM824 288.5h1V311h-1ZM822 289.5h1V301h-1ZM824 313h1V360h-1ZM824 393h1V415h-1ZM827 288.5h1V315h-1ZM825 289.5h1V304h-1ZM825 313h1V360h-1ZM827 393h1V415h-1ZM831 288.5h1V315h-1ZM829 289.5h1V303h-1ZM829 309h1V393h-1ZM831 393h1V415h-1ZM834 288.5h1V306h-1ZM832 289.5h1V299h-1ZM832 308h1V360h-1ZM834 393h1V415h-1ZM837 288.5h1V309h-1ZM835 289.5h1V305h-1ZM837 311h1V393h-1ZM837 393h1V415h-1ZM841 288.5h1V311h-1ZM839 289.5h1V293h-1ZM839 305h1V360h-1ZM841 393h1V415h-1Z" fill="url(#gs)" fill-opacity=".7" shape-rendering="crispEdges"/>
<path d="M334.5 346v1M334.5 368v1M334.5 338v2M335.5 385v3M335.5 372v1M335.5 351v1M335.5 361v1M336.5 355v3M336.5 326v2M336.5 389v3M336.5 365v3M337.5 363v3M337.5 385v2M337.5 348v1M338.5 350v1M338.5 352v2M338.5 364v2M339.5 388v2M339.5 379v2M339.5 384v1M339.5 360v3M340.5 373v2M340.5 366v1M340.5 329v3M341.5 376v2M341.5 384v3M341.5 382v1M341.5 369v2M342.5 340v3M342.5 365v1M342.5 351v3M343.5 352v1M343.5 371v2M344.5 370v3M344.5 354v3M344.5 375v3M345.5 339v2M345.5 361v1M345.5 361v3M346.5 344v1M346.5 329v1M346.5 367v1M346.5 375v3M347.5 387v1M347.5 358v2M347.5 365v2M347.5 377v3M348.5 376v2M348.5 376v3M349.5 359v1M349.5 375v1M349.5 376v1M350.5 372v2M350.5 350v1M350.5 321v1M351.5 352v1M351.5 376v1M351.5 359v1M352.5 380v2M352.5 358v2M352.5 375v2M353.5 339v1M353.5 371v1M353.5 377v1M354.5 318v1M354.5 384v3M354.5 345v1M355.5 334v1M355.5 374v2M355.5 360v1M355.5 391v2M356.5 343v1M356.5 342v3M356.5 339v1M356.5 322v1M357.5 369v3M357.5 390v3M357.5 349v3M357.5 363v1M358.5 334v2M358.5 356v2M359.5 356v1M359.5 338v3M359.5 378v2M359.5 379v1M360.5 327v1M360.5 358v2M360.5 346v1M361.5 366v3M361.5 359v1M361.5 371v1M362.5 372v1M362.5 376v3M362.5 384v1M363.5 369v2M363.5 373v2M363.5 323v1M364.5 380v3M364.5 340v3M364.5 360v1M365.5 381v1M365.5 355v1M366.5 380v3M366.5 377v1M366.5 343v3M367.5 376v2M367.5 333v2M367.5 371v1M367.5 350v1M368.5 381v1M368.5 380v2M368.5 349v1M369.5 345v2M369.5 378v2M370.5 328v3M370.5 381v3M370.5 378v3M371.5 373v1M371.5 374v3M371.5 349v1M372.5 384v2M372.5 369v1M372.5 387v1M372.5 352v1M373.5 389v3M373.5 359v1M374.5 369v2M374.5 382v3M374.5 336v3M374.5 379v2M375.5 377v3M375.5 335v3M375.5 382v2M375.5 356v1M376.5 370v3M376.5 377v1M376.5 364v3M376.5 375v1M377.5 367v1M377.5 353v1M377.5 382v3M378.5 359v1M378.5 369v3M379.5 384v1M379.5 374v2M379.5 366v2M380.5 368v2M380.5 350v2M380.5 350v3M380.5 348v2M381.5 343v1M381.5 356v1M382.5 369v2M382.5 375v1M383.5 335v2M383.5 379v1M384.5 371v3M384.5 379v2M384.5 380v3M385.5 383v1M385.5 328v3M386.5 355v1M386.5 350v1M386.5 390v3M387.5 384v3M387.5 354v2M387.5 341v2M388.5 349v1M388.5 367v2M388.5 353v1M389.5 387v1M389.5 350v3M389.5 365v2M389.5 379v2M390.5 374v2M390.5 342v2M390.5 374v3M391.5 385v2M391.5 366v1M391.5 370v1M392.5 367v1M392.5 343v2M392.5 370v3M393.5 363v3M393.5 388v1M393.5 385v3M394.5 332v1M394.5 359v1M394.5 341v1M395.5 361v1M395.5 390v2M395.5 354v3M396.5 377v1M396.5 369v2M397.5 365v3M397.5 386v3M397.5 354v2M398.5 373v1M398.5 357v3M398.5 355v1M399.5 330v1M399.5 341v2M400.5 351v2M400.5 365v3M400.5 365v3M401.5 366v2M401.5 333v1M402.5 332v2M402.5 323v3M402.5 332v1M403.5 376v3M403.5 351v1M403.5 360v2M404.5 382v2M404.5 338v3M405.5 383v2M405.5 324v3M405.5 336v2M406.5 327v3M406.5 352v2M406.5 373v1M406.5 388v2M407.5 346v2M407.5 315v2M408.5 382v1M408.5 348v2M408.5 382v3M409.5 367v1M409.5 328v1M409.5 379v1M409.5 378v1M410.5 351v3M410.5 368v2M410.5 375v3M411.5 345v1M411.5 370v3M411.5 371v1M411.5 368v2M412.5 392v1M412.5 392v2M412.5 355v1M412.5 367v2M413.5 342v3M413.5 384v1M413.5 360v2M414.5 367v1M414.5 334v1M414.5 377v1M414.5 324v3M415.5 373v3M415.5 321v1M416.5 338v2M416.5 374v3M417.5 354v3M417.5 354v2M417.5 350v3M418.5 358v2M418.5 357v1M419.5 344v1M419.5 332v2M420.5 382v2M420.5 322v1M420.5 365v2M420.5 342v1M421.5 342v1M421.5 368v3M422.5 355v1M422.5 381v2M422.5 348v1M423.5 370v1M423.5 375v1M424.5 357v1M424.5 353v2M424.5 386v3M425.5 364v3M425.5 337v2M425.5 378v2M425.5 364v1M426.5 348v1M426.5 330v2M426.5 392v2M427.5 376v3M427.5 363v1M427.5 356v2M428.5 355v2M428.5 347v1M428.5 360v1M429.5 377v1M429.5 345v1M429.5 378v1M430.5 375v1M430.5 364v3M430.5 376v3M430.5 350v1M431.5 346v1M431.5 376v2M431.5 360v1M432.5 373v1M432.5 387v1M432.5 344v3M432.5 385v1M433.5 376v2M433.5 354v3M434.5 350v2M434.5 351v1M434.5 378v1M434.5 377v2M435.5 373v3M435.5 360v2M435.5 338v1M435.5 387v3M436.5 377v1M436.5 385v2M436.5 357v2M436.5 382v2M437.5 321v1M437.5 327v3M437.5 385v1M437.5 350v2M438.5 369v1M438.5 337v3M438.5 355v1M438.5 370v2M439.5 371v1M439.5 334v3M440.5 371v1M440.5 377v3M440.5 369v3M441.5 368v3M441.5 345v1M441.5 352v1M441.5 369v3M442.5 390v3M442.5 369v3M442.5 375v3M443.5 346v1M443.5 362v1M443.5 371v1M443.5 390v1M444.5 366v2M444.5 349v1M444.5 377v3M445.5 357v1M445.5 361v2M445.5 378v1M446.5 383v2M446.5 359v2M446.5 372v3M446.5 363v3M447.5 367v1M447.5 318v3M447.5 351v1M447.5 331v3M448.5 372v3M448.5 377v1M448.5 346v3M448.5 356v3M449.5 347v1M449.5 378v1M449.5 350v3M450.5 317v2M450.5 390v3M450.5 383v2M450.5 354v2M451.5 335v1M451.5 358v2M452.5 364v1M452.5 381v1M453.5 376v1M453.5 338v1M453.5 357v3M453.5 365v1M454.5 352v2M454.5 384v2M454.5 381v3M455.5 379v1M455.5 386v3M456.5 370v1M456.5 371v1M456.5 316v1M457.5 380v2M457.5 354v1M458.5 332v3M458.5 390v1M458.5 390v3M459.5 346v1M459.5 368v3M459.5 320v2M459.5 347v2M460.5 351v3M460.5 369v3M460.5 357v1M461.5 381v3M461.5 338v1M462.5 350v1M462.5 332v1M462.5 381v2M463.5 350v2M463.5 354v3M463.5 335v1M464.5 357v2M464.5 343v3M464.5 315v1M465.5 380v1M465.5 361v3M466.5 364v3M466.5 388v1M466.5 365v3M467.5 337v3M467.5 349v1M467.5 364v2M468.5 361v1M468.5 380v1M468.5 383v1M469.5 384v1M469.5 324v1M469.5 354v3M469.5 369v3M470.5 332v2M470.5 378v1M470.5 341v1M471.5 328v1M471.5 334v1M472.5 355v1M472.5 370v2M472.5 381v1M473.5 334v3M473.5 369v3M473.5 373v1M473.5 372v1M474.5 376v1M474.5 375v1M474.5 362v1M474.5 346v2M475.5 332v1M475.5 381v1M476.5 340v2M476.5 351v3M476.5 368v1M477.5 373v3M477.5 347v3M477.5 380v1M478.5 360v2M478.5 356v2M478.5 365v1M479.5 369v2M479.5 363v1M480.5 371v1M480.5 381v1M481.5 368v1M481.5 387v2M481.5 356v1M481.5 386v1M482.5 378v1M482.5 389v1M482.5 351v3M483.5 383v1M483.5 344v3M483.5 369v1M484.5 376v3M484.5 379v2M484.5 379v1M485.5 371v1M485.5 377v3M485.5 363v3M485.5 357v1M486.5 380v3M486.5 387v1M487.5 348v1M487.5 392v1M487.5 356v3M487.5 350v3M488.5 354v1M488.5 360v1M489.5 371v1M489.5 355v2M490.5 354v1M490.5 332v3M491.5 368v1M491.5 369v3M491.5 332v1M491.5 384v2M492.5 342v2M492.5 371v1M492.5 339v1M492.5 378v3M493.5 368v2M493.5 334v2M493.5 373v1M494.5 374v1M494.5 382v2M495.5 376v2M495.5 333v1M495.5 361v2M496.5 377v1M496.5 386v3M496.5 378v1M496.5 344v2M497.5 311v1M497.5 366v2M497.5 376v1M498.5 328v1M498.5 374v2M498.5 370v1M499.5 325v1M499.5 333v3M500.5 345v3M500.5 346v2M501.5 337v1M501.5 371v3M501.5 376v2M502.5 359v1M502.5 368v3M503.5 359v1M503.5 367v1M503.5 357v1M504.5 368v2M504.5 359v1M504.5 381v1M505.5 369v1M505.5 375v1M506.5 343v2M506.5 363v2M506.5 388v1M506.5 340v3M507.5 351v2M507.5 382v1M507.5 380v1M508.5 388v2M508.5 325v2M508.5 328v1M509.5 377v1M509.5 374v2M509.5 337v2M509.5 347v3M510.5 346v2M510.5 385v2M511.5 347v2M511.5 383v1M512.5 357v1M512.5 322v1M512.5 355v1M512.5 382v3M513.5 381v2M513.5 326v1M514.5 376v2M514.5 341v2M514.5 350v1M515.5 369v1M515.5 380v1M515.5 348v1M515.5 348v1M516.5 367v1M516.5 375v2M516.5 352v1M517.5 383v3M517.5 345v1M517.5 371v1M517.5 327v1M518.5 382v1M518.5 322v1M518.5 359v3M519.5 384v1M519.5 337v1M520.5 328v1M520.5 343v2M520.5 363v1M520.5 354v1M521.5 376v1M521.5 348v1M521.5 350v3M522.5 379v1M522.5 374v1M523.5 347v3M523.5 376v2M524.5 372v2M524.5 345v3M524.5 352v1M525.5 370v3M525.5 378v1M525.5 338v1M526.5 373v1M526.5 372v2M527.5 353v1M527.5 367v3M527.5 367v3M528.5 349v2M528.5 343v1M528.5 344v1M529.5 345v1M529.5 371v3M529.5 322v2M530.5 328v1M530.5 381v2M531.5 331v1M531.5 365v2M531.5 325v2M532.5 390v1M532.5 383v1M533.5 346v2M533.5 349v3M533.5 353v3M534.5 372v3M534.5 342v1M534.5 366v2M535.5 384v2M535.5 351v3M536.5 365v2M536.5 370v1M536.5 382v2M536.5 361v3M537.5 385v1M537.5 374v3M537.5 367v3M538.5 386v1M538.5 346v1M538.5 359v3M538.5 339v1M539.5 379v3M539.5 379v2M539.5 363v2M539.5 385v1M540.5 346v2M540.5 336v1M540.5 377v1M541.5 347v1M541.5 379v1M541.5 361v1M542.5 349v1M542.5 358v2M543.5 384v2M543.5 353v1M543.5 358v1M544.5 319v1M544.5 363v1M545.5 383v1M545.5 344v1M545.5 374v2M546.5 353v2M546.5 350v2M546.5 374v1M547.5 337v3M547.5 384v2M547.5 382v1M547.5 386v1M548.5 343v3M548.5 360v1M549.5 382v3M549.5 361v1M549.5 337v1M549.5 349v1M550.5 352v3M550.5 376v3M550.5 358v1M550.5 313v3M551.5 374v1M551.5 382v1M551.5 374v1M551.5 375v1M552.5 381v3M552.5 382v1M552.5 360v3M553.5 338v1M553.5 341v2M553.5 359v3M554.5 386v2M554.5 353v1M554.5 327v3M554.5 373v3M555.5 363v1M555.5 390v2M555.5 380v2M555.5 350v3M556.5 362v1M556.5 369v1M556.5 368v1M557.5 363v2M557.5 380v2M558.5 360v1M558.5 377v1M558.5 339v1M559.5 367v1M559.5 361v1M560.5 384v2M560.5 389v1M560.5 386v3M561.5 336v2M561.5 344v3M562.5 384v1M562.5 348v1M562.5 344v1M563.5 386v1M563.5 371v1M563.5 346v3M564.5 347v1M564.5 347v2M565.5 359v1M565.5 355v2M565.5 333v1M565.5 345v2M566.5 352v1M566.5 382v2M567.5 366v2M567.5 365v2M567.5 340v1M567.5 365v3M568.5 357v1M568.5 344v3M568.5 373v3M569.5 361v1M569.5 349v1M569.5 373v2M570.5 349v1M570.5 342v2M570.5 362v1M571.5 348v1M571.5 341v1M571.5 324v3M571.5 350v1M572.5 381v2M572.5 346v1M572.5 357v1M572.5 384v1M573.5 372v3M573.5 350v1M573.5 369v1M574.5 379v3M574.5 379v3M574.5 383v2M575.5 376v1M575.5 370v1M575.5 375v1M576.5 367v2M576.5 378v3M576.5 375v3M577.5 360v3M577.5 390v2M577.5 374v1M577.5 357v3M578.5 344v2M578.5 374v1M578.5 349v1M579.5 377v2M579.5 345v3M579.5 368v1M580.5 361v2M580.5 352v3M580.5 358v1M580.5 351v1M581.5 384v1M581.5 376v2M581.5 334v1M581.5 319v3M582.5 391v1M582.5 385v1M582.5 368v1M583.5 372v3M583.5 353v2M583.5 334v2M584.5 348v2M584.5 386v1M585.5 374v1M585.5 342v3M586.5 351v3M586.5 383v3M586.5 376v1M587.5 347v1M587.5 345v1M587.5 366v1M588.5 351v2M588.5 376v1M588.5 389v2M589.5 379v1M589.5 365v2M589.5 329v2M590.5 347v3M590.5 382v3M590.5 369v1M591.5 351v1M591.5 361v1M591.5 385v1M592.5 342v1M592.5 385v1M592.5 374v1M593.5 374v1M593.5 342v1M593.5 380v1M594.5 330v1M594.5 369v3M594.5 341v3M594.5 365v2M595.5 341v3M595.5 366v1M596.5 355v1M596.5 361v1M596.5 341v2M597.5 387v1M597.5 376v2M597.5 388v1M597.5 375v1M598.5 374v1M598.5 372v1M598.5 365v1M599.5 353v1M599.5 390v1M599.5 368v1M600.5 352v1M600.5 368v3M600.5 354v1M601.5 343v1M601.5 364v1M601.5 336v1M602.5 336v2M602.5 353v3M603.5 385v3M603.5 339v2M603.5 359v3M604.5 348v3M604.5 348v2M604.5 378v1M605.5 313v1M605.5 374v3M605.5 357v1M605.5 363v2M606.5 325v3M606.5 351v3M606.5 356v1M606.5 364v1M607.5 371v1M607.5 345v1M607.5 364v3M607.5 372v1M608.5 379v1M608.5 355v1M609.5 369v1M609.5 343v2M609.5 374v1M610.5 356v3M610.5 373v1M610.5 372v1M610.5 370v3M611.5 363v1M611.5 378v1M611.5 355v1M612.5 326v1M612.5 333v1M612.5 361v1M612.5 382v2M613.5 364v1M613.5 348v3M613.5 368v2M614.5 370v1M614.5 372v1M615.5 353v3M615.5 378v1M615.5 371v3M616.5 378v3M616.5 353v3M616.5 340v2M617.5 364v1M617.5 348v1M617.5 356v2M617.5 336v1M618.5 371v1M618.5 377v2M618.5 368v1M618.5 349v1M619.5 353v1M619.5 332v1M619.5 364v3M619.5 387v2M620.5 331v2M620.5 348v2M620.5 337v2M621.5 358v3M621.5 347v2M621.5 372v2M621.5 344v1M622.5 383v2M622.5 382v1M622.5 362v1M622.5 368v3M623.5 346v1M623.5 385v1M623.5 369v1M623.5 353v3M624.5 377v2M624.5 364v1M624.5 315v1M625.5 340v3M625.5 364v1M625.5 339v1M626.5 375v1M626.5 318v1M626.5 366v1M626.5 338v1M627.5 363v2M627.5 384v2M627.5 335v1M628.5 387v2M628.5 368v1M628.5 371v3M628.5 369v3M629.5 365v1M629.5 374v3M629.5 358v3M630.5 365v3M630.5 363v1M630.5 384v1M631.5 385v2M631.5 362v2M631.5 335v1M632.5 361v3M632.5 336v1M632.5 374v3M632.5 339v1M633.5 337v3M633.5 384v2M633.5 350v3M634.5 355v1M634.5 369v1M635.5 375v3M635.5 346v1M635.5 360v2M636.5 343v2M636.5 353v1M636.5 328v1M637.5 365v1M637.5 365v2M638.5 372v3M638.5 330v2M639.5 379v1M639.5 366v1M639.5 322v1M640.5 380v1M640.5 346v3M640.5 321v3M641.5 364v2M641.5 362v1M641.5 359v1M642.5 361v1M642.5 331v2M642.5 353v1M643.5 370v1M643.5 331v1M643.5 345v1M644.5 381v2M644.5 330v1M644.5 324v1M645.5 334v2M645.5 389v3M645.5 378v2M645.5 316v1M646.5 373v3M646.5 365v1M647.5 337v3M647.5 376v1M647.5 367v3M647.5 376v1M648.5 349v1M648.5 374v1M648.5 376v1M649.5 379v1M649.5 338v3M650.5 377v1M650.5 365v1M650.5 375v3M651.5 333v3M651.5 384v1M651.5 363v3M652.5 343v1M652.5 363v1M653.5 350v2M653.5 349v2M653.5 384v1M653.5 346v3M654.5 354v1M654.5 360v2M655.5 380v3M655.5 369v1M656.5 367v3M656.5 382v3M656.5 376v3M656.5 336v2M657.5 367v3M657.5 381v1M657.5 372v3M658.5 383v2M658.5 351v1M658.5 382v1M658.5 336v2M659.5 371v3M659.5 373v2M659.5 370v1M660.5 384v1M660.5 371v2M660.5 324v1M661.5 363v3M661.5 363v2M661.5 366v1M662.5 359v2M662.5 346v1M663.5 365v2M663.5 363v1M663.5 356v1M663.5 360v1M664.5 343v1M664.5 382v1M664.5 356v1M665.5 360v3M665.5 362v1M665.5 366v1M666.5 382v2M666.5 337v1M666.5 356v2M667.5 373v1M667.5 351v2M667.5 379v1M668.5 364v1M668.5 353v1M668.5 363v1M669.5 378v1M669.5 352v1M669.5 341v1M670.5 374v2M670.5 374v1M670.5 330v1M671.5 381v2M671.5 361v1M672.5 388v3M672.5 363v3M672.5 362v1M672.5 368v2M673.5 381v1M673.5 333v3M673.5 349v1M674.5 388v1M674.5 387v2M675.5 388v1M675.5 361v1M675.5 344v1M676.5 369v1M676.5 347v2M676.5 372v2M677.5 367v2M677.5 336v3M678.5 341v1M678.5 347v2M679.5 383v2M679.5 364v2M679.5 366v1M680.5 387v2M680.5 380v2M680.5 359v2M680.5 346v3M681.5 375v3M681.5 351v1M682.5 363v2M682.5 377v3M682.5 383v2M682.5 360v1M683.5 339v2M683.5 345v1M684.5 383v1M684.5 343v2M685.5 324v1M685.5 336v2M685.5 328v2M685.5 364v3M686.5 377v3M686.5 368v3M687.5 320v1M687.5 372v1M688.5 344v3M688.5 327v1M688.5 368v2M689.5 366v2M689.5 388v3M690.5 339v1M690.5 382v1M690.5 336v2M691.5 352v3M691.5 329v3M692.5 373v3M692.5 339v1M692.5 360v1M693.5 362v1M693.5 342v1M693.5 366v1M693.5 362v1M694.5 375v2M694.5 339v3M695.5 337v1M695.5 359v3M695.5 339v3M696.5 356v1M696.5 364v2M697.5 348v3M697.5 375v3M697.5 374v2M697.5 382v2M698.5 382v1M698.5 375v1M698.5 334v1M699.5 366v1M699.5 334v1M700.5 377v2M700.5 373v2M700.5 348v1M701.5 346v3M701.5 377v1M701.5 380v2M701.5 374v2M702.5 359v1M702.5 339v2M702.5 379v1M703.5 381v3M703.5 378v1M703.5 360v1M704.5 362v2M704.5 363v1M704.5 353v2M705.5 321v2M705.5 381v3M705.5 371v1M706.5 366v3M706.5 376v2M706.5 363v2M706.5 372v1M707.5 353v2M707.5 360v1M707.5 370v1M708.5 331v1M708.5 345v1M709.5 366v3M709.5 387v3M709.5 349v1M710.5 371v1M710.5 384v1M710.5 343v2M710.5 337v2M711.5 362v1M711.5 358v3M711.5 349v2M712.5 358v3M712.5 368v2M712.5 374v1M712.5 371v2M713.5 321v2M713.5 340v2M713.5 337v3M713.5 376v2M714.5 377v2M714.5 369v1M714.5 380v1M714.5 379v3M715.5 335v2M715.5 360v1M715.5 320v1M716.5 344v1M716.5 356v3M717.5 348v3M717.5 381v1M717.5 377v1M718.5 391v2M718.5 367v1M718.5 329v1M719.5 343v3M719.5 355v2M719.5 340v2M719.5 324v1M720.5 374v1M720.5 348v1M720.5 347v1M721.5 338v1M721.5 375v1M722.5 371v1M722.5 369v1M722.5 318v1M723.5 326v3M723.5 327v1M724.5 379v1M724.5 325v2M724.5 339v1M725.5 376v2M725.5 391v1M725.5 372v1M726.5 368v3M726.5 358v1M726.5 351v2M726.5 384v1M727.5 357v3M727.5 357v1M728.5 361v1M728.5 389v1M728.5 373v1M728.5 338v1M729.5 377v2M729.5 334v1M729.5 378v1M730.5 343v1M730.5 382v2M730.5 383v1M731.5 368v3M731.5 317v3M731.5 368v3M732.5 382v1M732.5 368v3M732.5 381v3M733.5 376v1M733.5 345v1M733.5 344v3M734.5 371v3M734.5 340v1M734.5 352v2M735.5 388v2M735.5 366v3M736.5 371v3M736.5 377v1M736.5 361v1M737.5 359v1M737.5 352v1M737.5 370v3M738.5 371v3M738.5 329v1M738.5 325v3M739.5 388v3M739.5 354v1M739.5 362v3M740.5 380v1M740.5 379v1M740.5 351v2M741.5 365v3M741.5 363v1M741.5 337v1M742.5 362v3M742.5 363v3M743.5 344v1M743.5 338v3M743.5 365v1M743.5 380v1M744.5 371v1M744.5 362v3M744.5 349v1M744.5 369v3M745.5 378v1M745.5 364v1M746.5 340v2M746.5 378v3M746.5 337v2M747.5 370v1M747.5 391v3M747.5 343v2M748.5 369v3M748.5 352v1M748.5 373v2M749.5 368v1M749.5 370v1M749.5 377v1M750.5 361v1M750.5 361v1M750.5 374v3M751.5 370v2M751.5 380v1M751.5 363v1M752.5 351v1M752.5 344v1M752.5 368v3M752.5 369v1M753.5 340v1M753.5 350v1M753.5 336v3M753.5 364v1M754.5 377v1M754.5 330v1M755.5 352v1M755.5 381v1M755.5 369v1M756.5 373v2M756.5 386v1M757.5 374v2M757.5 371v1M757.5 382v1M758.5 379v3M758.5 375v1M758.5 349v1M758.5 361v3M759.5 368v1M759.5 378v2M760.5 374v1M760.5 371v1M760.5 318v1M760.5 368v3M761.5 373v2M761.5 371v1M761.5 358v1M762.5 384v1M762.5 360v2M762.5 367v1M763.5 327v3M763.5 373v3M763.5 391v3M764.5 382v3M764.5 373v2M764.5 382v3M764.5 326v1M765.5 360v1M765.5 383v3M765.5 356v1M766.5 384v1M766.5 391v1M767.5 372v2M767.5 367v1M767.5 340v2M768.5 364v3M768.5 377v1M768.5 353v2M769.5 372v1M769.5 382v3M769.5 352v1M770.5 384v1M770.5 380v3M770.5 385v3M770.5 347v1M771.5 336v1M771.5 341v1M772.5 385v3M772.5 347v1M772.5 380v1M773.5 323v1M773.5 378v1M773.5 342v3M774.5 351v2M774.5 374v1M774.5 378v3M775.5 328v1M775.5 381v1M775.5 370v1M776.5 362v1M776.5 328v2M776.5 328v3M777.5 389v1M777.5 327v2M778.5 368v1M778.5 359v3M778.5 374v1M779.5 323v2M779.5 366v1M780.5 319v1M780.5 369v3M780.5 386v1M781.5 359v2M781.5 356v1M781.5 369v2M782.5 343v1M782.5 363v3M782.5 373v1M783.5 379v1M783.5 374v3M783.5 326v1M784.5 361v2M784.5 355v1M785.5 380v1M785.5 361v1M785.5 381v1M785.5 365v3M786.5 371v2M786.5 380v3M787.5 360v2M787.5 357v2M788.5 369v1M788.5 350v2M788.5 334v1M789.5 353v1M789.5 366v1M789.5 343v2M790.5 328v2M790.5 380v3M790.5 373v2M791.5 357v1M791.5 371v3M791.5 353v2M792.5 363v3M792.5 356v3M792.5 375v1M793.5 366v1M793.5 384v2M793.5 336v2M794.5 368v1M794.5 389v3M794.5 365v2M795.5 363v1M795.5 362v2M795.5 351v1M795.5 340v1M796.5 373v1M796.5 368v2M797.5 330v1M797.5 389v1M797.5 386v3M797.5 340v2M798.5 354v2M798.5 378v3M798.5 376v3M799.5 360v2M799.5 387v1M799.5 370v2M800.5 342v2M800.5 380v1M801.5 358v1M801.5 381v3M801.5 337v2M802.5 381v1M802.5 350v3M802.5 382v1M803.5 387v3M803.5 356v1M803.5 386v2M803.5 356v1M804.5 354v3M804.5 381v1M805.5 362v1M805.5 352v3M805.5 370v2M806.5 349v2M806.5 384v3M806.5 372v3M807.5 322v3M807.5 369v1M807.5 384v2M807.5 369v3M808.5 323v3M808.5 346v2M808.5 378v2M809.5 345v2M809.5 374v1M809.5 347v1M810.5 369v1M810.5 379v2M811.5 354v3M811.5 366v1M811.5 373v3M812.5 341v1M812.5 364v1M812.5 335v1M812.5 359v1M813.5 342v1M813.5 329v3M813.5 350v2M814.5 370v3M814.5 356v2M814.5 338v2M815.5 384v1M815.5 356v3M815.5 335v1M815.5 328v1M816.5 365v1M816.5 372v1M816.5 326v1M817.5 379v1M817.5 342v1M817.5 371v2M818.5 379v2M818.5 362v1M818.5 385v1M819.5 354v2M819.5 338v3M819.5 366v1M820.5 378v3M820.5 360v2M821.5 363v3M821.5 365v2M821.5 351v1M822.5 385v1M822.5 351v1M822.5 332v1M823.5 348v2M823.5 356v1M824.5 337v3M824.5 386v2M825.5 358v2M825.5 347v1M825.5 377v3M826.5 329v3M826.5 370v3M826.5 379v3M827.5 372v1M827.5 380v1M828.5 341v3M828.5 364v1M829.5 323v3M829.5 361v2M829.5 375v3M830.5 368v1M830.5 346v1M831.5 379v2M831.5 376v1M832.5 382v1M832.5 385v1M833.5 341v1M833.5 357v1M833.5 333v1M834.5 347v3M834.5 369v1M834.5 376v3M835.5 320v2M835.5 350v2M835.5 354v2M836.5 359v1M836.5 358v2M836.5 357v3M837.5 367v3M837.5 354v2M837.5 334v1M838.5 370v2M838.5 385v1M839.5 385v1M839.5 343v3M839.5 322v2M839.5 369v1M840.5 358v2M840.5 358v3M840.5 344v2M841.5 344v2M841.5 360v2M842.5 380v2M842.5 381v2M842.5 359v1" stroke="#000" stroke-opacity=".45" stroke-width="1" fill="none"/>
<rect x="346" y="280" width="6.5" height="113.5" fill="#000"/>
<rect x="398" y="280" width="5" height="113.5" fill="#000"/>
<rect x="379" y="306" width="3.6" height="114" fill="#000"/>
<rect x="378" y="283" width="5.5" height="21" fill="url(#gc)"/>
<path d="M377.5 300L380.7 307L384 300Z" fill="#00c8c8"/>
<rect x="346" y="394" width="6.5" height="20" fill="url(#gcl)"/>
<rect x="398" y="394" width="5" height="20" fill="url(#gcl)"/>
<path d="M21.5 470V499M22.5 471V501M23.5 472V501M25.5 472V500M26.5 472V501M27.5 471V500M28.5 470V501M29.5 471V499M30.5 470V499M35.5 470V500M36.5 471V500M39.5 471V499M40.5 472V500M46.5 466V499M49.5 471V499M50.5 471V500M51.5 472V501M53.5 471V501M54.5 470V499M55.5 470V501M56.5 472V499M57.5 472V501M58.5 472V500M59.5 471V500M61.5 472V502M62.5 472V500M65.5 471V501M66.5 471V505M68.5 470V499M70.5 468V499M71.5 471V500M72.5 470V501M75.5 471V500M76.5 469V499M78.5 472V499M79.5 471V501M80.5 471V501M83.5 472V500M87.5 472V500M88.5 470V500M89.5 470V500M90.5 472V501M91.5 471V499M92.5 472V499M93.5 470V500M96.5 472V500M97.5 471V500M98.5 470V501M99.5 470V502M100.5 468V500M102.5 472V501M104.5 471V500M105.5 470V499M106.5 469V501M107.5 470V503M108.5 472V500M109.5 470V501M110.5 471V500M111.5 471V499M112.5 470V499M113.5 471V499M114.5 471V501M117.5 472V500M121.5 472V501M123.5 471V499M124.5 470V499M125.5 472V502M126.5 472V500M127.5 472V499M129.5 471V500M131.5 471V499M134.5 472V499M135.5 472V501M136.5 470V500M137.5 471V500M138.5 472V501M139.5 472V501M140.5 472V500M141.5 471V501M142.5 471V500M143.5 472V500M144.5 471V501M145.5 470V500M146.5 472V501M148.5 471V499M149.5 472V500M150.5 470V500M151.5 472V501M152.5 472V501M153.5 472V499M154.5 472V503M158.5 471V501M160.5 472V501M164.5 471V499M165.5 471V499M166.5 470V500M167.5 471V501M171.5 471V501M173.5 472V500M178.5 470V500M179.5 472V500M181.5 471V499M182.5 471V501M184.5 470V500M187.5 468V500M188.5 470V501M190.5 471V499M192.5 467V499M193.5 471V499M194.5 469V500M195.5 471V499M196.5 470V500M199.5 471V500M200.5 471V499M202.5 470V501M203.5 470V499M204.5 471V501M205.5 470V501M207.5 470V500M209.5 472V501M211.5 471V500M212.5 472V499M213.5 472V500M214.5 472V501M215.5 471V501M216.5 468V499M218.5 472V500M222.5 468V500M223.5 471V500M225.5 471V501M226.5 471V503M228.5 470V501M229.5 470V501M230.5 471V500M231.5 472V501M232.5 470V501M233.5 470V500M234.5 471V499M236.5 470V500M238.5 470V501M239.5 470V499M240.5 468V501M245.5 471V499M246.5 471V499M247.5 471V499M249.5 470V504M251.5 470V501M252.5 471V500M253.5 471V499M254.5 472V501M257.5 470V500M259.5 468V500M261.5 472V500M263.5 471V501M264.5 471V500M265.5 471V500M266.5 472V499M267.5 470V499M269.5 472V499M270.5 472V499M271.5 472V500M272.5 471V499M275.5 470V500M276.5 471V499M278.5 471V501M280.5 471V500M282.5 468V500M283.5 471V499M285.5 472V500M287.5 471V503M288.5 470V501M291.5 471V500M292.5 470V499M293.5 470V501M294.5 471V499M295.5 471V499M296.5 471V501M297.5 472V499M299.5 470V499M300.5 472V499M301.5 471V504M302.5 472V500M303.5 472V501M306.5 470V500M307.5 472V500M309.5 471V499M310.5 472V500M311.5 471V501M312.5 472V501M315.5 470V500M318.5 470V501M319.5 471V499M322.5 470V499M325.5 470V500M326.5 471V501M328.5 471V500M330.5 472V499M334.5 471V500M336.5 471V501" stroke="#200020" stroke-width="1" fill="none"/>
<rect x="21" y="472" width="316" height="27" fill="url(#gmh)"/>
<path d="M21.5 495.45V499.5M22.5 476.34V471.5M23.5 474.44V471.5M24.5 476.39V471.5M25.5 496.12V499.5M26.5 474.81V471.5M28.5 474.77V471.5M29.5 496V499.5M30.5 476.75V471.5M31.5 494.01V499.5M34.5 474.3V471.5M36.5 494.96V499.5M37.5 476.92V471.5M42.5 476.48V471.5M43.5 476.21V471.5M44.5 475.09V471.5M45.5 494.75V499.5M46.5 495.79V499.5M47.5 495.72V499.5M49.5 476.49V471.5M51.5 497.09V499.5M52.5 473.52V471.5M54.5 475.21V471.5M56.5 497.3V499.5M57.5 476.83V471.5M59.5 475.52V471.5M61.5 476.8V471.5M63.5 473.91V471.5M64.5 475.08V471.5M68.5 476.56V471.5M70.5 476.89V471.5M71.5 494.62V499.5M72.5 476.24V471.5M74.5 473.87V471.5M75.5 473.85V471.5M76.5 474.18V471.5M77.5 476.8V471.5M80.5 495.59V499.5M84.5 495.95V499.5M86.5 474.15V471.5M87.5 496.05V499.5M88.5 475.86V471.5M90.5 497.1V499.5M91.5 495.19V499.5M93.5 494.64V499.5M94.5 476.13V471.5M96.5 495.25V499.5M98.5 496.23V499.5M99.5 495.54V499.5M102.5 495.8V499.5M103.5 494.31V499.5M106.5 473.63V471.5M107.5 475.68V471.5M108.5 476.92V471.5M112.5 474.68V471.5M113.5 473.59V471.5M116.5 497.31V499.5M119.5 494.24V499.5M121.5 494.29V499.5M122.5 497.49V499.5M123.5 497.31V499.5M126.5 496.34V499.5M127.5 494.81V499.5M128.5 494.02V499.5M131.5 474.8V471.5M132.5 476.56V471.5M133.5 495.79V499.5M134.5 473.77V471.5M139.5 475.45V471.5M140.5 496.76V499.5M142.5 494V499.5M148.5 495.78V499.5M149.5 473.78V471.5M151.5 496.2V499.5M152.5 476.77V471.5M153.5 496.43V499.5M154.5 473.66V471.5M156.5 494.7V499.5M160.5 476.5V471.5M161.5 495.4V499.5M165.5 475.79V471.5M167.5 496.68V499.5M170.5 473.89V471.5M172.5 474.03V471.5M178.5 495.19V499.5M190.5 474.02V471.5M195.5 475.66V471.5M197.5 496.02V499.5M198.5 496.26V499.5M199.5 476.91V471.5M200.5 474.87V471.5M202.5 476.83V471.5M203.5 495.21V499.5M208.5 496.33V499.5M209.5 497.1V499.5M210.5 475.51V471.5M212.5 495.76V499.5M213.5 494.94V499.5M218.5 496.85V499.5M219.5 473.85V471.5M221.5 496.36V499.5M223.5 474.23V471.5M225.5 496.87V499.5M227.5 497.03V499.5M228.5 496.87V499.5M230.5 474.95V471.5M231.5 474.2V471.5M232.5 475.38V471.5M233.5 473.75V471.5M234.5 473.91V471.5M236.5 476.57V471.5M237.5 474.44V471.5M244.5 476.69V471.5M245.5 496.82V499.5M248.5 475.73V471.5M250.5 497.34V499.5M251.5 494.25V499.5M255.5 473.8V471.5M259.5 474.11V471.5M260.5 497.25V499.5M262.5 494.91V499.5M263.5 476.88V471.5M266.5 474.13V471.5M270.5 495.46V499.5M271.5 495.76V499.5M275.5 474.75V471.5M276.5 497.08V499.5M278.5 476.61V471.5M280.5 473.54V471.5M286.5 495.2V499.5M287.5 474.18V471.5M289.5 496.51V499.5M290.5 476.2V471.5M291.5 494.29V499.5M292.5 473.85V471.5M293.5 496.24V499.5M295.5 476.46V471.5M296.5 475.51V471.5M297.5 476.89V471.5M299.5 494.59V499.5M300.5 475.81V471.5M301.5 495.64V499.5M303.5 475.67V471.5M304.5 494.37V499.5M306.5 475.62V471.5M307.5 473.73V471.5M309.5 496.49V499.5M310.5 494.32V499.5M311.5 474.36V471.5M313.5 473.74V471.5M315.5 475.48V471.5M319.5 494.19V499.5M320.5 474.54V471.5M322.5 495.69V499.5M324.5 494.64V499.5M325.5 474.1V471.5M326.5 495.19V499.5M327.5 476.31V471.5M329.5 473.76V471.5M330.5 496.78V499.5M331.5 495.31V499.5M332.5 476.14V471.5M334.5 495.61V499.5M336.5 495.09V499.5" stroke="#000" stroke-opacity=".2" stroke-width="1" fill="none"/>
<path d="M844.5 472V499M845.5 472V499M847.5 470V500M849.5 471V501M851.5 471V500M852.5 471V500M854.5 472V501M856.5 470V501M858.5 470V499M860.5 471V500M862.5 470V500M863.5 471V501M864.5 472V501M865.5 471V500M866.5 472V499M867.5 472V500M870.5 471V500M871.5 471V499M872.5 472V501M873.5 471V501M874.5 471V500M876.5 468V499M877.5 472V500M879.5 471V501M880.5 471V499M881.5 472V501M882.5 471V501M883.5 471V501M884.5 470V501M885.5 470V501M886.5 470V503M887.5 470V501M889.5 470V501M891.5 471V500M892.5 471V500M894.5 471V500M895.5 471V499M898.5 470V501M899.5 472V500M900.5 472V499M901.5 472V501M905.5 471V499M906.5 471V501M907.5 470V501M908.5 470V500M909.5 470V500M910.5 471V499M911.5 470V499M912.5 470V501M915.5 470V501M918.5 471V500M921.5 471V501M923.5 471V501M925.5 470V501M926.5 471V499M927.5 470V501M928.5 471V500M929.5 470V501M930.5 471V499M935.5 472V500M936.5 472V500M937.5 470V499M938.5 471V500M939.5 471V500M940.5 470V499M941.5 471V500M942.5 472V500M944.5 472V502M945.5 471V501M947.5 471V501M951.5 470V501M956.5 471V500M957.5 470V501M958.5 469V500M959.5 471V501M961.5 471V499M966.5 471V499M968.5 470V499M972.5 471V500M975.5 470V500M976.5 471V501M981.5 471V500M986.5 471V500M988.5 472V500M989.5 470V499M990.5 471V501M993.5 472V501M994.5 472V501M995.5 471V500M996.5 472V500M999.5 472V500M1000.5 470V501M1002.5 470V503M1004.5 471V500M1005.5 471V501M1007.5 471V500M1008.5 470V500M1009.5 470V500M1010.5 472V499M1012.5 472V501M1015.5 471V499M1017.5 472V500M1018.5 471V499M1019.5 468V501" stroke="#200020" stroke-width="1" fill="none"/>
<rect x="844" y="472" width="177" height="27" fill="url(#gmh)"/>
<path d="M846.5 496.21V499.5M847.5 494.48V499.5M849.5 476.64V471.5M854.5 496.54V499.5M857.5 496.5V499.5M860.5 494.04V499.5M862.5 473.75V471.5M864.5 495.7V499.5M866.5 496.99V499.5M868.5 494.05V499.5M870.5 476.25V471.5M872.5 494.2V499.5M873.5 474.73V471.5M875.5 495.61V499.5M876.5 495.85V499.5M877.5 494.84V499.5M878.5 495.04V499.5M882.5 497.08V499.5M883.5 495.22V499.5M885.5 474.43V471.5M888.5 476.17V471.5M893.5 474.73V471.5M894.5 496.07V499.5M905.5 474.42V471.5M906.5 495.45V499.5M907.5 496.9V499.5M908.5 473.61V471.5M909.5 473.85V471.5M910.5 473.66V471.5M917.5 495.3V499.5M918.5 496.59V499.5M925.5 497.32V499.5M932.5 473.83V471.5M933.5 475.11V471.5M936.5 494.37V499.5M937.5 476.75V471.5M938.5 496.14V499.5M939.5 494.05V499.5M940.5 494.87V499.5M941.5 496.56V499.5M946.5 474.34V471.5M948.5 475.57V471.5M950.5 475.14V471.5M954.5 473.56V471.5M961.5 475.72V471.5M962.5 494.78V499.5M963.5 476.46V471.5M964.5 494.49V499.5M966.5 496.69V499.5M967.5 473.97V471.5M968.5 495.9V499.5M971.5 476.3V471.5M973.5 476.06V471.5M978.5 474.92V471.5M979.5 474.49V471.5M980.5 496.32V499.5M982.5 496.63V499.5M984.5 474.73V471.5M986.5 495.74V499.5M988.5 473.71V471.5M989.5 494.47V499.5M991.5 495.71V499.5M993.5 495.82V499.5M997.5 494.59V499.5M1000.5 494.8V499.5M1002.5 497.37V499.5M1003.5 473.87V471.5M1004.5 494.92V499.5M1005.5 476.29V471.5M1006.5 475.94V471.5M1007.5 474.26V471.5M1009.5 495.86V499.5M1010.5 494.07V499.5M1014.5 476.38V471.5M1016.5 497.22V499.5M1017.5 475.49V471.5" stroke="#000" stroke-opacity=".2" stroke-width="1" fill="none"/>
<path d="M368.5 476V600M374.5 476V600M378.5 476V600M380.5 476V600M382.5 476V600M385.5 476V600M394.5 476V600M419.5 476V600M430.5 476V600M451.5 476V600M464.5 476V600M481.5 476V600M484.5 476V600M499.5 476V600M501.5 476V600M502.5 476V600M509.5 476V600M515.5 476V600M526.5 476V600M530.5 476V600M540.5 476V600M556.5 476V600M567.5 476V600M574.5 476V600M579.5 476V600M580.5 476V600M594.5 476V600M604.5 476V600M607.5 476V600M612.5 476V600M615.5 476V600M618.5 476V600M620.5 476V600M625.5 476V600M629.5 476V600M631.5 476V600M633.5 476V600M639.5 476V600M644.5 476V600M651.5 476V600M658.5 476V600M668.5 476V600M672.5 476V600M682.5 476V600M684.5 476V600M698.5 476V600M711.5 476V600M736.5 476V600M737.5 476V600M746.5 476V600M747.5 476V600M754.5 476V600M757.5 476V600M761.5 476V600M762.5 476V600M767.5 476V600M770.5 476V600M774.5 476V600M776.5 476V600M780.5 476V600M782.5 476V600M793.5 476V600M796.5 476V600M813.5 476V600M832.5 476V600M837.5 476V600M842.5 476V600" stroke="url(#gm)" stroke-width="1.1" fill="none"/>
<path d="M367.3 473L369.7 473L368.8 535H368.2ZM373.5 474L375.5 474L374.8 535H374.2ZM377.3 473L379.7 473L378.8 535H378.2ZM379.7 472L381.3 472L380.8 535H380.2ZM381.1 472L383.9 472L382.8 535H382.2ZM384.7 472L386.3 472L385.8 535H385.2ZM393.1 473L395.9 473L394.8 535H394.2ZM418.3 475L420.7 475L419.8 535H419.2ZM429.7 475L431.3 475L430.8 535H430.2ZM450.5 474L452.5 474L451.8 535H451.2ZM463.5 472L465.5 472L464.8 535H464.2ZM480.3 474L482.7 474L481.8 535H481.2ZM483.5 473L485.5 473L484.8 535H484.2ZM498.5 473L500.5 473L499.8 535H499.2ZM500.3 473L502.7 473L501.8 535H501.2ZM501.5 473L503.5 473L502.8 535H502.2ZM508.5 472L510.5 472L509.8 535H509.2ZM514.7 474L516.3 474L515.8 535H515.2ZM525.3 473L527.7 473L526.8 535H526.2ZM529.7 472L531.3 472L530.8 535H530.2ZM539.5 473L541.5 473L540.8 535H540.2ZM555.1 474L557.9 474L556.8 535H556.2ZM566.5 475L568.5 475L567.8 535H567.2ZM573.1 474L575.9 474L574.8 535H574.2ZM578.7 472L580.3 472L579.8 535H579.2ZM579.5 473L581.5 473L580.8 535H580.2ZM593.1 474L595.9 474L594.8 535H594.2ZM603.1 473L605.9 473L604.8 535H604.2ZM606.7 472L608.3 472L607.8 535H607.2ZM611.5 472L613.5 472L612.8 535H612.2ZM614.3 475L616.7 475L615.8 535H615.2ZM617.1 475L619.9 475L618.8 535H618.2ZM619.1 472L621.9 472L620.8 535H620.2ZM624.5 474L626.5 474L625.8 535H625.2ZM628.5 472L630.5 472L629.8 535H629.2ZM630.3 475L632.7 475L631.8 535H631.2ZM632.5 473L634.5 473L633.8 535H633.2ZM638.3 473L640.7 473L639.8 535H639.2ZM643.1 473L645.9 473L644.8 535H644.2ZM650.5 474L652.5 474L651.8 535H651.2ZM657.5 472L659.5 472L658.8 535H658.2ZM667.3 472L669.7 472L668.8 535H668.2ZM671.5 475L673.5 475L672.8 535H672.2ZM681.5 473L683.5 473L682.8 535H682.2ZM683.1 473L685.9 473L684.8 535H684.2ZM697.1 474L699.9 474L698.8 535H698.2ZM710.1 473L712.9 473L711.8 535H711.2ZM735.3 474L737.7 474L736.8 535H736.2ZM736.7 474L738.3 474L737.8 535H737.2ZM745.3 473L747.7 473L746.8 535H746.2ZM746.7 475L748.3 475L747.8 535H747.2ZM753.1 473L755.9 473L754.8 535H754.2ZM756.5 474L758.5 474L757.8 535H757.2ZM760.7 473L762.3 473L761.8 535H761.2ZM761.7 474L763.3 474L762.8 535H762.2ZM766.7 475L768.3 475L767.8 535H767.2ZM769.5 473L771.5 473L770.8 535H770.2ZM773.5 473L775.5 473L774.8 535H774.2ZM775.5 475L777.5 475L776.8 535H776.2ZM779.5 475L781.5 475L780.8 535H780.2ZM781.5 475L783.5 475L782.8 535H782.2ZM792.5 475L794.5 475L793.8 535H793.2ZM795.5 473L797.5 473L796.8 535H796.2ZM812.7 473L814.3 473L813.8 535H813.2ZM831.5 474L833.5 474L832.8 535H832.2ZM836.3 473L838.7 473L837.8 535H837.2ZM841.7 473L843.3 473L842.8 535H842.2Z" fill="url(#gm2)"/>
<path d="M341.5 522V600M349.5 512V600M353.5 525V600M365.5 529V600M371.5 517V600M376.5 522V600M390.5 524V600M414.5 524V600M428.5 526V600M441.5 523V600M454.5 514V600M467.5 526V600M493.5 523V600M507.5 520V600M532.5 529V600M545.5 514V600M557.5 519V600M584.5 523V600M596.5 520V600M610.5 525V600M649.5 530V600M661.5 518V600M675.5 523V600M687.5 527V600M701.5 520V600M726.5 515V600M739.5 518V600M752.5 512V600M765.5 521V600M777.5 515V600M790.5 516V600M804.5 513V600M816.5 520V600M829.5 527V600" stroke="url(#gm3)" stroke-width="1" fill="none"/>
<path d="M337.5 582V608M338.5 583V609M339.5 581V609M341.5 583V609M342.5 581V608M343.5 582V609M344.5 582V608M345.5 583V608M346.5 580V608" stroke="#200020" stroke-width="1" fill="none"/>
<rect x="337" y="583" width="9.7" height="24" fill="url(#gml)"/>
<path d="M337.5 586.37V582.5M338.5 604.53V607.5M339.5 603.44V607.5M340.5 586.58V582.5M342.5 604.24V607.5M345.5 585.1V582.5" stroke="#000" stroke-opacity=".2" stroke-width="1" fill="none"/>
<path d="M356.5 582V609M357.5 583V608M358.5 582V609" stroke="#200020" stroke-width="1" fill="none"/>
<rect x="356" y="583" width="3" height="24" fill="url(#gml)"/>
<path d="M357.5 604.27V607.5" stroke="#000" stroke-opacity=".2" stroke-width="1" fill="none"/>
<path d="M362.5 581V608M363.5 581V607M365.5 583V609M366.5 582V608M367.5 579V607M370.5 582V607M371.5 582V609M372.5 582V607M376.5 582V608M380.5 582V609M381.5 581V607M383.5 581V607M385.5 583V608M386.5 582V608M388.5 582V608M389.5 581V609M392.5 581V608" stroke="#200020" stroke-width="1" fill="none"/>
<rect x="362.4" y="583" width="34.3" height="24" fill="url(#gml)"/>
<path d="M363.5 603.11V607.5M364.5 586.12V582.5M365.5 587.13V582.5M367.5 605.23V607.5M370.5 585.94V582.5M375.5 603.52V607.5M376.5 602.63V607.5M377.5 587.03V582.5M380.5 604.96V607.5M381.5 603.7V607.5M382.5 603.41V607.5M383.5 585.36V582.5M384.5 603.07V607.5M386.5 585.81V582.5M389.5 605.34V607.5M390.5 586.5V582.5M391.5 602.62V607.5M393.5 603.44V607.5M394.5 585.32V582.5" stroke="#000" stroke-opacity=".2" stroke-width="1" fill="none"/>
<path d="M408.5 582V607M411.5 582V610M413.5 583V608M414.5 582V607M415.5 582V609M416.5 583V609M417.5 582V607M418.5 583V608M419.5 583V607M422.5 582V608M423.5 582V607M424.5 582V607M425.5 582V607M426.5 581V609M427.5 583V608M429.5 581V607M433.5 581V607M434.5 582V607M435.5 583V607M436.5 582V608M437.5 580V607M438.5 581V609M439.5 581V609M440.5 581V608M441.5 583V608M442.5 581V608M443.5 582V608M444.5 582V611M445.5 583V607M446.5 583V608M447.5 582V609M451.5 582V607M452.5 583V609M453.5 581V608M454.5 583V609M456.5 577V609M457.5 582V607M459.5 582V607M460.5 582V608M463.5 581V608M464.5 583V609M465.5 583V608M466.5 583V609M467.5 582V608M468.5 581V608M469.5 581V609M472.5 581V608M473.5 583V608M474.5 582V608M475.5 582V608M478.5 582V608M480.5 583V607M481.5 582V607M483.5 582V608M484.5 581V607M487.5 581V607M488.5 583V609M489.5 582V610M490.5 582V609M493.5 582V607M495.5 583V607M497.5 583V609" stroke="#200020" stroke-width="1" fill="none"/>
<rect x="408" y="583" width="91" height="24" fill="url(#gml)"/>
<path d="M408.5 604.12V607.5M411.5 585.08V582.5M412.5 603.71V607.5M415.5 586.71V582.5M416.5 603.08V607.5M418.5 604.94V607.5M419.5 586.21V582.5M420.5 584.93V582.5M425.5 585.08V582.5M428.5 586.9V582.5M429.5 585.92V582.5M433.5 602.85V607.5M436.5 586.21V582.5M437.5 603.23V607.5M438.5 585.21V582.5M440.5 604.16V607.5M441.5 586.03V582.5M444.5 585.86V582.5M445.5 585.44V582.5M450.5 602.89V607.5M452.5 604.57V607.5M454.5 585.09V582.5M456.5 603.67V607.5M458.5 584.59V582.5M461.5 585.27V582.5M462.5 585.03V582.5M463.5 604.47V607.5M467.5 603.14V607.5M470.5 604.15V607.5M471.5 603.61V607.5M472.5 586.15V582.5M473.5 603.55V607.5M474.5 603.46V607.5M476.5 604.72V607.5M477.5 584.5V582.5M478.5 586.4V582.5M479.5 584.64V582.5M481.5 603.7V607.5M484.5 585.2V582.5M485.5 585.48V582.5M489.5 602.73V607.5M490.5 604.13V607.5M492.5 586.07V582.5M494.5 585.51V582.5M495.5 587.28V582.5M497.5 603.48V607.5M498.5 587.09V582.5" stroke="#000" stroke-opacity=".2" stroke-width="1" fill="none"/>
<path d="M502.5 581V609M504.5 582V608M505.5 582V608M507.5 579V607" stroke="#200020" stroke-width="1" fill="none"/>
<rect x="502.5" y="583" width="5" height="24" fill="url(#gml)"/>
<path d="M502.5 586.36V582.5M505.5 585.09V582.5M506.5 584.8V582.5" stroke="#000" stroke-opacity=".2" stroke-width="1" fill="none"/>
<path d="M510.5 583V609M511.5 581V608M512.5 582V609M513.5 582V608M514.5 582V609M516.5 581V608M517.5 582V608M519.5 582V607M520.5 582V607M521.5 582V608M522.5 582V608M523.5 582V608M526.5 583V609M527.5 578V607M529.5 581V607M530.5 582V609M532.5 581V608M533.5 581V607M535.5 581V608M536.5 582V608M538.5 582V608M539.5 581V607M541.5 582V607M542.5 583V609M543.5 582V607M544.5 582V607M549.5 581V607M550.5 582V609M551.5 582V608M552.5 581V609" stroke="#200020" stroke-width="1" fill="none"/>
<rect x="509" y="583" width="45.5" height="24" fill="url(#gml)"/>
<path d="M509.5 603.95V607.5M515.5 584.68V582.5M516.5 584.97V582.5M521.5 605.38V607.5M522.5 603.13V607.5M524.5 605.1V607.5M525.5 586.07V582.5M527.5 584.76V582.5M530.5 604.94V607.5M532.5 587.04V582.5M535.5 586.86V582.5M544.5 587.05V582.5M546.5 603.58V607.5M549.5 605.5V607.5M550.5 586.24V582.5M551.5 604.85V607.5M552.5 586.58V582.5M553.5 585.41V582.5M554.5 584.93V582.5" stroke="#000" stroke-opacity=".2" stroke-width="1" fill="none"/>
<path d="M556.5 582V608M557.5 581V612M559.5 581V608M562.5 580V608M565.5 583V608M566.5 578V609M567.5 582V608M570.5 581V609M572.5 583V607M574.5 582V607M575.5 581V608M576.5 581V608M577.5 583V608M578.5 582V609" stroke="#200020" stroke-width="1" fill="none"/>
<rect x="556.5" y="583" width="22.5" height="24" fill="url(#gml)"/>
<path d="M559.5 603.56V607.5M560.5 604V607.5M561.5 584.64V582.5M562.5 604.28V607.5M571.5 603.02V607.5M572.5 603.22V607.5M573.5 603.85V607.5M574.5 603.19V607.5M578.5 602.58V607.5" stroke="#000" stroke-opacity=".2" stroke-width="1" fill="none"/>
<path d="M580.5 582V607M581.5 582V608M582.5 583V608M583.5 581V608M584.5 582V609M586.5 583V608M589.5 582V608M590.5 579V607M591.5 583V611" stroke="#200020" stroke-width="1" fill="none"/>
<rect x="580.5" y="583" width="12.5" height="24" fill="url(#gml)"/>
<path d="M581.5 585.66V582.5M584.5 605.25V607.5M587.5 585.32V582.5M588.5 585.71V582.5M590.5 604.32V607.5M592.5 604.44V607.5" stroke="#000" stroke-opacity=".2" stroke-width="1" fill="none"/>
<path d="M594.5 583V607M597.5 581V608M598.5 583V607M599.5 582V609M601.5 581V608M603.5 578V608" stroke="#200020" stroke-width="1" fill="none"/>
<rect x="594.5" y="583" width="9" height="24" fill="url(#gml)"/>
<path d="M594.5 586.74V582.5M595.5 586.3V582.5M596.5 587.37V582.5M598.5 586.84V582.5M599.5 602.86V607.5M602.5 604.13V607.5" stroke="#000" stroke-opacity=".2" stroke-width="1" fill="none"/>
<path d="M608.5 583V607M610.5 582V608M611.5 583V609M613.5 582V609" stroke="#200020" stroke-width="1" fill="none"/>
<rect x="608" y="583" width="7" height="24" fill="url(#gml)"/>
<path d="M609.5 586.4V582.5M611.5 586.73V582.5M612.5 603.12V607.5M613.5 585.65V582.5M614.5 586.24V582.5" stroke="#000" stroke-opacity=".2" stroke-width="1" fill="none"/>
<path d="M622.5 581V607M624.5 582V608M625.5 582V609" stroke="#200020" stroke-width="1" fill="none"/>
<rect x="621" y="583" width="5" height="24" fill="url(#gml)"/>
<path d="M622.5 604.55V607.5M625.5 604.16V607.5" stroke="#000" stroke-opacity=".2" stroke-width="1" fill="none"/>
<path d="M634.5 581V607M636.5 579V608M637.5 583V608M638.5 582V609" stroke="#200020" stroke-width="1" fill="none"/>
<rect x="634" y="583" width="4.5" height="24" fill="url(#gml)"/>
<path d="M635.5 602.94V607.5M636.5 604.29V607.5M637.5 602.94V607.5" stroke="#000" stroke-opacity=".2" stroke-width="1" fill="none"/>
<path d="M640.5 579V609M644.5 581V608M645.5 582V609M647.5 581V608M648.5 581V608M649.5 582V608" stroke="#200020" stroke-width="1" fill="none"/>
<rect x="640" y="583" width="10" height="24" fill="url(#gml)"/>
<path d="M640.5 584.94V582.5M642.5 604.54V607.5M643.5 603.79V607.5M649.5 603.34V607.5" stroke="#000" stroke-opacity=".2" stroke-width="1" fill="none"/>
<path d="M652.5 582V608M653.5 582V608M654.5 582V607" stroke="#200020" stroke-width="1" fill="none"/>
<rect x="651.5" y="583" width="6" height="24" fill="url(#gml)"/>
<path d="M654.5 604.37V607.5M655.5 604.58V607.5M656.5 604.41V607.5" stroke="#000" stroke-opacity=".2" stroke-width="1" fill="none"/>
<path d="M660.5 581V609M661.5 582V611M665.5 581V609M667.5 583V608" stroke="#200020" stroke-width="1" fill="none"/>
<rect x="659" y="583" width="9" height="24" fill="url(#gml)"/>
<path d="M660.5 603.15V607.5M662.5 604.44V607.5M665.5 602.66V607.5M666.5 605.32V607.5M667.5 585.28V582.5" stroke="#000" stroke-opacity=".2" stroke-width="1" fill="none"/>
<path d="M670.5 583V608M672.5 581V608" stroke="#200020" stroke-width="1" fill="none"/>
<rect x="669" y="583" width="3.5" height="24" fill="url(#gml)"/>
<path d="M671.5 603.62V607.5M672.5 587.34V582.5" stroke="#000" stroke-opacity=".2" stroke-width="1" fill="none"/>
<path d="M674.5 582V607M675.5 583V607M676.5 582V608M678.5 583V607M679.5 583V609M680.5 578V608M681.5 582V609" stroke="#200020" stroke-width="1" fill="none"/>
<rect x="673.5" y="583" width="8.5" height="24" fill="url(#gml)"/>
<path d="M674.5 585.77V582.5M675.5 603V607.5M677.5 605.2V607.5M679.5 605.02V607.5" stroke="#000" stroke-opacity=".2" stroke-width="1" fill="none"/>
<path d="M684.5 583V607M685.5 581V609M686.5 582V608M688.5 581V608M689.5 582V608M690.5 582V608M693.5 582V609M694.5 581V608M695.5 581V609M698.5 582V609M701.5 579V608M702.5 582V609M705.5 582V608M706.5 581V609M707.5 581V608M710.5 582V608" stroke="#200020" stroke-width="1" fill="none"/>
<rect x="684" y="583" width="30" height="24" fill="url(#gml)"/>
<path d="M684.5 586.13V582.5M686.5 585.78V582.5M687.5 586.58V582.5M688.5 602.75V607.5M690.5 603.87V607.5M691.5 604.49V607.5M693.5 602.98V607.5M694.5 584.95V582.5M696.5 587.13V582.5M698.5 585.24V582.5M701.5 586.75V582.5M703.5 604.42V607.5M704.5 586.64V582.5M705.5 587.12V582.5M711.5 603.38V607.5" stroke="#000" stroke-opacity=".2" stroke-width="1" fill="none"/>
<path d="M719.5 581V607M720.5 582V607M725.5 582V608M726.5 581V609M727.5 582V608M728.5 581V607M729.5 581V608M730.5 582V609M731.5 582V608M732.5 581V608M734.5 581V609M735.5 582V611" stroke="#200020" stroke-width="1" fill="none"/>
<rect x="719" y="583" width="16.5" height="24" fill="url(#gml)"/>
<path d="M721.5 602.77V607.5M722.5 603.33V607.5M723.5 604.23V607.5M724.5 604.07V607.5M725.5 605.19V607.5M728.5 603.44V607.5M729.5 603.9V607.5M730.5 586.19V582.5M733.5 604.81V607.5" stroke="#000" stroke-opacity=".2" stroke-width="1" fill="none"/>
<path d="M737.5 582V609M739.5 583V609M740.5 581V608M741.5 583V607M742.5 583V608" stroke="#200020" stroke-width="1" fill="none"/>
<rect x="737" y="583" width="8.5" height="24" fill="url(#gml)"/>
<path d="M737.5 586.89V582.5M738.5 605.36V607.5M739.5 585.84V582.5M741.5 605.27V607.5M742.5 603.71V607.5M745.5 586.99V582.5" stroke="#000" stroke-opacity=".2" stroke-width="1" fill="none"/>
<path d="M747.5 582V610M749.5 581V609M753.5 583V608M756.5 581V608M758.5 582V608" stroke="#200020" stroke-width="1" fill="none"/>
<rect x="747" y="583" width="13.5" height="24" fill="url(#gml)"/>
<path d="M747.5 604.28V607.5M748.5 604.16V607.5M749.5 604.82V607.5M750.5 603.08V607.5M751.5 603.67V607.5M754.5 602.66V607.5M756.5 586.82V582.5M758.5 586.94V582.5M760.5 587.38V582.5" stroke="#000" stroke-opacity=".2" stroke-width="1" fill="none"/>
<path d="M762.5 582V608M767.5 583V607M771.5 583V607M772.5 581V608" stroke="#200020" stroke-width="1" fill="none"/>
<rect x="762.5" y="583" width="10.5" height="24" fill="url(#gml)"/>
<path d="M765.5 604.72V607.5M767.5 586V582.5M770.5 603.7V607.5M772.5 603.86V607.5" stroke="#000" stroke-opacity=".2" stroke-width="1" fill="none"/>
<path d="M776.5 583V608M778.5 582V608" stroke="#200020" stroke-width="1" fill="none"/>
<rect x="776.5" y="583" width="3.5" height="24" fill="url(#gml)"/>
<path d="M778.5 603.35V607.5M779.5 604.31V607.5" stroke="#000" stroke-opacity=".2" stroke-width="1" fill="none"/>
<path d="M785.5 582V611M786.5 581V609M789.5 582V608M790.5 582V609M791.5 582V609M793.5 583V608M795.5 582V608" stroke="#200020" stroke-width="1" fill="none"/>
<rect x="782" y="583" width="14" height="24" fill="url(#gml)"/>
<path d="M783.5 586.81V582.5M784.5 586.24V582.5M785.5 584.88V582.5M787.5 586.17V582.5M789.5 586.25V582.5M790.5 585.32V582.5M791.5 587.44V582.5M792.5 586.93V582.5M795.5 602.61V607.5" stroke="#000" stroke-opacity=".2" stroke-width="1" fill="none"/>
<path d="M798.5 583V608M803.5 581V609M805.5 582V608M807.5 581V608M811.5 582V611M812.5 583V608M814.5 582V607M816.5 583V613M817.5 581V608M820.5 581V609M822.5 581V609M824.5 583V607M828.5 581V609M829.5 581V608" stroke="#200020" stroke-width="1" fill="none"/>
<rect x="797.5" y="583" width="33.5" height="24" fill="url(#gml)"/>
<path d="M798.5 586.07V582.5M799.5 603.53V607.5M801.5 587.28V582.5M804.5 585.18V582.5M805.5 586.4V582.5M809.5 605.45V607.5M815.5 604.49V607.5M816.5 585.66V582.5M818.5 584.55V582.5M819.5 585.05V582.5M820.5 586.75V582.5M822.5 584.53V582.5M823.5 587.23V582.5M824.5 585.27V582.5M827.5 585.58V582.5M829.5 587.17V582.5" stroke="#000" stroke-opacity=".2" stroke-width="1" fill="none"/>
<path d="M833.5 582V607M834.5 579V608M835.5 581V609" stroke="#200020" stroke-width="1" fill="none"/>
<rect x="833" y="583" width="4" height="24" fill="url(#gml)"/>
<path d="M834.5 584.93V582.5M836.5 586.47V582.5" stroke="#000" stroke-opacity=".2" stroke-width="1" fill="none"/>
<path d="M839.5 581V609M840.5 582V608M842.5 582V608" stroke="#200020" stroke-width="1" fill="none"/>
<rect x="838.2" y="583" width="4.8" height="24" fill="url(#gml)"/>
<path d="M840.5 586.85V582.5M841.5 585.32V582.5" stroke="#000" stroke-opacity=".2" stroke-width="1" fill="none"/>
<path d="M368.5 582V609M374.5 582V609M378.5 582V609M380.5 582V609M382.5 582V609M385.5 582V609M394.5 582V609M419.5 582V609M430.5 582V609M451.5 582V609M464.5 582V609M481.5 582V609M484.5 582V609M499.5 582V609M501.5 582V609M502.5 582V609M509.5 582V609M515.5 582V609M526.5 582V609M530.5 582V609M540.5 582V609M556.5 582V609M567.5 582V609M574.5 582V609M579.5 582V609M580.5 582V609M594.5 582V609M604.5 582V609M607.5 582V609M612.5 582V609M615.5 582V609M618.5 582V609M620.5 582V609M625.5 582V609M629.5 582V609M631.5 582V609M633.5 582V609M639.5 582V609M644.5 582V609M651.5 582V609M658.5 582V609M668.5 582V609M672.5 582V609M682.5 582V609M684.5 582V609M698.5 582V609M711.5 582V609M736.5 582V609M737.5 582V609M746.5 582V609M747.5 582V609M754.5 582V609M757.5 582V609M761.5 582V609M762.5 582V609M767.5 582V609M770.5 582V609M774.5 582V609M776.5 582V609M780.5 582V609M782.5 582V609M793.5 582V609M796.5 582V609M813.5 582V609M832.5 582V609M837.5 582V609M842.5 582V609" stroke="#000" stroke-opacity=".55" stroke-width="1.1" fill="none"/>
<path d="M346.5 471.5V502.5M349.5 472.5V501.5M350.5 471.5V502.5M351.5 467.5V500.5M352.5 470.5V502.5M353.5 470.5V500.5" stroke="#200020" stroke-width="1" fill="none"/>
<rect x="345.7" y="472.5" width="10.3" height="28" fill="url(#gmh2)"/>
<path d="M346.5 497.31V501M347.5 477.76V472M350.5 474.82V472M351.5 495.75V501M355.5 498.2V501" stroke="#000" stroke-opacity=".2" stroke-width="1" fill="none"/>
<path d="M358.5 470.5V501.5M359.5 472.5V504.5M361.5 471.5V502.5" stroke="#200020" stroke-width="1" fill="none"/>
<rect x="358" y="472.5" width="4" height="28" fill="url(#gmh2)"/>
<path d="M358.5 498.46V501" stroke="#000" stroke-opacity=".2" stroke-width="1" fill="none"/>
<path d="M398.5 470.5V500.5M399.5 471.5V505.5M400.5 471.5V501.5M401.5 472.5V501.5M402.5 472.5V505.5M403.5 471.5V502.5M405.5 472.5V500.5M408.5 470.5V501.5" stroke="#200020" stroke-width="1" fill="none"/>
<rect x="398" y="472.5" width="10.5" height="28" fill="url(#gmh2)"/>
<path d="M399.5 476.12V472M400.5 498.39V501M403.5 495.46V501M404.5 498.47V501M406.5 495.29V501M407.5 476.9V472M408.5 496.09V501" stroke="#000" stroke-opacity=".2" stroke-width="1" fill="none"/>
<path d="M717.5 472.5V500.5M718.5 471.5V501.5" stroke="#200020" stroke-width="1" fill="none"/>
<rect x="714" y="472.5" width="5" height="28" fill="url(#gmh2)"/>
<path d="M714.5 498.41V501M716.5 497.01V501M717.5 476.8V472M718.5 496.67V501" stroke="#000" stroke-opacity=".2" stroke-width="1" fill="none"/>
<rect x="358" y="498" width="4" height="8" fill="#780078"/>
<rect x="405" y="498" width="3.5" height="8" fill="#600060"/>
<path d="M21 30h1M21 43h1M21 56h1M21 69h1M21 95h1M21 108h1M21 121h1M21 134h1M21 160h1M21 173h1M21 186h1M21 199h1M21 225h1M21 238h1M21 251h1M21 264h1M21 290h1M21 303h1M21 316h1M21 329h1M21 336h1M21 338h1M21 340h1M21 342h1M21 344h1M21 346h1M21 348h1M21 355h1M21 368h1M21 381h1M21 394h1M21 420h1M21 433h1M21 446h1M21 459h1M21 485h1M21 498h1M21 511h1M21 524h1M21 550h1M21 563h1M21 576h1M21 589h1M21 615h1M21 628h1M21 641h1M21 654h1M22 82h1M22 147h1M22 212h1M22 277h1M22 342h1M22 407h1M22 472h1M22 537h1M22 602h1M23 30h1M23 43h1M23 56h1M23 69h1M23 95h1M23 108h1M23 121h1M23 134h1M23 160h1M23 173h1M23 186h1M23 199h1M23 225h1M23 238h1M23 251h1M23 264h1M23 290h1M23 303h1M23 316h1M23 329h1M23 342h1M23 355h1M23 368h1M23 381h1M23 394h1M23 420h1M23 433h1M23 446h1M23 459h1M23 485h1M23 498h1M23 511h1M23 524h1M23 550h1M23 563h1M23 576h1M23 589h1M23 615h1M23 628h1M23 641h1M23 654h1M24 82h1M24 147h1M24 212h1M24 277h1M24 342h1M24 407h1M24 472h1M24 537h1M24 602h1M25 342h1M26 82h1M26 147h1M26 212h1M26 277h1M26 342h1M26 407h1M26 472h1M26 537h1M26 602h1M27 342h1M29 342h1M31 342h1M33 342h1M35 342h1M37 342h1M39 342h1M41 17h1M41 19h1M41 82h1M41 147h1M41 212h1M41 277h1M41 339h1M41 341h1M41 342h1M41 343h1M41 345h1M41 407h1M41 472h1M41 537h1M41 602h1M41 665h1M41 667h1M43 342h1M45 342h1M47 342h1M49 342h1M51 342h1M53 342h1M55 342h1M57 342h1M59 342h1M61 17h1M61 19h1M61 82h1M61 147h1M61 212h1M61 277h1M61 339h1M61 341h1M61 342h1M61 343h1M61 345h1M61 407h1M61 472h1M61 537h1M61 602h1M61 665h1M61 667h1M63 342h1M65 342h1M67 342h1M69 342h1M71 342h1M73 342h1M75 342h1M77 342h1M79 342h1M81 17h1M81 19h1M81 82h1M81 147h1M81 212h1M81 277h1M81 339h1M81 341h1M81 342h1M81 343h1M81 345h1M81 407h1M81 472h1M81 537h1M81 602h1M81 665h1M81 667h1M83 342h1M85 342h1M87 342h1M89 342h1M91 342h1M93 342h1M95 342h1M97 342h1M99 342h1M101 17h1M101 19h1M101 82h1M101 147h1M101 212h1M101 277h1M101 339h1M101 341h1M101 342h1M101 343h1M101 345h1M101 407h1M101 472h1M101 537h1M101 602h1M101 665h1M101 667h1M103 342h1M105 342h1M107 342h1M109 342h1M111 342h1M113 342h1M115 342h1M117 342h1M119 342h1M121 18h1M121 20h1M121 22h1M121 30h1M121 43h1M121 56h1M121 69h1M121 82h1M121 95h1M121 108h1M121 121h1M121 134h1M121 147h1M121 160h1M121 173h1M121 186h1M121 199h1M121 212h1M121 225h1M121 238h1M121 251h1M121 264h1M121 277h1M121 290h1M121 303h1M121 316h1M121 329h1M121 336h1M121 338h1M121 340h1M121 342h1M121 344h1M121 346h1M121 348h1M121 355h1M121 368h1M121 381h1M121 394h1M121 407h1M121 420h1M121 433h1M121 446h1M121 459h1M121 472h1M121 485h1M121 498h1M121 511h1M121 524h1M121 537h1M121 550h1M121 563h1M121 576h1M121 589h1M121 602h1M121 615h1M121 628h1M121 641h1M121 654h1M121 662h1M121 664h1M121 666h1M123 342h1M125 342h1M127 342h1M129 342h1M131 342h1M133 342h1M135 342h1M137 342h1M139 342h1M141 17h1M141 19h1M141 82h1M141 147h1M141 212h1M141 277h1M141 339h1M141 341h1M141 342h1M141 343h1M141 345h1M141 407h1M141 472h1M141 537h1M141 602h1M141 665h1M141 667h1M143 342h1M145 342h1M147 342h1M149 342h1M151 342h1M153 342h1M155 342h1M157 342h1M159 342h1M161 17h1M161 19h1M161 82h1M161 147h1M161 212h1M161 277h1M161 339h1M161 341h1M161 342h1M161 343h1M161 345h1M161 407h1M161 472h1M161 537h1M161 602h1M161 665h1M161 667h1M163 342h1M165 342h1M167 342h1M169 342h1M171 342h1M173 342h1M175 342h1M177 342h1M179 342h1M181 17h1M181 19h1M181 82h1M181 147h1M181 212h1M181 277h1M181 339h1M181 341h1M181 342h1M181 343h1M181 345h1M181 407h1M181 472h1M181 537h1M181 602h1M181 665h1M181 667h1M183 342h1M185 342h1M187 342h1M189 342h1M191 342h1M193 342h1M195 342h1M197 342h1M199 342h1M201 17h1M201 19h1M201 82h1M201 147h1M201 212h1M201 277h1M201 339h1M201 341h1M201 342h1M201 343h1M201 345h1M201 407h1M201 472h1M201 537h1M201 602h1M201 665h1M201 667h1M203 342h1M205 342h1M207 342h1M209 342h1M211 342h1M213 342h1M215 342h1M217 342h1M219 342h1M221 18h1M221 20h1M221 22h1M221 30h1M221 43h1M221 56h1M221 69h1M221 82h1M221 95h1M221 108h1M221 121h1M221 134h1M221 147h1M221 160h1M221 173h1M221 186h1M221 199h1M221 212h1M221 225h1M221 238h1M221 251h1M221 264h1M221 277h1M221 290h1M221 303h1M221 316h1M221 329h1M221 336h1M221 338h1M221 340h1M221 342h1M221 344h1M221 346h1M221 348h1M221 355h1M221 368h1M221 381h1M221 394h1M221 407h1M221 420h1M221 433h1M221 446h1M221 459h1M221 472h1M221 485h1M221 498h1M221 511h1M221 524h1M221 537h1M221 550h1M221 563h1M221 576h1M221 589h1M221 602h1M221 615h1M221 628h1M221 641h1M221 654h1M221 662h1M221 664h1M221 666h1M223 342h1M225 342h1M227 342h1M229 342h1M231 342h1M233 342h1M235 342h1M237 342h1M239 342h1M241 17h1M241 19h1M241 82h1M241 147h1M241 212h1M241 277h1M241 339h1M241 341h1M241 342h1M241 343h1M241 345h1M241 407h1M241 472h1M241 537h1M241 602h1M241 665h1M241 667h1M243 342h1M245 342h1M247 342h1M249 342h1M251 342h1M253 342h1M255 342h1M257 342h1M259 342h1M261 17h1M261 19h1M261 82h1M261 147h1M261 212h1M261 277h1M261 339h1M261 341h1M261 342h1M261 343h1M261 345h1M261 407h1M261 472h1M261 537h1M261 602h1M261 665h1M261 667h1M263 342h1M265 342h1M267 342h1M269 342h1M271 342h1M273 342h1M275 342h1M277 342h1M279 342h1M281 17h1M281 19h1M281 82h1M281 147h1M281 212h1M281 277h1M281 339h1M281 341h1M281 342h1M281 343h1M281 345h1M281 407h1M281 472h1M281 537h1M281 602h1M281 665h1M281 667h1M283 342h1M285 342h1M287 342h1M289 342h1M291 342h1M293 342h1M295 342h1M297 342h1M299 342h1M301 17h1M301 19h1M301 82h1M301 147h1M301 212h1M301 277h1M301 339h1M301 341h1M301 342h1M301 343h1M301 345h1M301 407h1M301 472h1M301 537h1M301 602h1M301 665h1M301 667h1M303 342h1M305 342h1M307 342h1M309 342h1M311 342h1M313 342h1M315 342h1M317 342h1M319 342h1M321 18h1M321 20h1M321 22h1M321 30h1M321 43h1M321 56h1M321 69h1M321 82h1M321 95h1M321 108h1M321 121h1M321 134h1M321 147h1M321 160h1M321 173h1M321 186h1M321 199h1M321 212h1M321 225h1M321 238h1M321 251h1M321 264h1M321 277h1M321 290h1M321 303h1M321 316h1M321 329h1M321 336h1M321 338h1M321 340h1M321 342h1M321 344h1M321 346h1M321 348h1M321 355h1M321 368h1M321 381h1M321 394h1M321 407h1M321 420h1M321 433h1M321 446h1M321 459h1M321 472h1M321 485h1M321 498h1M321 511h1M321 524h1M321 537h1M321 550h1M321 563h1M321 576h1M321 589h1M321 602h1M321 615h1M321 628h1M321 641h1M321 654h1M321 662h1M321 664h1M321 666h1M323 342h1M325 342h1M327 342h1M329 342h1M331 342h1M333 342h1M335 342h1M337 342h1M339 342h1M341 17h1M341 19h1M341 82h1M341 147h1M341 212h1M341 277h1M341 339h1M341 341h1M341 342h1M341 343h1M341 345h1M341 407h1M341 472h1M341 537h1M341 602h1M341 665h1M341 667h1M343 342h1M345 342h1M347 342h1M349 342h1M351 342h1M353 342h1M355 342h1M357 342h1M359 342h1M361 17h1M361 19h1M361 82h1M361 147h1M361 212h1M361 277h1M361 339h1M361 341h1M361 342h1M361 343h1M361 345h1M361 407h1M361 472h1M361 537h1M361 602h1M361 665h1M361 667h1M363 342h1M365 342h1M367 342h1M369 342h1M371 342h1M373 342h1M375 342h1M377 342h1M379 342h1M381 17h1M381 19h1M381 82h1M381 147h1M381 212h1M381 277h1M381 339h1M381 341h1M381 342h1M381 343h1M381 345h1M381 407h1M381 472h1M381 537h1M381 602h1M381 665h1M381 667h1M383 342h1M385 342h1M387 342h1M389 342h1M391 342h1M393 342h1M395 342h1M397 342h1M399 342h1M401 17h1M401 19h1M401 82h1M401 147h1M401 212h1M401 277h1M401 339h1M401 341h1M401 342h1M401 343h1M401 345h1M401 407h1M401 472h1M401 537h1M401 602h1M401 665h1M401 667h1M403 342h1M405 342h1M407 342h1M409 342h1M411 342h1M413 342h1M415 342h1M417 342h1M419 342h1M421 18h1M421 20h1M421 22h1M421 30h1M421 43h1M421 56h1M421 69h1M421 82h1M421 95h1M421 108h1M421 121h1M421 134h1M421 147h1M421 160h1M421 173h1M421 186h1M421 199h1M421 212h1M421 225h1M421 238h1M421 251h1M421 264h1M421 277h1M421 290h1M421 303h1M421 316h1M421 329h1M421 336h1M421 338h1M421 340h1M421 342h1M421 344h1M421 346h1M421 348h1M421 355h1M421 368h1M421 381h1M421 394h1M421 407h1M421 420h1M421 433h1M421 446h1M421 459h1M421 472h1M421 485h1M421 498h1M421 511h1M421 524h1M421 537h1M421 550h1M421 563h1M421 576h1M421 589h1M421 602h1M421 615h1M421 628h1M421 641h1M421 654h1M421 662h1M421 664h1M421 666h1M423 342h1M425 342h1M427 342h1M429 342h1M431 342h1M433 342h1M435 342h1M437 342h1M439 342h1M441 17h1M441 19h1M441 82h1M441 147h1M441 212h1M441 277h1M441 339h1M441 341h1M441 342h1M441 343h1M441 345h1M441 407h1M441 472h1M441 537h1M441 602h1M441 665h1M441 667h1M443 342h1M445 342h1M447 342h1M449 342h1M451 342h1M453 342h1M455 342h1M457 342h1M459 342h1M461 17h1M461 19h1M461 82h1M461 147h1M461 212h1M461 277h1M461 339h1M461 341h1M461 342h1M461 343h1M461 345h1M461 407h1M461 472h1M461 537h1M461 602h1M461 665h1M461 667h1M463 342h1M465 342h1M467 342h1M469 342h1M471 342h1M473 342h1M475 342h1M477 342h1M479 342h1M481 17h1M481 19h1M481 82h1M481 147h1M481 212h1M481 277h1M481 339h1M481 341h1M481 342h1M481 343h1M481 345h1M481 407h1M481 472h1M481 537h1M481 602h1M481 665h1M481 667h1M483 342h1M485 342h1M487 342h1M489 342h1M491 342h1M493 342h1M495 342h1M497 342h1M499 342h1M501 17h1M501 19h1M501 82h1M501 147h1M501 212h1M501 277h1M501 339h1M501 341h1M501 342h1M501 343h1M501 345h1M501 407h1M501 472h1M501 537h1M501 602h1M501 665h1M501 667h1M503 342h1M505 342h1M507 342h1M509 342h1M511 342h1M513 342h1M515 17h1M515 82h1M515 147h1M515 212h1M515 277h1M515 342h1M515 407h1M515 472h1M515 537h1M515 602h1M517 17h1M517 82h1M517 147h1M517 212h1M517 277h1M517 342h1M517 407h1M517 472h1M517 537h1M517 602h1M518 30h1M518 43h1M518 56h1M518 69h1M518 95h1M518 108h1M518 121h1M518 134h1M518 160h1M518 173h1M518 186h1M518 199h1M518 225h1M518 238h1M518 251h1M518 264h1M518 290h1M518 303h1M518 316h1M518 329h1M518 355h1M518 368h1M518 381h1M518 394h1M518 420h1M518 433h1M518 446h1M518 459h1M518 485h1M518 498h1M518 511h1M518 524h1M518 550h1M518 563h1M518 576h1M518 589h1M518 615h1M518 628h1M518 641h1M518 654h1M519 17h1M519 82h1M519 147h1M519 212h1M519 277h1M519 342h1M519 407h1M519 472h1M519 537h1M519 602h1M520 30h1M520 43h1M520 56h1M520 69h1M520 95h1M520 108h1M520 121h1M520 134h1M520 160h1M520 173h1M520 186h1M520 199h1M520 225h1M520 238h1M520 251h1M520 264h1M520 290h1M520 303h1M520 316h1M520 329h1M520 355h1M520 368h1M520 381h1M520 394h1M520 420h1M520 433h1M520 446h1M520 459h1M520 485h1M520 498h1M520 511h1M520 524h1M520 550h1M520 563h1M520 576h1M520 589h1M520 615h1M520 628h1M520 641h1M520 654h1M521 17h1M521 18h1M521 19h1M521 20h1M521 21h1M521 22h1M521 23h1M521 26h1M521 28h1M521 30h1M521 32h1M521 34h1M521 36h1M521 39h1M521 41h1M521 43h1M521 45h1M521 47h1M521 49h1M521 52h1M521 54h1M521 56h1M521 58h1M521 60h1M521 62h1M521 65h1M521 67h1M521 69h1M521 71h1M521 73h1M521 75h1M521 78h1M521 80h1M521 82h1M521 84h1M521 86h1M521 88h1M521 91h1M521 93h1M521 95h1M521 97h1M521 99h1M521 101h1M521 104h1M521 106h1M521 108h1M521 110h1M521 112h1M521 114h1M521 117h1M521 119h1M521 121h1M521 123h1M521 125h1M521 127h1M521 130h1M521 132h1M521 134h1M521 136h1M521 138h1M521 140h1M521 143h1M521 145h1M521 147h1M521 149h1M521 151h1M521 153h1M521 156h1M521 158h1M521 160h1M521 162h1M521 164h1M521 166h1M521 169h1M521 171h1M521 173h1M521 175h1M521 177h1M521 179h1M521 182h1M521 184h1M521 186h1M521 188h1M521 190h1M521 192h1M521 195h1M521 197h1M521 199h1M521 201h1M521 203h1M521 205h1M521 208h1M521 210h1M521 212h1M521 214h1M521 216h1M521 218h1M521 221h1M521 223h1M521 225h1M521 227h1M521 229h1M521 231h1M521 234h1M521 236h1M521 238h1M521 240h1M521 242h1M521 244h1M521 247h1M521 249h1M521 251h1M521 253h1M521 255h1M521 257h1M521 260h1M521 262h1M521 264h1M521 266h1M521 268h1M521 270h1M521 273h1M521 275h1M521 277h1M521 279h1M521 281h1M521 283h1M521 286h1M521 288h1M521 290h1M521 292h1M521 294h1M521 296h1M521 299h1M521 301h1M521 303h1M521 305h1M521 307h1M521 309h1M521 312h1M521 314h1M521 316h1M521 318h1M521 320h1M521 322h1M521 325h1M521 327h1M521 329h1M521 331h1M521 333h1M521 335h1M521 336h1M521 338h1M521 340h1M521 342h1M521 344h1M521 346h1M521 348h1M521 351h1M521 353h1M521 355h1M521 357h1M521 359h1M521 361h1M521 364h1M521 366h1M521 368h1M521 370h1M521 372h1M521 374h1M521 377h1M521 379h1M521 381h1M521 383h1M521 385h1M521 387h1M521 390h1M521 392h1M521 394h1M521 396h1M521 398h1M521 400h1M521 403h1M521 405h1M521 407h1M521 409h1M521 411h1M521 413h1M521 416h1M521 418h1M521 420h1M521 422h1M521 424h1M521 426h1M521 429h1M521 431h1M521 433h1M521 435h1M521 437h1M521 439h1M521 442h1M521 444h1M521 446h1M521 448h1M521 450h1M521 452h1M521 455h1M521 457h1M521 459h1M521 461h1M521 463h1M521 465h1M521 468h1M521 470h1M521 472h1M521 474h1M521 476h1M521 478h1M521 481h1M521 483h1M521 485h1M521 487h1M521 489h1M521 491h1M521 494h1M521 496h1M521 498h1M521 500h1M521 502h1M521 504h1M521 507h1M521 509h1M521 511h1M521 513h1M521 515h1M521 517h1M521 520h1M521 522h1M521 524h1M521 526h1M521 528h1M521 530h1M521 533h1M521 535h1M521 537h1M521 539h1M521 541h1M521 543h1M521 546h1M521 548h1M521 550h1M521 552h1M521 554h1M521 556h1M521 559h1M521 561h1M521 563h1M521 565h1M521 567h1M521 569h1M521 572h1M521 574h1M521 576h1M521 578h1M521 580h1M521 582h1M521 585h1M521 587h1M521 589h1M521 591h1M521 593h1M521 595h1M521 598h1M521 600h1M521 602h1M521 604h1M521 606h1M521 608h1M521 611h1M521 613h1M521 615h1M521 617h1M521 619h1M521 621h1M521 624h1M521 626h1M521 628h1M521 630h1M521 632h1M521 634h1M521 637h1M521 639h1M521 641h1M521 643h1M521 645h1M521 647h1M521 650h1M521 652h1M521 654h1M521 656h1M521 658h1M521 660h1M521 662h1M521 663h1M521 664h1M521 665h1M521 666h1M522 30h1M522 43h1M522 56h1M522 69h1M522 95h1M522 108h1M522 121h1M522 134h1M522 160h1M522 173h1M522 186h1M522 199h1M522 225h1M522 238h1M522 251h1M522 264h1M522 290h1M522 303h1M522 316h1M522 329h1M522 355h1M522 368h1M522 381h1M522 394h1M522 420h1M522 433h1M522 446h1M522 459h1M522 485h1M522 498h1M522 511h1M522 524h1M522 550h1M522 563h1M522 576h1M522 589h1M522 615h1M522 628h1M522 641h1M522 654h1M523 17h1M523 82h1M523 147h1M523 212h1M523 277h1M523 342h1M523 407h1M523 472h1M523 537h1M523 602h1M524 30h1M524 43h1M524 56h1M524 69h1M524 95h1M524 108h1M524 121h1M524 134h1M524 160h1M524 173h1M524 186h1M524 199h1M524 225h1M524 238h1M524 251h1M524 264h1M524 290h1M524 303h1M524 316h1M524 329h1M524 355h1M524 368h1M524 381h1M524 394h1M524 420h1M524 433h1M524 446h1M524 459h1M524 485h1M524 498h1M524 511h1M524 524h1M524 550h1M524 563h1M524 576h1M524 589h1M524 615h1M524 628h1M524 641h1M524 654h1M525 17h1M525 82h1M525 147h1M525 212h1M525 277h1M525 342h1M525 407h1M525 472h1M525 537h1M525 602h1M527 17h1M527 82h1M527 147h1M527 212h1M527 277h1M527 342h1M527 407h1M527 472h1M527 537h1M527 602h1M529 342h1M531 342h1M533 342h1M535 342h1M537 342h1M539 342h1M541 17h1M541 19h1M541 82h1M541 147h1M541 212h1M541 277h1M541 339h1M541 341h1M541 342h1M541 343h1M541 345h1M541 407h1M541 472h1M541 537h1M541 602h1M541 665h1M541 667h1M543 342h1M545 342h1M547 342h1M549 342h1M551 342h1M553 342h1M555 342h1M557 342h1M559 342h1M561 17h1M561 19h1M561 82h1M561 147h1M561 212h1M561 277h1M561 339h1M561 341h1M561 342h1M561 343h1M561 345h1M561 407h1M561 472h1M561 537h1M561 602h1M561 665h1M561 667h1M563 342h1M565 342h1M567 342h1M569 342h1M571 342h1M573 342h1M575 342h1M577 342h1M579 342h1M581 17h1M581 19h1M581 82h1M581 147h1M581 212h1M581 277h1M581 339h1M581 341h1M581 342h1M581 343h1M581 345h1M581 407h1M581 472h1M581 537h1M581 602h1M581 665h1M581 667h1M583 342h1M585 342h1M587 342h1M589 342h1M591 342h1M593 342h1M595 342h1M597 342h1M599 342h1M601 17h1M601 19h1M601 82h1M601 147h1M601 212h1M601 277h1M601 339h1M601 341h1M601 342h1M601 343h1M601 345h1M601 407h1M601 472h1M601 537h1M601 602h1M601 665h1M601 667h1M603 342h1M605 342h1M607 342h1M609 342h1M611 342h1M613 342h1M615 342h1M617 342h1M619 342h1M621 18h1M621 20h1M621 22h1M621 30h1M621 43h1M621 56h1M621 69h1M621 82h1M621 95h1M621 108h1M621 121h1M621 134h1M621 147h1M621 160h1M621 173h1M621 186h1M621 199h1M621 212h1M621 225h1M621 238h1M621 251h1M621 264h1M621 277h1M621 290h1M621 303h1M621 316h1M621 329h1M621 336h1M621 338h1M621 340h1M621 342h1M621 344h1M621 346h1M621 348h1M621 355h1M621 368h1M621 381h1M621 394h1M621 407h1M621 420h1M621 433h1M621 446h1M621 459h1M621 472h1M621 485h1M621 498h1M621 511h1M621 524h1M621 537h1M621 550h1M621 563h1M621 576h1M621 589h1M621 602h1M621 615h1M621 628h1M621 641h1M621 654h1M621 662h1M621 664h1M621 666h1M623 342h1M625 342h1M627 342h1M629 342h1M631 342h1M633 342h1M635 342h1M637 342h1M639 342h1M641 17h1M641 19h1M641 82h1M641 147h1M641 212h1M641 277h1M641 339h1M641 341h1M641 342h1M641 343h1M641 345h1M641 407h1M641 472h1M641 537h1M641 602h1M641 665h1M641 667h1M643 342h1M645 342h1M647 342h1M649 342h1M651 342h1M653 342h1M655 342h1M657 342h1M659 342h1M661 17h1M661 19h1M661 82h1M661 147h1M661 212h1M661 277h1M661 339h1M661 341h1M661 342h1M661 343h1M661 345h1M661 407h1M661 472h1M661 537h1M661 602h1M661 665h1M661 667h1M663 342h1M665 342h1M667 342h1M669 342h1M671 342h1M673 342h1M675 342h1M677 342h1M679 342h1M681 17h1M681 19h1M681 82h1M681 147h1M681 212h1M681 277h1M681 339h1M681 341h1M681 342h1M681 343h1M681 345h1M681 407h1M681 472h1M681 537h1M681 602h1M681 665h1M681 667h1M683 342h1M685 342h1M687 342h1M689 342h1M691 342h1M693 342h1M695 342h1M697 342h1M699 342h1M701 17h1M701 19h1M701 82h1M701 147h1M701 212h1M701 277h1M701 339h1M701 341h1M701 342h1M701 343h1M701 345h1M701 407h1M701 472h1M701 537h1M701 602h1M701 665h1M701 667h1M703 342h1M705 342h1M707 342h1M709 342h1M711 342h1M713 342h1M715 342h1M717 342h1M719 342h1M721 18h1M721 20h1M721 22h1M721 30h1M721 43h1M721 56h1M721 69h1M721 82h1M721 95h1M721 108h1M721 121h1M721 134h1M721 147h1M721 160h1M721 173h1M721 186h1M721 199h1M721 212h1M721 225h1M721 238h1M721 251h1M721 264h1M721 277h1M721 290h1M721 303h1M721 316h1M721 329h1M721 336h1M721 338h1M721 340h1M721 342h1M721 344h1M721 346h1M721 348h1M721 355h1M721 368h1M721 381h1M721 394h1M721 407h1M721 420h1M721 433h1M721 446h1M721 459h1M721 472h1M721 485h1M721 498h1M721 511h1M721 524h1M721 537h1M721 550h1M721 563h1M721 576h1M721 589h1M721 602h1M721 615h1M721 628h1M721 641h1M721 654h1M721 662h1M721 664h1M721 666h1M723 342h1M725 342h1M727 342h1M729 342h1M731 342h1M733 342h1M735 342h1M737 342h1M739 342h1M741 17h1M741 19h1M741 82h1M741 147h1M741 212h1M741 277h1M741 339h1M741 341h1M741 342h1M741 343h1M741 345h1M741 407h1M741 472h1M741 537h1M741 602h1M741 665h1M741 667h1M743 342h1M745 342h1M747 342h1M749 342h1M751 342h1M753 342h1M755 342h1M757 342h1M759 342h1M761 17h1M761 19h1M761 82h1M761 147h1M761 212h1M761 277h1M761 339h1M761 341h1M761 342h1M761 343h1M761 345h1M761 407h1M761 472h1M761 537h1M761 602h1M761 665h1M761 667h1M763 342h1M765 342h1M767 342h1M769 342h1M771 342h1M773 342h1M775 342h1M777 342h1M779 342h1M781 17h1M781 19h1M781 82h1M781 147h1M781 212h1M781 277h1M781 339h1M781 341h1M781 342h1M781 343h1M781 345h1M781 407h1M781 472h1M781 537h1M781 602h1M781 665h1M781 667h1M783 342h1M785 342h1M787 342h1M789 342h1M791 342h1M793 342h1M795 342h1M797 342h1M799 342h1M801 17h1M801 19h1M801 82h1M801 147h1M801 212h1M801 277h1M801 339h1M801 341h1M801 342h1M801 343h1M801 345h1M801 407h1M801 472h1M801 537h1M801 602h1M801 665h1M801 667h1M803 342h1M805 342h1M807 342h1M809 342h1M811 342h1M813 342h1M815 342h1M817 342h1M819 342h1M821 18h1M821 20h1M821 22h1M821 30h1M821 43h1M821 56h1M821 69h1M821 82h1M821 95h1M821 108h1M821 121h1M821 134h1M821 147h1M821 160h1M821 173h1M821 186h1M821 199h1M821 212h1M821 225h1M821 238h1M821 251h1M821 264h1M821 277h1M821 290h1M821 303h1M821 316h1M821 329h1M821 336h1M821 338h1M821 340h1M821 342h1M821 344h1M821 346h1M821 348h1M821 355h1M821 368h1M821 381h1M821 394h1M821 407h1M821 420h1M821 433h1M821 446h1M821 459h1M821 472h1M821 485h1M821 498h1M821 511h1M821 524h1M821 537h1M821 550h1M821 563h1M821 576h1M821 589h1M821 602h1M821 615h1M821 628h1M821 641h1M821 654h1M821 662h1M821 664h1M821 666h1M823 342h1M825 342h1M827 342h1M829 342h1M831 342h1M833 342h1M835 342h1M837 342h1M839 342h1M841 17h1M841 19h1M841 82h1M841 147h1M841 212h1M841 277h1M841 339h1M841 341h1M841 342h1M841 343h1M841 345h1M841 407h1M841 472h1M841 537h1M841 602h1M841 665h1M841 667h1M843 342h1M845 342h1M847 342h1M849 342h1M851 342h1M853 342h1M855 342h1M857 342h1M859 342h1M861 17h1M861 19h1M861 82h1M861 147h1M861 212h1M861 277h1M861 339h1M861 341h1M861 342h1M861 343h1M861 345h1M861 407h1M861 472h1M861 537h1M861 602h1M861 665h1M861 667h1M863 342h1M865 342h1M867 342h1M869 342h1M871 342h1M873 342h1M875 342h1M877 342h1M879 342h1M881 17h1M881 19h1M881 82h1M881 147h1M881 212h1M881 277h1M881 339h1M881 341h1M881 342h1M881 343h1M881 345h1M881 407h1M881 472h1M881 537h1M881 602h1M881 665h1M881 667h1M883 342h1M885 342h1M887 342h1M889 342h1M891 342h1M893 342h1M895 342h1M897 342h1M899 342h1M901 17h1M901 19h1M901 82h1M901 147h1M901 212h1M901 277h1M901 339h1M901 341h1M901 342h1M901 343h1M901 345h1M901 407h1M901 472h1M901 537h1M901 602h1M901 665h1M901 667h1M903 342h1M905 342h1M907 342h1M909 342h1M911 342h1M913 342h1M915 342h1M917 342h1M919 342h1M921 18h1M921 20h1M921 22h1M921 30h1M921 43h1M921 56h1M921 69h1M921 82h1M921 95h1M921 108h1M921 121h1M921 134h1M921 147h1M921 160h1M921 173h1M921 186h1M921 199h1M921 212h1M921 225h1M921 238h1M921 251h1M921 264h1M921 277h1M921 290h1M921 303h1M921 316h1M921 329h1M921 336h1M921 338h1M921 340h1M921 342h1M921 344h1M921 346h1M921 348h1M921 355h1M921 368h1M921 381h1M921 394h1M921 407h1M921 420h1M921 433h1M921 446h1M921 459h1M921 472h1M921 485h1M921 498h1M921 511h1M921 524h1M921 537h1M921 550h1M921 563h1M921 576h1M921 589h1M921 602h1M921 615h1M921 628h1M921 641h1M921 654h1M921 662h1M921 664h1M921 666h1M923 342h1M925 342h1M927 342h1M929 342h1M931 342h1M933 342h1M935 342h1M937 342h1M939 342h1M941 17h1M941 19h1M941 82h1M941 147h1M941 212h1M941 277h1M941 339h1M941 341h1M941 342h1M941 343h1M941 345h1M941 407h1M941 472h1M941 537h1M941 602h1M941 665h1M941 667h1M943 342h1M945 342h1M947 342h1M949 342h1M951 342h1M953 342h1M955 342h1M957 342h1M959 342h1M961 17h1M961 19h1M961 82h1M961 147h1M961 212h1M961 277h1M961 339h1M961 341h1M961 342h1M961 343h1M961 345h1M961 407h1M961 472h1M961 537h1M961 602h1M961 665h1M961 667h1M963 342h1M965 342h1M967 342h1M969 342h1M971 342h1M973 342h1M975 342h1M977 342h1M979 342h1M981 17h1M981 19h1M981 82h1M981 147h1M981 212h1M981 277h1M981 339h1M981 341h1M981 342h1M981 343h1M981 345h1M981 407h1M981 472h1M981 537h1M981 602h1M981 665h1M981 667h1M983 342h1M985 342h1M987 342h1M989 342h1M991 342h1M993 342h1M995 342h1M997 342h1M999 342h1M1001 17h1M1001 19h1M1001 82h1M1001 147h1M1001 212h1M1001 277h1M1001 339h1M1001 341h1M1001 342h1M1001 343h1M1001 345h1M1001 407h1M1001 472h1M1001 537h1M1001 602h1M1001 665h1M1001 667h1M1003 342h1M1005 342h1M1007 342h1M1009 342h1M1011 342h1M1013 342h1M1015 82h1M1015 147h1M1015 212h1M1015 277h1M1015 342h1M1015 407h1M1015 472h1M1015 537h1M1015 602h1M1017 82h1M1017 147h1M1017 212h1M1017 277h1M1017 342h1M1017 407h1M1017 472h1M1017 537h1M1017 602h1M1018 30h1M1018 43h1M1018 56h1M1018 69h1M1018 95h1M1018 108h1M1018 121h1M1018 134h1M1018 160h1M1018 173h1M1018 186h1M1018 199h1M1018 225h1M1018 238h1M1018 251h1M1018 264h1M1018 290h1M1018 303h1M1018 316h1M1018 329h1M1018 355h1M1018 368h1M1018 381h1M1018 394h1M1018 420h1M1018 433h1M1018 446h1M1018 459h1M1018 485h1M1018 498h1M1018 511h1M1018 524h1M1018 550h1M1018 563h1M1018 576h1M1018 589h1M1018 615h1M1018 628h1M1018 641h1M1018 654h1M1019 82h1M1019 147h1M1019 212h1M1019 277h1M1019 342h1M1019 407h1M1019 472h1M1019 537h1M1019 602h1M1020 30h1M1020 43h1M1020 56h1M1020 69h1M1020 95h1M1020 108h1M1020 121h1M1020 134h1M1020 160h1M1020 173h1M1020 186h1M1020 199h1M1020 225h1M1020 238h1M1020 251h1M1020 264h1M1020 290h1M1020 303h1M1020 316h1M1020 329h1M1020 336h1M1020 338h1M1020 340h1M1020 342h1M1020 344h1M1020 346h1M1020 348h1M1020 355h1M1020 368h1M1020 381h1M1020 394h1M1020 420h1M1020 433h1M1020 446h1M1020 459h1M1020 485h1M1020 498h1M1020 511h1M1020 524h1M1020 550h1M1020 563h1M1020 576h1M1020 589h1M1020 615h1M1020 628h1M1020 641h1M1020 654h1" stroke="#b4aa8a" stroke-width="1" transform="translate(0,.5)" fill="none" shape-rendering="crispEdges"/>
</g>
<path d="M283 7.5H761" stroke="#ffff00" stroke-width="1.3"/>
<path d="M284 1.5H282V14.5H284M760 1.5H762V14.5H760" stroke="#a09a9c" stroke-width="1" fill="none"/>
<rect x="281" y="1" width="2" height="14" fill="#a09a9c"/><rect x="761" y="1" width="2" height="14" fill="#a09a9c"/>
<rect x="421" y="5" width="8.4" height="11" rx="2" fill="#ff9c00"/>
<path d="M422.6 6.8H427.8M425.2 6.8V14.8" stroke="#000" stroke-width="1.7" fill="none"/>
<path d="M517.5 1H525.5L521.5 5.5Z" fill="#ff9c00"/>
<path d="M515.5 17H527.5L521.5 23.5Z" fill="#ff9c00"/>
<path d="M316.5 24H325.5Q327 24 327 25.5V35L321 39.3L315 35V25.5Q315 24 316.5 24Z" fill="#ff9c00"/>
<path d="M316.3 26H325.7M321 26V36.2" stroke="#000" stroke-width="2" fill="none"/>
<path d="M332.5 17V668M335.5 17V668" stroke="#c400c4" stroke-width="1.2" stroke-dasharray="6 2 3 2" fill="none"/>
<path d="M1010 155.5L1016.2 149.6V161.4Z" fill="#ffff00"/><path d="M1016 155.5H1021" stroke="#ffff00" stroke-width="1.5"/>
<path d="M0 208H13.5L19.8 216L13.5 224H0Z" fill="#ffff00"/>
<text x="7.5" y="221.6" fill="#000" stroke="#000" stroke-width=".3" font-size="15.4" text-anchor="middle" style="font-family:'Liberation Sans','DejaVu Sans',sans-serif">1</text>
<path d="M1.5 400.7H13.3L19 408.7L13.3 416.7H1.5Q.7 416.7 .7 415.7V401.7Q.7 400.7 1.5 400.7Z" fill="#000" stroke="#00d8d8" stroke-width="1.2"/>
<text x="7.6" y="414" fill="#00f0f0" stroke="#00f0f0" stroke-width=".3" font-size="15.4" text-anchor="middle" style="font-family:'Liberation Sans','DejaVu Sans',sans-serif">2</text>
<path d="M1.5 589.7H13.3L19 597.7L13.3 605.7H1.5Q.7 605.7 .7 604.7V590.7Q.7 589.7 1.5 589.7Z" fill="#000" stroke="#b400b4" stroke-width="1.2"/>
<text x="7.6" y="603" fill="#c000c0" stroke="#c000c0" stroke-width=".3" font-size="15.4" text-anchor="middle" style="font-family:'Liberation Sans','DejaVu Sans',sans-serif">3</text>
<rect x="22" y="208" width="78" height="16" fill="#000"/>
<text transform="translate(24.5,220.5) scale(1.08,1)" x="-1.37" y="0" fill="#fff" stroke="#fff" stroke-width="0.35" font-size="14" letter-spacing="0.690">D<tspan dy="-1.7">_</tspan><tspan dy="1.7">READY</tspan></text>
<rect x="22" y="400" width="32" height="16" fill="#000"/>
<text transform="translate(24,412.6) scale(1.08,1)" x="-0.79" y="0" fill="#fff" stroke="#fff" stroke-width="0.35" font-size="14" letter-spacing="-0.539">CLK</text>
<rect x="22" y="589" width="49" height="16" fill="#000"/>
<text transform="translate(24.5,601.7) scale(1.08,1)" x="-1.37" y="0" fill="#fff" stroke="#fff" stroke-width="0.35" font-size="14" letter-spacing="1.094">DATA</text>
<text x="-0.5" y="14.8" fill="#000" stroke="#000" stroke-width=".3" font-size="20.5" font-weight="bold" letter-spacing="-1.25" style="font-family:'Liberation Serif','DejaVu Serif',serif">Tek</text>
<text transform="translate(34.8,13.1) scale(1.08,1)" x="-0.99" y="0" fill="#fff" stroke="#fff" stroke-width="0.35" font-size="15" letter-spacing="0.223">Stop</text>
<rect x="20.5" y="652.5" width="554" height="20" rx="5.5" fill="#000400" stroke="#e4e4e4" stroke-width="1"/>
<rect x="26" y="654.7" width="25.2" height="16.4" rx="8.2" fill="#ffff00"/>
<text x="38.6" y="668" fill="#000" stroke="#000" stroke-width=".45" font-size="15.4" text-anchor="middle" style="font-family:'Liberation Sans','DejaVu Sans',sans-serif">1</text>
<text transform="translate(68.5,668) scale(1.08,1)" x="-1.03" y="0" fill="#ffff00" stroke="#ffff00" stroke-width="0.35" font-size="14" letter-spacing="0.448">2.00 V</text>
<rect x="165" y="654.7" width="25.2" height="16.4" rx="8.2" fill="#00e0e0"/>
<text x="177.6" y="668" fill="#000" stroke="#000" stroke-width=".45" font-size="15.4" text-anchor="middle" style="font-family:'Liberation Sans','DejaVu Sans',sans-serif">2</text>
<text transform="translate(207.5,668) scale(1.08,1)" x="-1.03" y="0" fill="#00e0e0" stroke="#00e0e0" stroke-width="0.35" font-size="14" letter-spacing="0.448">2.00 V</text>
<rect x="304" y="654.7" width="25.2" height="16.4" rx="8.2" fill="#a800a8"/>
<text x="316.6" y="668" fill="#000" stroke="#000" stroke-width=".45" font-size="15.4" text-anchor="middle" style="font-family:'Liberation Sans','DejaVu Sans',sans-serif">3</text>
<text transform="translate(346.5,668) scale(1.08,1)" x="-1.03" y="0" fill="#b400b4" stroke="#b400b4" stroke-width="0.35" font-size="14" letter-spacing="0.448">2.00 V</text>
<rect x="20.5" y="674.5" width="554" height="38" rx="5.5" fill="#000400" stroke="#e4e4e4" stroke-width="1"/>
<rect x="26" y="677" width="25.2" height="16" rx="8" fill="#a800a8"/>
<text x="38.6" y="689.9" fill="#000" stroke="#000" stroke-width=".45" font-size="15.4" text-anchor="middle" style="font-family:'Liberation Sans','DejaVu Sans',sans-serif">3</text>
<text transform="translate(56.6,689.8) scale(1.08,1)" x="-1.37" y="0" fill="#b400b4" stroke="#b400b4" stroke-width="0.35" font-size="14" letter-spacing="0.439">Frequency</text>
<text transform="translate(158.7,689.8) scale(1.08,1)" x="-1.03" y="0" fill="#b400b4" stroke="#b400b4" stroke-width="0.35" font-size="14" letter-spacing="0.716">237.5kHz</text>
<rect x="26" y="695" width="25.2" height="16.2" rx="8.1" fill="#ffff00"/>
<text x="38.6" y="708.1" fill="#000" stroke="#000" stroke-width=".45" font-size="15.4" text-anchor="middle" style="font-family:'Liberation Sans','DejaVu Sans',sans-serif">1</text>
<text transform="translate(56,707.7) scale(1.08,1)" x="-1.48" y="0" fill="#ffff00" stroke="#ffff00" stroke-width="0.35" font-size="14" letter-spacing="0.264">+Pulses</text>
<text transform="translate(158.7,707.7) scale(1.08,1)" x="-1.03" y="0" fill="#ffff00" stroke="#ffff00" stroke-width="0.35" font-size="14" letter-spacing="0.000">2</text>
<rect x="584.5" y="670.5" width="148" height="37" rx="5.5" fill="#000400" stroke="#e4e4e4" stroke-width="1"/>
<text transform="translate(590.5,686) scale(1.08,1)" x="-1.03" y="0" fill="#fff" stroke="#fff" stroke-width="0.35" font-size="14" letter-spacing="0.866">200µs</text>
<rect x="589.5" y="691" width="11" height="13.5" rx="2" fill="#ff9c00"/>
<path d="M591.5 693.2H598.5M595 693.2V702.8" stroke="#000" stroke-width="1.9" fill="none"/>
<path d="M601 697.8H609M606 694.8L609.3 697.8L606 700.8" stroke="#ff9c00" stroke-width="1.3" fill="none"/>
<path d="M611.5 694H622L616.8 700.5Z" fill="#ff9c00"/>
<text transform="translate(623.75,702.5) scale(1.08,1)" x="-0.68" y="0" fill="#ff9c00" stroke="#ff9c00" stroke-width="0.35" font-size="14" letter-spacing="0.660">400.000µs</text>
<rect x="741.5" y="670.5" width="106" height="37" rx="5.5" fill="#000400" stroke="#e4e4e4" stroke-width="1"/>
<text transform="translate(747.8,685.4) scale(1.08,1)" x="-1.08" y="0" fill="#fff" stroke="#fff" stroke-width="0.35" font-size="14" letter-spacing="0.869">500MS/s</text>
<text transform="translate(748.3,702.5) scale(1.08,1)" x="-1.54" y="0" fill="#fff" stroke="#fff" stroke-width="0.35" font-size="14" letter-spacing="0.902">1M points</text>
<rect x="857.5" y="670.5" width="164" height="37" rx="5.5" fill="#000400" stroke="#e4e4e4" stroke-width="1"/>
<rect x="889" y="672.7" width="25.2" height="16.2" rx="8.1" fill="#ffff00"/>
<text x="901.6" y="685.8" fill="#000" stroke="#000" stroke-width=".45" font-size="15.4" text-anchor="middle" style="font-family:'Liberation Sans','DejaVu Sans',sans-serif">1</text>
<path d="M928 685H931.8L936.2 676.2H940" stroke="#fff" stroke-width="1.9" fill="none"/>
<text transform="translate(964.4,685.5) scale(1.08,1)" x="-1.54" y="0" fill="#fff" stroke="#fff" stroke-width="0.35" font-size="14" letter-spacing="0.161">1.88 V</text>
<rect x="909.5" y="729.5" width="112" height="36" rx="5.5" fill="#000400" stroke="#e4e4e4" stroke-width="1"/>
<text transform="translate(917,745.5) scale(1.08,1)" x="-1.54" y="0" fill="#fff" stroke="#fff" stroke-width="0.35" font-size="14" letter-spacing="0.284">19 May 2017</text>
<text transform="translate(917,761.4) scale(1.08,1)" x="-1.54" y="0" fill="#fff" stroke="#fff" stroke-width="0.35" font-size="14" letter-spacing="0.437">17:24:16</text>
<rect x="20.9" y="714.6" width="113.1" height="52.6" rx="5" fill="#000814"/>
<rect x="20.3" y="714" width="112.7" height="52.2" rx="5" fill="#98c6ff"/>
<rect x="22.1" y="715.2" width="110.9" height="51" rx="4" fill="#5689e2"/>
<rect x="138.9" y="714.6" width="113.1" height="52.6" rx="5" fill="#000814"/>
<rect x="138.3" y="714" width="112.7" height="52.2" rx="5" fill="#98c6ff"/>
<rect x="140.1" y="715.2" width="110.9" height="51" rx="4" fill="#5689e2"/>
<rect x="256.9" y="714.6" width="113.1" height="52.6" rx="5" fill="#000814"/>
<rect x="256.3" y="714" width="112.7" height="52.2" rx="5" fill="#98c6ff"/>
<rect x="258.1" y="715.2" width="110.9" height="51" rx="4" fill="#5689e2"/>
<rect x="374.9" y="714.6" width="113.1" height="52.6" rx="5" fill="#000814"/>
<rect x="374.3" y="714" width="112.7" height="52.2" rx="5" fill="#98c6ff"/>
<rect x="376.1" y="715.2" width="110.9" height="51" rx="4" fill="#5689e2"/>
<rect x="492.9" y="714.6" width="113.1" height="52.6" rx="5" fill="#000814"/>
<rect x="492.3" y="714" width="112.7" height="52.2" rx="5" fill="#98c6ff"/>
<rect x="494.1" y="715.2" width="110.9" height="51" rx="4" fill="#5689e2"/>
<rect x="610.9" y="714.6" width="113.1" height="52.6" rx="5" fill="#000814"/>
<rect x="610.3" y="714" width="112.7" height="52.2" rx="5" fill="#98c6ff"/>
<rect x="612.1" y="715.2" width="110.9" height="51" rx="4" fill="#5689e2"/>
<text transform="translate(56.5,737.25) scale(1.08,1)" x="-1.37" y="0" fill="#000" stroke="#000" stroke-width="0.35" font-size="14" letter-spacing="0.954">Mode</text>
<rect x="49" y="742" width="57" height="16" fill="#c4cce8"/>
<text transform="translate(50.5,754.75) scale(1.08,1)" x="-0.92" y="0" fill="#000" stroke="#000" stroke-width="0.35" font-size="14" letter-spacing="0.020">Sample</text>
<text transform="translate(169,728.25) scale(1.08,1)" x="-1.37" y="0" fill="#000" stroke="#000" stroke-width="0.35" font-size="14" letter-spacing="0.402">Record</text>
<text transform="translate(168,745.25) scale(1.08,1)" x="-1.37" y="0" fill="#000" stroke="#000" stroke-width="0.35" font-size="14" letter-spacing="0.806">Length</text>
<rect x="183" y="750" width="25" height="15.5" fill="#c4cce8"/>
<text transform="translate(185.5,762) scale(1.08,1)" x="-1.54" y="0" fill="#000" stroke="#000" stroke-width="0.35" font-size="14" letter-spacing="0.900">1M</text>
<text transform="translate(292.5,732.75) scale(1.08,1)" x="-1.37" y="0" fill="#000" stroke="#000" stroke-width="0.35" font-size="14" letter-spacing="-0.041">Delay</text>
<rect x="268" y="739" width="31.5" height="24.5" rx="4" fill="#c4cce8"/>
<text transform="translate(273,756.5) scale(1.08,1)" x="-0.79" y="0" fill="#000" stroke="#000" stroke-width="0.35" font-size="14" letter-spacing="2.916">On</text>
<text transform="translate(330,756.5) scale(1.08,1)" x="-0.79" y="0" fill="#000" stroke="#000" stroke-width="0.35" font-size="14" letter-spacing="0.817">Off</text>
<text transform="translate(392.5,728.5) scale(1.08,1)" x="-0.92" y="0" fill="#000" stroke="#000" stroke-width="0.35" font-size="14" letter-spacing="0.691">Set Horiz.</text>
<text transform="translate(399.5,745.25) scale(1.08,1)" x="-1.37" y="0" fill="#000" stroke="#000" stroke-width="0.35" font-size="14" letter-spacing="0.907">Position</text>
<text transform="translate(410,762) scale(1.08,1)" x="-0.38" y="0" fill="#000" stroke="#000" stroke-width="0.35" font-size="14" letter-spacing="0.483">to 0 s</text>
<text transform="translate(510,737.25) scale(1.08,1)" x="-0.46" y="0" fill="#000" stroke="#000" stroke-width="0.35" font-size="14" letter-spacing="0.338">Waveform</text>
<text transform="translate(521,754.75) scale(1.08,1)" x="-1.37" y="0" fill="#000" stroke="#000" stroke-width="0.35" font-size="14" letter-spacing="0.494">Display</text>
<text transform="translate(625.5,737.25) scale(1.08,1)" x="-0.42" y="0" fill="#000" stroke="#000" stroke-width="0.35" font-size="14" letter-spacing="0.336">XY Display</text>
<rect x="655" y="742" width="25" height="16" fill="#c4cce8"/>
<text transform="translate(656,754.75) scale(1.08,1)" x="-0.79" y="0" fill="#000" stroke="#000" stroke-width="0.35" font-size="14" letter-spacing="0.469">Off</text>
</svg>
</body></html>
